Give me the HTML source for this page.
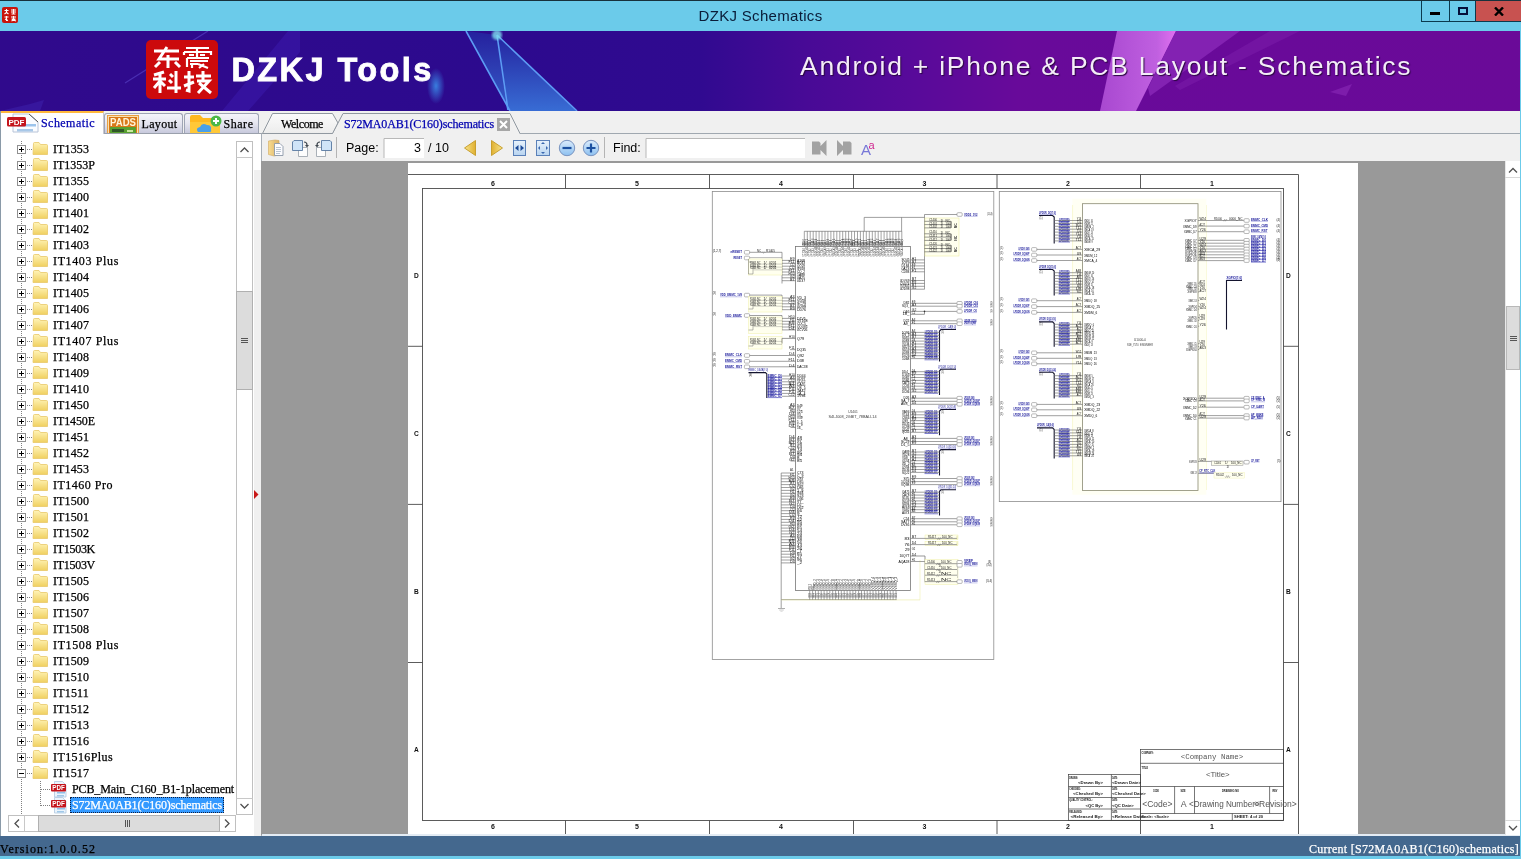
<!DOCTYPE html>
<html>
<head>
<meta charset="utf-8">
<title>DZKJ Schematics</title>
<style>
*{box-sizing:border-box;margin:0;padding:0}
html,body{width:1521px;height:859px;overflow:hidden}
body{position:relative;background:#6bcbea;font-family:"Liberation Sans",sans-serif;font-size:12px;color:#000}
.abs{position:absolute}
#topline{left:0;top:0;width:1521px;height:1px;background:#17313c}
#title{will-change:transform;left:0;top:6px;width:1521px;text-align:center;font-size:15px;line-height:20px;color:#0a1c38;letter-spacing:.32px}
#appicon{left:2px;top:7px;width:16px;height:16px;background:#c8140c;border-radius:2px}
#ctl{left:1421px;top:1px;width:100px;height:21px}
#ctl .b{position:absolute;top:0;height:21px;border:1px solid #0b3a4e;border-top:none}
#banner{will-change:transform;left:0;top:31px;width:1520px;height:80px;background:linear-gradient(90deg,#300a8c 0,#2c0a8e 33%,#300a90 46%,#480a96 53%,#580a9a 60%,#680a9a 67%,#6a0a98 100%);overflow:hidden}
#work{left:0;top:0;width:1521px;height:859px;will-change:transform}
#workbg{left:0;top:111px;width:1520px;height:725px;background:#f0f0f0}
.ser{font-family:"Liberation Serif",serif;font-size:12px;line-height:16px;white-space:pre;-webkit-text-stroke:.25px currentColor}
.row{position:absolute;left:0;height:16px}
.row .t{position:absolute;top:0;height:16px}
#status{will-change:transform;left:0;top:836px;width:1520px;height:20px;background:#44688e}
.mono{font-family:"Liberation Mono",monospace;font-size:10px;letter-spacing:0;white-space:pre}
.tt{display:inline-block;transform:scaleY(1.18);transform-origin:0 50%}
</style>
</head>
<body>
<div id="topline" class="abs"></div>
<div id="appicon" class="abs"></div>
<svg class="abs" style="left:2px;top:7px" width="16" height="16" viewBox="0 0 16 16" stroke="#fff" stroke-width="1.1" fill="none"><path d="M2.500 3.500h4M4.500 2v3.500l-2 1.500M4.500 5.500l2 1.500M9 3h5M9 5h5M11.500 2v5M9.500 7h4M2.500 10h4M4.500 9v5M3 12l3 1.500M9 10h5M11.500 9v2.500M9.500 12h4l-4 2M10 12.500l4 1.500"/></svg>
<div id="title" class="abs">DZKJ Schematics</div>
<div id="ctl" class="abs">
  <div class="b" style="left:0;width:29px"></div>
  <div class="b" style="left:28px;width:28px;border-left:none"></div>
  <div class="b" style="left:54px;width:46px;background:#c85250;border-right:none"></div>
  <div class="abs" style="left:9px;top:11px;width:10px;height:3px;background:#000"></div>
  <div class="abs" style="left:37px;top:6px;width:10px;height:8px;border:2px solid #05103a;border-top-width:2px"></div>
  <svg class="abs" style="left:73px;top:6px" width="10" height="9" viewBox="0 0 10 9"><path d="M1 0.5 L9 8.5 M9 0.5 L1 8.5" stroke="#000" stroke-width="2.4"/></svg>
</div>
<div id="banner" class="abs"><svg class="abs" style="left:0;top:0" width="1520" height="80" viewBox="0 31 1520 80">
<defs>
<linearGradient id="bt" x1="0" y1="0" x2="1" y2="1"><stop offset="0" stop-color="#4a6ae0"/><stop offset="1" stop-color="#3aa0f0"/></linearGradient>
<linearGradient id="bt2" x1="0" y1="0" x2="0" y2="1"><stop offset="0" stop-color="#2424a0"/><stop offset="1" stop-color="#386cd4"/></linearGradient>
<linearGradient id="pv" x1="0" y1="0" x2="1" y2="0"><stop offset="0" stop-color="#a848d0"/><stop offset="0.75" stop-color="#c060e0"/><stop offset="1" stop-color="#e070f0"/></linearGradient>
<radialGradient id="glow"><stop offset="0" stop-color="#3a8ae8" stop-opacity=".9"/><stop offset="1" stop-color="#3a8ae8" stop-opacity="0"/></radialGradient>
<filter id="bl"><feGaussianBlur stdDeviation="1.2"/></filter>
</defs>
<path d="M125 83 L208 31" stroke="#6a5ae0" stroke-width="1.2" opacity=".45"/><polygon points="222,111 248,111 300,52 300,31 288,31" fill="#4428c8" opacity=".3"/><polygon points="0,111 40,111 44,100 30,104" fill="#4a3ad0" opacity=".25"/>
<polygon points="466,31 497,35 507,110 510,110" fill="url(#bt2)" opacity=".85"/>
<polygon points="497,35 576,111 510,111 507,108" fill="url(#bt2)"/>
<path d="M466 31 L510 111 M497 35 L508 110 M497 35 L577 111" stroke="#5c9cf4" stroke-width="1.6" fill="none"/>
<circle cx="497" cy="35" r="5" fill="#7fe0f0" opacity=".8" filter="url(#bl)"/>
<ellipse cx="436" cy="86" rx="9" ry="18" fill="url(#glow)"/>
<polygon points="1117,31 1176,31 1136,111 1100,111" fill="url(#pv)"/>
<polygon points="1176,31 1240,31 1150,96 1148,88" fill="#8a28b8" opacity=".8"/>
<polygon points="1270,31 1300,31 1180,90 1175,86" fill="#7a1aa8" opacity=".6"/>
<polygon points="1330,92 1352,84 1346,96" fill="#8a2ab8" opacity=".6"/>
</svg>
<div class="abs" style="left:146px;top:9px;width:72px;height:59px;background:#cc0a0c;border-radius:5px"></div>
<svg class="abs" style="left:146px;top:9px" width="72" height="59" viewBox="146 40 72 59" fill="none" stroke="#fff" stroke-width="3" stroke-linecap="butt">
<!-- dong -->
<path d="M154 51 H179 M167 47 L159 59 H179 M168 55 V68 M160 62 L155 67 M175 62 L180 67"/>
<!-- zhen -->
<path d="M186 48 H209 M184 52 H211 V55 M184 52 V55 M197 48 V57 M189 55 H194 M200 55 H205 M187 58 H209 M187 58 V67 M190 61 H208 M190 64 H198 M198 64 L208 68 M204 64 L199 68 M192 64 V68" stroke-width="2.2"/>
<!-- ke -->
<path d="M154 75 L164 72 M153 79 H166 M160 74 V93 M160 81 L154 88 M160 81 L165 86 M170 74 L173 77 M169 80 L172 83 M167 88 H181 M176 71 V93"/>
<!-- ji -->
<path d="M184 77 H194 M189 71 V91 L186 90 M184 86 L194 82 M196 76 H211 M203 71 V81 M197 81 H209 L198 93 M199 83 L211 93"/>
</svg>
<div class="abs" id="dz" style="left:231.5px;top:21px;font-weight:bold;font-size:32.5px;line-height:36px;color:#fff;white-space:pre;letter-spacing:2.4px;-webkit-text-stroke:.8px #fff">DZKJ Tools</div>
<div class="abs" id="an" style="left:800px;top:19px;font-size:26.5px;line-height:32px;color:#f4ecf8;white-space:pre;letter-spacing:1.76px;text-shadow:1px 1px 1px #2a0640">Android + iPhone &amp; PCB Layout - Schematics</div>
</div>
<div id="work" class="abs"><div id="workbg" class="abs"></div>
<div class="abs" style="left:0;top:111px;width:1px;height:725px;background:#8a9aa8"></div>
<div class="abs" style="left:1px;top:111px;width:103px;height:23px;background:#fff;border-top:2px solid #ffb83c;border-right:1px solid #c8c8d0"></div>
<div class="abs" style="left:104px;top:133px;width:1416px;height:1px;background:#a0a8b0"></div>
<svg class="abs" style="left:6px;top:112px" width="34" height="22" viewBox="6 112 34 22">
<path d="M13 114 H29 L38 122 V132 H13 Z" fill="#fafcff" stroke="#b8c4d8" stroke-width="1"/>
<path d="M29 114 L38 122" stroke="#555" stroke-width="1"/>
<rect x="17" y="124" width="19" height="2.5" fill="#9cc4ec"/><rect x="17" y="129" width="16" height="2.5" fill="#a8c8e8"/>
<rect x="7" y="117" width="19" height="9.5" rx="1.5" fill="#c4141c"/>
<text x="16.5" y="125" font-family="Liberation Sans" font-weight="bold" font-size="8" fill="#fff" text-anchor="middle" textLength="16" lengthAdjust="spacingAndGlyphs">PDF</text>
</svg>
<div class="abs ser" style="left:41px;top:115px;color:#0000b0;letter-spacing:0.448px;">Schematic</div>
<div class="abs" style="left:104px;top:113px;width:79px;height:21px;border:1px solid #9ea4b4;border-bottom:none;border-radius:3px 3px 0 0;background:linear-gradient(#f4f4fa,#e6e6f0 45%,#c4c6da)"></div>
<div class="abs" style="left:184px;top:113px;width:75px;height:21px;border:1px solid #9ea4b4;border-bottom:none;border-radius:3px 3px 0 0;background:linear-gradient(#f4f4fa,#e6e6f0 45%,#c4c6da)"></div>
<svg class="abs" style="left:106px;top:114px" width="34" height="20" viewBox="106 114 34 20">
<rect x="107" y="115" width="32" height="19" fill="#e8a040"/><rect x="108.500" y="116.500" width="29" height="17" fill="#d87818" stroke="#f8e0b0" stroke-width="1"/>
<rect x="110" y="127" width="26" height="7" fill="#58a030"/><rect x="112" y="129" width="12" height="3" fill="#305828"/><rect x="127" y="130" width="6" height="2" fill="#c8e8a0"/>
<text x="123" y="126" font-family="Liberation Sans" font-weight="bold" font-size="10" fill="#fff4d8" text-anchor="middle" textLength="26" lengthAdjust="spacingAndGlyphs">PADS</text>
</svg>
<div class="abs ser" style="left:141.5px;top:116px;color:#000;letter-spacing:0.336px;">Layout</div>
<svg class="abs" style="left:188px;top:113px" width="36" height="21" viewBox="188 113 36 21">
<path d="M190 117 q0 -2 2 -2 h8 l3 3 h15 q2 0 2 2 v14 h-30 z" fill="#ffb820"/>
<path d="M190 122 h30 v12 h-30 z" fill="#ffc838"/>
<path d="M198 132 q-3 -4 2 -5 q2 -5 7 -2 q5 0 4 5 q1 2 -2 2 z" fill="#4aa0e8"/>
<circle cx="216" cy="121" r="5.500" fill="#4cb848"/>
<path d="M213 121 h6 M216 118 v6" stroke="#fff" stroke-width="2"/>
</svg>
<div class="abs ser" style="left:223.5px;top:116px;color:#000;letter-spacing:0.534px;">Share</div>
<div class="abs" style="left:104px;top:133px;width:157px;height:1px;background:#9aa0ac"></div>
<svg class="abs" style="left:260px;top:111px" width="270" height="24" viewBox="260 111 270 24">
<defs><linearGradient id="dtg" x1="0" y1="0" x2="0" y2="1"><stop offset="0" stop-color="#fbfbfb"/><stop offset="1" stop-color="#ececec"/></linearGradient></defs>
<path d="M262.500 133.500 L272.500 113.500 H332.500 L338 123 L333 133.500 Z" fill="url(#dtg)" stroke="#9098a0" stroke-width="1"/>
<path d="M332.500 134 L343 113.500 H510 L520 134 Z" fill="#f0f0f0"/>
<path d="M332.500 133.500 L343 113.500 H510 L520 133.500" fill="none" stroke="#9098a0" stroke-width="1"/>
<rect x="497" y="118" width="13" height="13" fill="#a6a6a6"/>
<path d="M500 121 L507 128 M507 121 L500 128" stroke="#fff" stroke-width="2"/>
</svg>
<div class="abs ser" style="left:281px;top:116px;color:#000;letter-spacing:-0.431px;">Welcome</div>
<div class="abs ser" style="left:344px;top:116px;color:#0000b0;letter-spacing:-0.133px;">S72MA0AB1(C160)schematics</div>
<div class="abs" style="left:1px;top:134px;width:260px;height:702px;background:#fff"></div>
<div class="abs" style="left:261px;top:134px;width:1px;height:702px;background:#a8b0b8"></div>
<div class="abs" style="left:254px;top:170px;width:7px;height:666px;background:#f0f0f0"></div>
<svg class="abs" style="left:0;top:134px" width="236" height="681" viewBox="0 134 236 681">
<defs><linearGradient id="fg" x1="0" y1="0" x2="0" y2="1"><stop offset="0" stop-color="#fff4b8"/><stop offset="1" stop-color="#f0d060"/></linearGradient><g id="fd"><path d="M0.500 1.500 q0 -1 1 -1 h4.500 l1.500 2 h6 q1 0 1 1 v9 h-14.500 z" fill="url(#fg)" stroke="#e8c868" stroke-width=".8"/></g><g id="pl"><rect x="0.500" y="0.500" width="8" height="8" fill="#fff" stroke="#909090"/><path d="M2 4.500 h5 M4.500 2 v5" stroke="#000" stroke-width="1"/></g><g id="mi"><rect x="0.500" y="0.500" width="8" height="8" fill="#fff" stroke="#909090"/><path d="M2 4.500 h5" stroke="#000" stroke-width="1"/></g><g id="pdf"><path d="M3.500 0.500 h8 l3.500 3.500 v12 h-11.500 z" fill="#eaf4fc" stroke="#b0c8e0" stroke-width=".8"/><rect x="6" y="11" width="8" height="1.500" fill="#90c0e8"/><rect x="6" y="14" width="7" height="1.500" fill="#a0c8e8"/><rect x="0" y="3" width="15" height="7.500" rx="1" fill="#c4141c"/><text x="7.500" y="9.300" font-family="Liberation Sans" font-weight="bold" font-size="6.500" fill="#fff" text-anchor="middle" textLength="12.500" lengthAdjust="spacingAndGlyphs">PDF</text></g></defs>
<path d="M21.500 141 V815" stroke="#808080" stroke-width="1" stroke-dasharray="1 1"/>
<path d="M27 149.5 H33" stroke="#808080" stroke-width="1" stroke-dasharray="1 1"/>
<use href="#pl" x="17" y="145"/>
<use href="#fd" x="33" y="142"/>
<path d="M27 165.5 H33" stroke="#808080" stroke-width="1" stroke-dasharray="1 1"/>
<use href="#pl" x="17" y="161"/>
<use href="#fd" x="33" y="158"/>
<path d="M27 181.5 H33" stroke="#808080" stroke-width="1" stroke-dasharray="1 1"/>
<use href="#pl" x="17" y="177"/>
<use href="#fd" x="33" y="174"/>
<path d="M27 197.5 H33" stroke="#808080" stroke-width="1" stroke-dasharray="1 1"/>
<use href="#pl" x="17" y="193"/>
<use href="#fd" x="33" y="190"/>
<path d="M27 213.5 H33" stroke="#808080" stroke-width="1" stroke-dasharray="1 1"/>
<use href="#pl" x="17" y="209"/>
<use href="#fd" x="33" y="206"/>
<path d="M27 229.5 H33" stroke="#808080" stroke-width="1" stroke-dasharray="1 1"/>
<use href="#pl" x="17" y="225"/>
<use href="#fd" x="33" y="222"/>
<path d="M27 245.5 H33" stroke="#808080" stroke-width="1" stroke-dasharray="1 1"/>
<use href="#pl" x="17" y="241"/>
<use href="#fd" x="33" y="238"/>
<path d="M27 261.5 H33" stroke="#808080" stroke-width="1" stroke-dasharray="1 1"/>
<use href="#pl" x="17" y="257"/>
<use href="#fd" x="33" y="254"/>
<path d="M27 277.5 H33" stroke="#808080" stroke-width="1" stroke-dasharray="1 1"/>
<use href="#pl" x="17" y="273"/>
<use href="#fd" x="33" y="270"/>
<path d="M27 293.5 H33" stroke="#808080" stroke-width="1" stroke-dasharray="1 1"/>
<use href="#pl" x="17" y="289"/>
<use href="#fd" x="33" y="286"/>
<path d="M27 309.5 H33" stroke="#808080" stroke-width="1" stroke-dasharray="1 1"/>
<use href="#pl" x="17" y="305"/>
<use href="#fd" x="33" y="302"/>
<path d="M27 325.5 H33" stroke="#808080" stroke-width="1" stroke-dasharray="1 1"/>
<use href="#pl" x="17" y="321"/>
<use href="#fd" x="33" y="318"/>
<path d="M27 341.5 H33" stroke="#808080" stroke-width="1" stroke-dasharray="1 1"/>
<use href="#pl" x="17" y="337"/>
<use href="#fd" x="33" y="334"/>
<path d="M27 357.5 H33" stroke="#808080" stroke-width="1" stroke-dasharray="1 1"/>
<use href="#pl" x="17" y="353"/>
<use href="#fd" x="33" y="350"/>
<path d="M27 373.5 H33" stroke="#808080" stroke-width="1" stroke-dasharray="1 1"/>
<use href="#pl" x="17" y="369"/>
<use href="#fd" x="33" y="366"/>
<path d="M27 389.5 H33" stroke="#808080" stroke-width="1" stroke-dasharray="1 1"/>
<use href="#pl" x="17" y="385"/>
<use href="#fd" x="33" y="382"/>
<path d="M27 405.5 H33" stroke="#808080" stroke-width="1" stroke-dasharray="1 1"/>
<use href="#pl" x="17" y="401"/>
<use href="#fd" x="33" y="398"/>
<path d="M27 421.5 H33" stroke="#808080" stroke-width="1" stroke-dasharray="1 1"/>
<use href="#pl" x="17" y="417"/>
<use href="#fd" x="33" y="414"/>
<path d="M27 437.5 H33" stroke="#808080" stroke-width="1" stroke-dasharray="1 1"/>
<use href="#pl" x="17" y="433"/>
<use href="#fd" x="33" y="430"/>
<path d="M27 453.5 H33" stroke="#808080" stroke-width="1" stroke-dasharray="1 1"/>
<use href="#pl" x="17" y="449"/>
<use href="#fd" x="33" y="446"/>
<path d="M27 469.5 H33" stroke="#808080" stroke-width="1" stroke-dasharray="1 1"/>
<use href="#pl" x="17" y="465"/>
<use href="#fd" x="33" y="462"/>
<path d="M27 485.5 H33" stroke="#808080" stroke-width="1" stroke-dasharray="1 1"/>
<use href="#pl" x="17" y="481"/>
<use href="#fd" x="33" y="478"/>
<path d="M27 501.5 H33" stroke="#808080" stroke-width="1" stroke-dasharray="1 1"/>
<use href="#pl" x="17" y="497"/>
<use href="#fd" x="33" y="494"/>
<path d="M27 517.5 H33" stroke="#808080" stroke-width="1" stroke-dasharray="1 1"/>
<use href="#pl" x="17" y="513"/>
<use href="#fd" x="33" y="510"/>
<path d="M27 533.5 H33" stroke="#808080" stroke-width="1" stroke-dasharray="1 1"/>
<use href="#pl" x="17" y="529"/>
<use href="#fd" x="33" y="526"/>
<path d="M27 549.5 H33" stroke="#808080" stroke-width="1" stroke-dasharray="1 1"/>
<use href="#pl" x="17" y="545"/>
<use href="#fd" x="33" y="542"/>
<path d="M27 565.5 H33" stroke="#808080" stroke-width="1" stroke-dasharray="1 1"/>
<use href="#pl" x="17" y="561"/>
<use href="#fd" x="33" y="558"/>
<path d="M27 581.5 H33" stroke="#808080" stroke-width="1" stroke-dasharray="1 1"/>
<use href="#pl" x="17" y="577"/>
<use href="#fd" x="33" y="574"/>
<path d="M27 597.5 H33" stroke="#808080" stroke-width="1" stroke-dasharray="1 1"/>
<use href="#pl" x="17" y="593"/>
<use href="#fd" x="33" y="590"/>
<path d="M27 613.5 H33" stroke="#808080" stroke-width="1" stroke-dasharray="1 1"/>
<use href="#pl" x="17" y="609"/>
<use href="#fd" x="33" y="606"/>
<path d="M27 629.5 H33" stroke="#808080" stroke-width="1" stroke-dasharray="1 1"/>
<use href="#pl" x="17" y="625"/>
<use href="#fd" x="33" y="622"/>
<path d="M27 645.5 H33" stroke="#808080" stroke-width="1" stroke-dasharray="1 1"/>
<use href="#pl" x="17" y="641"/>
<use href="#fd" x="33" y="638"/>
<path d="M27 661.5 H33" stroke="#808080" stroke-width="1" stroke-dasharray="1 1"/>
<use href="#pl" x="17" y="657"/>
<use href="#fd" x="33" y="654"/>
<path d="M27 677.5 H33" stroke="#808080" stroke-width="1" stroke-dasharray="1 1"/>
<use href="#pl" x="17" y="673"/>
<use href="#fd" x="33" y="670"/>
<path d="M27 693.5 H33" stroke="#808080" stroke-width="1" stroke-dasharray="1 1"/>
<use href="#pl" x="17" y="689"/>
<use href="#fd" x="33" y="686"/>
<path d="M27 709.5 H33" stroke="#808080" stroke-width="1" stroke-dasharray="1 1"/>
<use href="#pl" x="17" y="705"/>
<use href="#fd" x="33" y="702"/>
<path d="M27 725.5 H33" stroke="#808080" stroke-width="1" stroke-dasharray="1 1"/>
<use href="#pl" x="17" y="721"/>
<use href="#fd" x="33" y="718"/>
<path d="M27 741.5 H33" stroke="#808080" stroke-width="1" stroke-dasharray="1 1"/>
<use href="#pl" x="17" y="737"/>
<use href="#fd" x="33" y="734"/>
<path d="M27 757.5 H33" stroke="#808080" stroke-width="1" stroke-dasharray="1 1"/>
<use href="#pl" x="17" y="753"/>
<use href="#fd" x="33" y="750"/>
<path d="M27 773.5 H33" stroke="#808080" stroke-width="1" stroke-dasharray="1 1"/>
<use href="#mi" x="17" y="769"/>
<use href="#fd" x="33" y="766"/>
<path d="M40.500 781 V806" stroke="#808080" stroke-width="1" stroke-dasharray="1 1"/>
<path d="M41 789.5 H51" stroke="#808080" stroke-width="1" stroke-dasharray="1 1"/>
<use href="#pdf" x="51" y="781"/>
<path d="M41 805.5 H51" stroke="#808080" stroke-width="1" stroke-dasharray="1 1"/>
<use href="#pdf" x="51" y="797"/>
</svg>
<div class="abs ser" style="left:53px;top:141px;color:#000;letter-spacing:0.112px;">IT1353</div>
<div class="abs ser" style="left:53px;top:157px;color:#000;letter-spacing:0.000px;">IT1353P</div>
<div class="abs ser" style="left:53px;top:173px;color:#000;letter-spacing:0.112px;">IT1355</div>
<div class="abs ser" style="left:53px;top:189px;color:#000;letter-spacing:0.112px;">IT1400</div>
<div class="abs ser" style="left:53px;top:205px;color:#000;letter-spacing:0.112px;">IT1401</div>
<div class="abs ser" style="left:53px;top:221px;color:#000;letter-spacing:0.112px;">IT1402</div>
<div class="abs ser" style="left:53px;top:237px;color:#000;letter-spacing:0.112px;">IT1403</div>
<div class="abs ser" style="left:53px;top:253px;color:#000;letter-spacing:0.636px;">IT1403 Plus</div>
<div class="abs ser" style="left:53px;top:269px;color:#000;letter-spacing:0.112px;">IT1404</div>
<div class="abs ser" style="left:53px;top:285px;color:#000;letter-spacing:0.112px;">IT1405</div>
<div class="abs ser" style="left:53px;top:301px;color:#000;letter-spacing:0.112px;">IT1406</div>
<div class="abs ser" style="left:53px;top:317px;color:#000;letter-spacing:0.112px;">IT1407</div>
<div class="abs ser" style="left:53px;top:333px;color:#000;letter-spacing:0.636px;">IT1407 Plus</div>
<div class="abs ser" style="left:53px;top:349px;color:#000;letter-spacing:0.112px;">IT1408</div>
<div class="abs ser" style="left:53px;top:365px;color:#000;letter-spacing:0.112px;">IT1409</div>
<div class="abs ser" style="left:53px;top:381px;color:#000;letter-spacing:0.112px;">IT1410</div>
<div class="abs ser" style="left:53px;top:397px;color:#000;letter-spacing:0.112px;">IT1450</div>
<div class="abs ser" style="left:53px;top:413px;color:#000;letter-spacing:-0.094px;">IT1450E</div>
<div class="abs ser" style="left:53px;top:429px;color:#000;letter-spacing:0.112px;">IT1451</div>
<div class="abs ser" style="left:53px;top:445px;color:#000;letter-spacing:0.112px;">IT1452</div>
<div class="abs ser" style="left:53px;top:461px;color:#000;letter-spacing:0.112px;">IT1453</div>
<div class="abs ser" style="left:53px;top:477px;color:#000;letter-spacing:0.500px;">IT1460 Pro</div>
<div class="abs ser" style="left:53px;top:493px;color:#000;letter-spacing:0.112px;">IT1500</div>
<div class="abs ser" style="left:53px;top:509px;color:#000;letter-spacing:0.112px;">IT1501</div>
<div class="abs ser" style="left:53px;top:525px;color:#000;letter-spacing:0.112px;">IT1502</div>
<div class="abs ser" style="left:53px;top:541px;color:#000;letter-spacing:-0.286px;">IT1503K</div>
<div class="abs ser" style="left:53px;top:557px;color:#000;letter-spacing:-0.286px;">IT1503V</div>
<div class="abs ser" style="left:53px;top:573px;color:#000;letter-spacing:0.112px;">IT1505</div>
<div class="abs ser" style="left:53px;top:589px;color:#000;letter-spacing:0.112px;">IT1506</div>
<div class="abs ser" style="left:53px;top:605px;color:#000;letter-spacing:0.112px;">IT1507</div>
<div class="abs ser" style="left:53px;top:621px;color:#000;letter-spacing:0.112px;">IT1508</div>
<div class="abs ser" style="left:53px;top:637px;color:#000;letter-spacing:0.636px;">IT1508 Plus</div>
<div class="abs ser" style="left:53px;top:653px;color:#000;letter-spacing:0.112px;">IT1509</div>
<div class="abs ser" style="left:53px;top:669px;color:#000;letter-spacing:0.112px;">IT1510</div>
<div class="abs ser" style="left:53px;top:685px;color:#000;letter-spacing:0.185px;">IT1511</div>
<div class="abs ser" style="left:53px;top:701px;color:#000;letter-spacing:0.112px;">IT1512</div>
<div class="abs ser" style="left:53px;top:717px;color:#000;letter-spacing:0.112px;">IT1513</div>
<div class="abs ser" style="left:53px;top:733px;color:#000;letter-spacing:0.112px;">IT1516</div>
<div class="abs ser" style="left:53px;top:749px;color:#000;letter-spacing:0.400px;">IT1516Plus</div>
<div class="abs ser" style="left:53px;top:765px;color:#000;letter-spacing:0.112px;">IT1517</div>
<div class="abs ser" style="left:72px;top:781px;color:#000;letter-spacing:-0.122px;">PCB_Main_C160_B1-1placement</div>
<div class="abs" style="left:70px;top:797px;width:154px;height:16px;background:#3399ff;border:1px dotted #102040"></div>
<div class="abs ser" style="left:72px;top:797px;color:#fff;letter-spacing:-0.133px;">S72MA0AB1(C160)schematics</div>
<svg class="abs" style="left:236px;top:140px" width="17" height="675" viewBox="236 140 17 675">
<rect x="236.500" y="141.500" width="16" height="673" fill="#fff" stroke="#c0c0c0"/>
<path d="M236.500 157.500 h16 M236.500 798.500 h16" stroke="#c8c8c8"/>
<rect x="236.500" y="291.500" width="16" height="98" fill="#dcdcdc" stroke="#b0b0b0"/>
<path d="M241 338.500 h7 M241 340.500 h7 M241 342.500 h7" stroke="#555" stroke-width="1"/>
<path d="M240.500 152 L244.500 148 L248.500 152" fill="none" stroke="#505050" stroke-width="1.300"/>
<path d="M240.500 804 L244.500 808 L248.500 804" fill="none" stroke="#505050" stroke-width="1.300"/>
</svg>
<svg class="abs" style="left:8px;top:815px" width="228" height="18" viewBox="8 815 228 18">
<rect x="8.500" y="815.500" width="227" height="16" fill="#fff" stroke="#c0c0c0"/>
<path d="M24.500 815.500 v16 M219.500 815.500 v16" stroke="#c8c8c8"/>
<rect x="38.500" y="815.500" width="181" height="16" fill="#dcdcdc" stroke="#b0b0b0"/>
<path d="M125.500 820 v7 M127.500 820 v7 M129.500 820 v7" stroke="#555" stroke-width="1"/>
<path d="M19 819.500 L15 823.500 L19 827.500" fill="none" stroke="#505050" stroke-width="1.300"/>
<path d="M225 819.500 L229 823.500 L225 827.500" fill="none" stroke="#505050" stroke-width="1.300"/>
</svg>
<svg class="abs" style="left:254px;top:489px" width="5" height="11" viewBox="0 0 5 11"><path d="M0 1 L4.500 5.500 L0 10 Z" fill="#c81818"/></svg>
<div class="abs" style="left:262px;top:134px;width:1258px;height:27px;background:#f0f0f0"></div>
<svg class="abs" style="left:262px;top:134px" width="640" height="27" viewBox="262 134 640 27">
<defs>
<linearGradient id="gold" x1="0" y1="0" x2="1" y2="0"><stop offset="0" stop-color="#f8e48c"/><stop offset="1" stop-color="#e0b030"/></linearGradient>
<linearGradient id="gold2" x1="1" y1="0" x2="0" y2="0"><stop offset="0" stop-color="#f8e48c"/><stop offset="1" stop-color="#e0b030"/></linearGradient>
<linearGradient id="lb" x1="0" y1="0" x2="0" y2="1"><stop offset="0" stop-color="#e8f2fc"/><stop offset="1" stop-color="#b8d4f0"/></linearGradient>
<linearGradient id="cb" x1="0" y1="0" x2="0" y2="1"><stop offset="0" stop-color="#dcecfc"/><stop offset="1" stop-color="#8cc0f0"/></linearGradient>
<linearGradient id="tan" x1="0" y1="0" x2="1" y2="0"><stop offset="0" stop-color="#f8dc90"/><stop offset="1" stop-color="#d8b068"/></linearGradient>
</defs>
<!-- icon1 paste -->
<path d="M268.500 141 L275 140 L279 140.500 V155 L274 156 L268.500 154.500 Z" fill="url(#tan)" stroke="#d0a860" stroke-width=".6"/>
<path d="M274.500 143.500 H280 L283 146.500 V155.500 H274.500 Z" fill="#fcfcff" stroke="#8c98a8" stroke-width=".9"/>
<path d="M276 147.500 h5 M276 149.500 h5 M276 151.500 h5 M276 153.500 h4" stroke="#a8b8c8" stroke-width=".8"/>
<!-- icon2 rotate cw -->
<path d="M298.500 147.500 H307.500 V156.500 H298.500 Z" fill="#fdfdfd" stroke="#a0a8b0" stroke-width=".9"/>
<path d="M292.500 142 L294 140.500 H302.500 V150.500 H292.500 Z" fill="#cfe4f8" stroke="#5878a0" stroke-width=".9"/>
<path d="M304 142 q3 0 3 3" fill="none" stroke="#404850" stroke-width="1.200"/><path d="M305 145 h4 l-2 2.500 z" fill="#404850"/>
<!-- icon3 rotate ccw -->
<path d="M316.500 147.500 H325.500 V156.500 H316.500 Z" fill="#fdfdfd" stroke="#a0a8b0" stroke-width=".9"/>
<path d="M321.500 140.500 H330 L331.500 142 V150.500 H321.500 Z" fill="#cfe4f8" stroke="#5878a0" stroke-width=".9"/>
<path d="M320 142 q-3 0 -3 3" fill="none" stroke="#404850" stroke-width="1.200"/><path d="M315 145 h4 l-2 2.500 z" fill="#404850"/>
<path d="M336.500 137 V158 M604.500 137 V158" stroke="#b4b4b4" stroke-width="1"/>
<!-- page input -->
<rect x="384" y="138" width="40" height="20" fill="#fff"/><path d="M384 158 V138.500 H424" fill="none" stroke="#b8b8b8" stroke-width="1"/>
<!-- arrows -->
<path d="M475.500 140.500 V155.500 L464.500 148 Z" fill="url(#gold)" stroke="#c8a030" stroke-width="1" stroke-linejoin="round"/>
<path d="M491.500 140.500 V155.500 L502.500 148 Z" fill="url(#gold2)" stroke="#c8a030" stroke-width="1" stroke-linejoin="round"/>
<!-- fit width -->
<rect x="513.500" y="140.500" width="12" height="15" fill="url(#lb)" stroke="#5a80b8"/>
<path d="M518.500 145 V151 L515 148 Z M520.500 145 V151 L524 148 Z" fill="#1c4a98"/>
<!-- fit page -->
<rect x="536.500" y="140.500" width="13" height="15" fill="url(#lb)" stroke="#5a80b8"/>
<path d="M541 144 H545 L543 142 Z M541 152 H545 L543 154 Z M540 146 V150 L538 148 Z M546 146 V150 L548 148 Z" fill="#3a68b0"/>
<!-- zoom out / in -->
<circle cx="567" cy="148" r="7.700" fill="url(#cb)" stroke="#7a94c0" stroke-width="1"/>
<path d="M562.500 148 h9" stroke="#1c50a0" stroke-width="2.200"/>
<circle cx="591" cy="148" r="7.700" fill="url(#cb)" stroke="#7a94c0" stroke-width="1"/>
<path d="M586.500 148 h9 M591 143.500 v9" stroke="#1c50a0" stroke-width="2.200"/>
<!-- find input -->
<rect x="646" y="138" width="159" height="20" fill="#fff"/><path d="M646 158 V138.500 H805" fill="none" stroke="#b8b8b8" stroke-width="1"/>
<!-- find prev/next -->
<path d="M812 141.500 H819 L820.500 143 V146 L826.500 140 V156 L820.500 150 V154.500 H812 Z" fill="#a2a2a2"/>
<path d="M837 140 L843 146 V141.500 H850 L851.500 143 V154.500 H843 V150 L837 156 Z" fill="#a2a2a2"/>
<!-- Aa -->
<text x="861" y="155" font-family="Liberation Sans" font-size="15" fill="#7878d8">A</text>
<text x="868.500" y="148.500" font-family="Liberation Sans" font-size="11" fill="#d02890">a</text>
</svg>
<div class="abs" style="left:346px;top:140px;font-size:12.5px;line-height:16px;white-space:pre">Page:</div>
<div class="abs" style="left:384px;top:140px;width:37px;text-align:right;font-size:12.5px;line-height:16px">3</div>
<div class="abs" style="left:428px;top:140px;font-size:12.5px;line-height:16px;white-space:pre">/ 10</div>
<div class="abs" style="left:613px;top:140px;font-size:12.5px;line-height:16px;white-space:pre">Find:</div>

<div class="abs" style="left:261px;top:161px;width:1245px;height:674px;background:#999"></div>
<div class="abs" style="left:262px;top:834px;width:1258px;height:2px;background:#e4ecf4"></div>
<!-- v scrollbar -->
<svg class="abs" style="left:1505px;top:161px" width="16" height="674" viewBox="1505 161 16 674">
<rect x="1505" y="161" width="15" height="674" fill="#fff"/>
<path d="M1505.500 161 V835" stroke="#e8e8e8"/>
<path d="M1505 177.500 h15 M1505 820.500 h15" stroke="#d8d8d8"/>
<rect x="1506.500" y="306.500" width="13" height="63" fill="#dcdcdc" stroke="#b8b8b8"/>
<path d="M1510 336.500 h7 M1510 338.500 h7 M1510 340.500 h7" stroke="#555"/>
<path d="M1509 172.500 L1513 168.500 L1517 172.500" fill="none" stroke="#505050" stroke-width="1.300"/>
<path d="M1509 826 L1513 830 L1517 826" fill="none" stroke="#505050" stroke-width="1.300"/>
</svg>
<svg class="abs" style="left:408px;top:163px" width="950" height="671" viewBox="408 163 950 671" font-family="Liberation Sans">
<rect x="408" y="163" width="950" height="671" fill="#fff"/>
<path d="M408.0 174.5H1298.5" stroke="#4a4a4a" stroke-width="0.9"/>
<path d="M1298.5 174.5V834.0" stroke="#4a4a4a" stroke-width="0.9"/>
<rect x="422.5" y="188.5" width="861.0" height="632.0" fill="none" stroke="#4a4a4a" stroke-width="0.9" />
<path d="M565.5 174.5V188.5" stroke="#4a4a4a" stroke-width="0.9"/>
<path d="M565.5 820.5V834.0" stroke="#4a4a4a" stroke-width="0.9"/>
<path d="M709.5 174.5V188.5" stroke="#4a4a4a" stroke-width="0.9"/>
<path d="M709.5 820.5V834.0" stroke="#4a4a4a" stroke-width="0.9"/>
<path d="M853.5 174.5V188.5" stroke="#4a4a4a" stroke-width="0.9"/>
<path d="M853.5 820.5V834.0" stroke="#4a4a4a" stroke-width="0.9"/>
<path d="M997.0 174.5V188.5" stroke="#4a4a4a" stroke-width="0.9"/>
<path d="M997.0 820.5V834.0" stroke="#4a4a4a" stroke-width="0.9"/>
<path d="M1140.5 174.5V188.5" stroke="#4a4a4a" stroke-width="0.9"/>
<path d="M1140.5 820.5V834.0" stroke="#4a4a4a" stroke-width="0.9"/>
<path d="M408.0 346.3H422.5" stroke="#4a4a4a" stroke-width="0.9"/>
<path d="M1283.5 346.3H1298.5" stroke="#4a4a4a" stroke-width="0.9"/>
<path d="M408.0 504.4H422.5" stroke="#4a4a4a" stroke-width="0.9"/>
<path d="M1283.5 504.4H1298.5" stroke="#4a4a4a" stroke-width="0.9"/>
<path d="M408.0 662.5H422.5" stroke="#4a4a4a" stroke-width="0.9"/>
<path d="M1283.5 662.5H1298.5" stroke="#4a4a4a" stroke-width="0.9"/>
<text x="493.0" y="186.3" font-size="7" fill="#111" text-anchor="middle" font-weight="bold" >6</text>
<text x="493.0" y="829.3" font-size="7" fill="#111" text-anchor="middle" font-weight="bold" >6</text>
<text x="637.0" y="186.3" font-size="7" fill="#111" text-anchor="middle" font-weight="bold" >5</text>
<text x="637.0" y="829.3" font-size="7" fill="#111" text-anchor="middle" font-weight="bold" >5</text>
<text x="781.0" y="186.3" font-size="7" fill="#111" text-anchor="middle" font-weight="bold" >4</text>
<text x="781.0" y="829.3" font-size="7" fill="#111" text-anchor="middle" font-weight="bold" >4</text>
<text x="924.5" y="186.3" font-size="7" fill="#111" text-anchor="middle" font-weight="bold" >3</text>
<text x="924.5" y="829.3" font-size="7" fill="#111" text-anchor="middle" font-weight="bold" >3</text>
<text x="1068.0" y="186.3" font-size="7" fill="#111" text-anchor="middle" font-weight="bold" >2</text>
<text x="1068.0" y="829.3" font-size="7" fill="#111" text-anchor="middle" font-weight="bold" >2</text>
<text x="1212.0" y="186.3" font-size="7" fill="#111" text-anchor="middle" font-weight="bold" >1</text>
<text x="1212.0" y="829.3" font-size="7" fill="#111" text-anchor="middle" font-weight="bold" >1</text>
<text x="416.3" y="277.9" font-size="6.6" fill="#111" text-anchor="middle" font-weight="bold" >D</text>
<text x="1288.5" y="277.9" font-size="6.6" fill="#111" text-anchor="middle" font-weight="bold" >D</text>
<text x="416.3" y="435.7" font-size="6.6" fill="#111" text-anchor="middle" font-weight="bold" >C</text>
<text x="1288.5" y="435.7" font-size="6.6" fill="#111" text-anchor="middle" font-weight="bold" >C</text>
<text x="416.3" y="593.9" font-size="6.6" fill="#111" text-anchor="middle" font-weight="bold" >B</text>
<text x="1288.5" y="593.9" font-size="6.6" fill="#111" text-anchor="middle" font-weight="bold" >B</text>
<text x="416.3" y="751.9" font-size="6.6" fill="#111" text-anchor="middle" font-weight="bold" >A</text>
<text x="1288.5" y="751.9" font-size="6.6" fill="#111" text-anchor="middle" font-weight="bold" >A</text>
<rect x="1140.5" y="749.4" width="143.0" height="70.9" fill="none" stroke="#3c3c3c" stroke-width="0.7" />
<path d="M1140.5 763.3H1283.5" stroke="#3c3c3c" stroke-width="0.7"/>
<path d="M1140.5 786.5H1283.5" stroke="#3c3c3c" stroke-width="0.7"/>
<path d="M1140.5 813.5H1283.5" stroke="#3c3c3c" stroke-width="0.7"/>
<path d="M1174.6 786.5V813.5" stroke="#3c3c3c" stroke-width="0.7"/>
<path d="M1194.5 786.5V813.5" stroke="#3c3c3c" stroke-width="0.7"/>
<path d="M1269.6 786.5V813.5" stroke="#3c3c3c" stroke-width="0.7"/>
<path d="M1232.3 813.5V820.3" stroke="#3c3c3c" stroke-width="0.7"/>
<rect x="1068.5" y="774.5" width="72.0" height="45.8" fill="none" stroke="#3c3c3c" stroke-width="0.7" />
<path d="M1068.5 786.5H1140.5" stroke="#3c3c3c" stroke-width="0.7"/>
<path d="M1068.5 797.5H1140.5" stroke="#3c3c3c" stroke-width="0.7"/>
<path d="M1068.5 809.0H1140.5" stroke="#3c3c3c" stroke-width="0.7"/>
<path d="M1111.4 774.5V820.3" stroke="#3c3c3c" stroke-width="0.7"/>
<text x="1212.0" y="758.6" font-family="Liberation Mono" font-size="6.8" fill="#555" text-anchor="middle" textLength="62.5" lengthAdjust="spacingAndGlyphs" >&lt;Company Name&gt;</text>
<text x="1217.8" y="777.4" font-size="6.8" fill="#555" text-anchor="middle" textLength="23.6" lengthAdjust="spacingAndGlyphs" >&lt;Title&gt;</text>
<text x="1142.2" y="807.2" font-size="8.8" fill="#555" textLength="30.4" lengthAdjust="spacingAndGlyphs" >&lt;Code&gt;</text>
<text x="1180.8" y="807.2" font-size="8.8" fill="#555" >A</text>
<text x="1189.0" y="807.2" font-size="8.8" fill="#555" textLength="70.7" lengthAdjust="spacingAndGlyphs" >&lt;Drawing Number&gt;</text>
<text x="1254.0" y="807.2" font-size="8.8" fill="#555" textLength="42.7" lengthAdjust="spacingAndGlyphs" >&lt;Revision&gt;</text>
<text x="1141.5" y="754.3" font-size="4.3" fill="#111" font-weight="bold" textLength="12.0" lengthAdjust="spacingAndGlyphs" >COMPANY:</text>
<text x="1141.5" y="769.0" font-size="4.3" fill="#111" font-weight="bold" textLength="6.5" lengthAdjust="spacingAndGlyphs" >TITLE</text>
<text x="1153.0" y="791.5" font-size="4.3" fill="#111" font-weight="bold" textLength="6.0" lengthAdjust="spacingAndGlyphs" >CODE</text>
<text x="1180.5" y="791.5" font-size="4.3" fill="#111" font-weight="bold" textLength="5.0" lengthAdjust="spacingAndGlyphs" >SIZE</text>
<text x="1222.0" y="791.5" font-size="4.3" fill="#111" font-weight="bold" textLength="17.0" lengthAdjust="spacingAndGlyphs" >DRAWING NO</text>
<text x="1272.5" y="791.5" font-size="4.3" fill="#111" font-weight="bold" textLength="5.0" lengthAdjust="spacingAndGlyphs" >REV</text>
<text x="1141.5" y="817.9" font-size="4.3" fill="#222" font-weight="bold" textLength="27.5" lengthAdjust="spacingAndGlyphs" >Scale: &lt;Scale&gt;</text>
<text x="1234.0" y="817.9" font-size="4.3" fill="#222" font-weight="bold" textLength="29.0" lengthAdjust="spacingAndGlyphs" >SHEET: 4  of  20</text>
<text x="1069.3" y="778.6" font-size="4.3" fill="#111" font-weight="bold" textLength="8.7" lengthAdjust="spacingAndGlyphs" >DRAWN:</text>
<text x="1112.2" y="778.6" font-size="4.3" fill="#111" font-weight="bold" textLength="5.5" lengthAdjust="spacingAndGlyphs" >DATE:</text>
<text x="1103.0" y="783.7" font-size="4.2" fill="#222" text-anchor="end" font-weight="bold" textLength="25.0" lengthAdjust="spacingAndGlyphs" >&lt;Drawn By&gt;</text>
<text x="1112.0" y="783.7" font-size="4.2" fill="#222" font-weight="bold" textLength="29.0" lengthAdjust="spacingAndGlyphs" >&lt;Drawn Date&gt;</text>
<text x="1069.3" y="789.9" font-size="4.3" fill="#111" font-weight="bold" textLength="11.6" lengthAdjust="spacingAndGlyphs" >CHECKED:</text>
<text x="1112.2" y="789.9" font-size="4.3" fill="#111" font-weight="bold" textLength="5.5" lengthAdjust="spacingAndGlyphs" >DATE:</text>
<text x="1103.0" y="795.0" font-size="4.2" fill="#222" text-anchor="end" font-weight="bold" textLength="30.0" lengthAdjust="spacingAndGlyphs" >&lt;Checked By&gt;</text>
<text x="1112.0" y="795.0" font-size="4.2" fill="#222" font-weight="bold" textLength="33.9" lengthAdjust="spacingAndGlyphs" >&lt;Checked Date&gt;</text>
<text x="1069.3" y="801.4" font-size="4.3" fill="#111" font-weight="bold" textLength="23.2" lengthAdjust="spacingAndGlyphs" >QUALITY CONTROL:</text>
<text x="1112.2" y="801.4" font-size="4.3" fill="#111" font-weight="bold" textLength="5.5" lengthAdjust="spacingAndGlyphs" >DATE:</text>
<text x="1103.0" y="806.5" font-size="4.2" fill="#222" text-anchor="end" font-weight="bold" textLength="17.5" lengthAdjust="spacingAndGlyphs" >&lt;QC By&gt;</text>
<text x="1112.0" y="806.5" font-size="4.2" fill="#222" font-weight="bold" textLength="21.8" lengthAdjust="spacingAndGlyphs" >&lt;QC Date&gt;</text>
<text x="1069.3" y="812.8" font-size="4.3" fill="#111" font-weight="bold" textLength="13.0" lengthAdjust="spacingAndGlyphs" >RELEASED:</text>
<text x="1112.2" y="812.8" font-size="4.3" fill="#111" font-weight="bold" textLength="5.5" lengthAdjust="spacingAndGlyphs" >DATE:</text>
<text x="1103.0" y="817.9" font-size="4.2" fill="#222" text-anchor="end" font-weight="bold" textLength="32.5" lengthAdjust="spacingAndGlyphs" >&lt;Released By&gt;</text>
<text x="1112.0" y="817.9" font-size="4.2" fill="#222" font-weight="bold" textLength="33.9" lengthAdjust="spacingAndGlyphs" >&lt;Release Date&gt;</text>
<rect x="712.3" y="191.4" width="281.5" height="468.0" fill="none" stroke="#8c8c8c" stroke-width="0.8" />
<rect x="999.3" y="191.4" width="281.7" height="310.2" fill="none" stroke="#8c8c8c" stroke-width="0.8" />
<rect x="795.6" y="246.5" width="115.0" height="344.0" fill="#fff" stroke="#767676" stroke-width=".8"/>
<text x="853.0" y="413.0" font-size="3.7" fill="#3a3a3a" text-anchor="middle" textLength="9.5" lengthAdjust="spacingAndGlyphs" >U1401</text>
<text x="852.5" y="418.0" font-size="3.7" fill="#3a3a3a" text-anchor="middle" textLength="48.0" lengthAdjust="spacingAndGlyphs" >S4LJ008_2GBIT_78BALL14</text>
<path d="M804.3 231.3H901.8" stroke="#6c6c6c" stroke-width="0.65"/>
<path d="M804.3 231.3V246.5" stroke="#666" stroke-width="0.6"/>
<text x="805.3" y="245.8" font-size="3.7" fill="#222" font-weight="bold" textLength="6.5" lengthAdjust="spacingAndGlyphs" transform="rotate(-90 805.3 245.8)" >VDD2_0</text>
<text x="805.3" y="256.5" font-size="3.7" fill="#3c3c3c" textLength="8.0" lengthAdjust="spacingAndGlyphs" transform="rotate(-90 805.3 256.5)" >VDDCA0</text>
<path d="M807.3 231.3V246.5" stroke="#666" stroke-width="0.6"/>
<text x="808.3" y="245.8" font-size="3.7" fill="#222" font-weight="bold" textLength="6.5" lengthAdjust="spacingAndGlyphs" transform="rotate(-90 808.3 245.8)" >VDD2_1</text>
<text x="808.3" y="256.5" font-size="3.7" fill="#3c3c3c" textLength="9.5" lengthAdjust="spacingAndGlyphs" transform="rotate(-90 808.3 256.5)" >VDDCA1</text>
<path d="M810.2 231.3V246.5" stroke="#666" stroke-width="0.6"/>
<text x="811.2" y="245.8" font-size="3.7" fill="#222" font-weight="bold" textLength="5.5" lengthAdjust="spacingAndGlyphs" transform="rotate(-90 811.2 245.8)" >VDD2_2</text>
<text x="811.2" y="256.5" font-size="3.7" fill="#3c3c3c" textLength="8.0" lengthAdjust="spacingAndGlyphs" transform="rotate(-90 811.2 256.5)" >VDDCA2</text>
<path d="M813.2 231.3V246.5" stroke="#666" stroke-width="0.6"/>
<text x="814.2" y="245.8" font-size="3.7" fill="#222" font-weight="bold" textLength="7.0" lengthAdjust="spacingAndGlyphs" transform="rotate(-90 814.2 245.8)" >VDD2_3</text>
<text x="814.2" y="256.5" font-size="3.7" fill="#3c3c3c" textLength="8.0" lengthAdjust="spacingAndGlyphs" transform="rotate(-90 814.2 256.5)" >VDDCA3</text>
<path d="M816.1 231.3V246.5" stroke="#666" stroke-width="0.6"/>
<text x="817.1" y="245.8" font-size="3.7" fill="#222" font-weight="bold" textLength="6.5" lengthAdjust="spacingAndGlyphs" transform="rotate(-90 817.1 245.8)" >VDD2_4</text>
<text x="817.1" y="256.5" font-size="3.7" fill="#3c3c3c" textLength="9.5" lengthAdjust="spacingAndGlyphs" transform="rotate(-90 817.1 256.5)" >VDDCA4</text>
<path d="M819.1 231.3V246.5" stroke="#666" stroke-width="0.6"/>
<text x="820.1" y="245.8" font-size="3.7" fill="#222" font-weight="bold" textLength="5.5" lengthAdjust="spacingAndGlyphs" transform="rotate(-90 820.1 245.8)" >VDD2_5</text>
<text x="820.1" y="256.5" font-size="3.7" fill="#3c3c3c" textLength="9.5" lengthAdjust="spacingAndGlyphs" transform="rotate(-90 820.1 256.5)" >VDDCA5</text>
<path d="M822.0 231.3V246.5" stroke="#666" stroke-width="0.6"/>
<text x="823.0" y="245.8" font-size="3.7" fill="#222" font-weight="bold" textLength="5.5" lengthAdjust="spacingAndGlyphs" transform="rotate(-90 823.0 245.8)" >VDD2_6</text>
<text x="823.0" y="256.5" font-size="3.7" fill="#3c3c3c" textLength="8.0" lengthAdjust="spacingAndGlyphs" transform="rotate(-90 823.0 256.5)" >VDDCA6</text>
<path d="M825.0 231.3V246.5" stroke="#666" stroke-width="0.6"/>
<text x="826.0" y="245.8" font-size="3.7" fill="#222" font-weight="bold" textLength="5.5" lengthAdjust="spacingAndGlyphs" transform="rotate(-90 826.0 245.8)" >VDD2_7</text>
<text x="826.0" y="256.5" font-size="3.7" fill="#3c3c3c" textLength="9.0" lengthAdjust="spacingAndGlyphs" transform="rotate(-90 826.0 256.5)" >VDDCA0</text>
<path d="M827.9 231.3V246.5" stroke="#666" stroke-width="0.6"/>
<text x="828.9" y="245.8" font-size="3.7" fill="#222" font-weight="bold" textLength="6.5" lengthAdjust="spacingAndGlyphs" transform="rotate(-90 828.9 245.8)" >VDD2_8</text>
<text x="828.9" y="256.5" font-size="3.7" fill="#3c3c3c" textLength="8.0" lengthAdjust="spacingAndGlyphs" transform="rotate(-90 828.9 256.5)" >VDDCA1</text>
<path d="M830.9 231.3V246.5" stroke="#666" stroke-width="0.6"/>
<text x="831.9" y="245.8" font-size="3.7" fill="#222" font-weight="bold" textLength="5.5" lengthAdjust="spacingAndGlyphs" transform="rotate(-90 831.9 245.8)" >VDD2_0</text>
<text x="831.9" y="256.5" font-size="3.7" fill="#3c3c3c" textLength="8.0" lengthAdjust="spacingAndGlyphs" transform="rotate(-90 831.9 256.5)" >VDDCA2</text>
<path d="M833.8 231.3V246.5" stroke="#666" stroke-width="0.6"/>
<text x="834.8" y="245.8" font-size="3.7" fill="#222" font-weight="bold" textLength="7.0" lengthAdjust="spacingAndGlyphs" transform="rotate(-90 834.8 245.8)" >VDD2_1</text>
<text x="834.8" y="256.5" font-size="3.7" fill="#3c3c3c" textLength="9.0" lengthAdjust="spacingAndGlyphs" transform="rotate(-90 834.8 256.5)" >VDDCA3</text>
<path d="M836.8 231.3V246.5" stroke="#666" stroke-width="0.6"/>
<text x="837.8" y="245.8" font-size="3.7" fill="#222" font-weight="bold" textLength="5.5" lengthAdjust="spacingAndGlyphs" transform="rotate(-90 837.8 245.8)" >VDD2_2</text>
<text x="837.8" y="256.5" font-size="3.7" fill="#3c3c3c" textLength="9.5" lengthAdjust="spacingAndGlyphs" transform="rotate(-90 837.8 256.5)" >VDDCA4</text>
<path d="M839.8 231.3V246.5" stroke="#666" stroke-width="0.6"/>
<text x="840.8" y="245.8" font-size="3.7" fill="#222" font-weight="bold" textLength="5.5" lengthAdjust="spacingAndGlyphs" transform="rotate(-90 840.8 245.8)" >VDD2_3</text>
<text x="840.8" y="256.5" font-size="3.7" fill="#3c3c3c" textLength="8.0" lengthAdjust="spacingAndGlyphs" transform="rotate(-90 840.8 256.5)" >VDDCA5</text>
<path d="M842.7 231.3V246.5" stroke="#666" stroke-width="0.6"/>
<text x="843.7" y="245.8" font-size="3.7" fill="#222" font-weight="bold" textLength="7.0" lengthAdjust="spacingAndGlyphs" transform="rotate(-90 843.7 245.8)" >VDD2_4</text>
<text x="843.7" y="256.5" font-size="3.7" fill="#3c3c3c" textLength="9.5" lengthAdjust="spacingAndGlyphs" transform="rotate(-90 843.7 256.5)" >VDDCA6</text>
<path d="M845.7 231.3V246.5" stroke="#666" stroke-width="0.6"/>
<text x="846.7" y="245.8" font-size="3.7" fill="#222" font-weight="bold" textLength="7.0" lengthAdjust="spacingAndGlyphs" transform="rotate(-90 846.7 245.8)" >VDD2_5</text>
<text x="846.7" y="256.5" font-size="3.7" fill="#3c3c3c" textLength="8.0" lengthAdjust="spacingAndGlyphs" transform="rotate(-90 846.7 256.5)" >VDDCA0</text>
<path d="M848.6 231.3V246.5" stroke="#666" stroke-width="0.6"/>
<text x="849.6" y="245.8" font-size="3.7" fill="#222" font-weight="bold" textLength="7.0" lengthAdjust="spacingAndGlyphs" transform="rotate(-90 849.6 245.8)" >VDD2_6</text>
<text x="849.6" y="256.5" font-size="3.7" fill="#3c3c3c" textLength="9.5" lengthAdjust="spacingAndGlyphs" transform="rotate(-90 849.6 256.5)" >VDDCA1</text>
<path d="M851.6 231.3V246.5" stroke="#666" stroke-width="0.6"/>
<text x="852.6" y="245.8" font-size="3.7" fill="#222" font-weight="bold" textLength="6.5" lengthAdjust="spacingAndGlyphs" transform="rotate(-90 852.6 245.8)" >VDD2_7</text>
<text x="852.6" y="256.5" font-size="3.7" fill="#3c3c3c" textLength="8.0" lengthAdjust="spacingAndGlyphs" transform="rotate(-90 852.6 256.5)" >VDDCA2</text>
<path d="M854.5 231.3V246.5" stroke="#666" stroke-width="0.6"/>
<text x="855.5" y="245.8" font-size="3.7" fill="#222" font-weight="bold" textLength="5.5" lengthAdjust="spacingAndGlyphs" transform="rotate(-90 855.5 245.8)" >VDD2_8</text>
<text x="855.5" y="256.5" font-size="3.7" fill="#3c3c3c" textLength="8.0" lengthAdjust="spacingAndGlyphs" transform="rotate(-90 855.5 256.5)" >VDDCA3</text>
<path d="M857.5 231.3V246.5" stroke="#666" stroke-width="0.6"/>
<text x="858.5" y="245.8" font-size="3.7" fill="#222" font-weight="bold" textLength="7.0" lengthAdjust="spacingAndGlyphs" transform="rotate(-90 858.5 245.8)" >VDD2_0</text>
<text x="858.5" y="256.5" font-size="3.7" fill="#3c3c3c" textLength="8.0" lengthAdjust="spacingAndGlyphs" transform="rotate(-90 858.5 256.5)" >VDDCA4</text>
<path d="M860.4 231.3V246.5" stroke="#666" stroke-width="0.6"/>
<text x="861.4" y="245.8" font-size="3.7" fill="#222" font-weight="bold" textLength="6.5" lengthAdjust="spacingAndGlyphs" transform="rotate(-90 861.4 245.8)" >VDD2_1</text>
<text x="861.4" y="256.5" font-size="3.7" fill="#3c3c3c" textLength="9.0" lengthAdjust="spacingAndGlyphs" transform="rotate(-90 861.4 256.5)" >VDDCA5</text>
<path d="M863.4 231.3V246.5" stroke="#666" stroke-width="0.6"/>
<text x="864.4" y="245.8" font-size="3.7" fill="#222" font-weight="bold" textLength="5.5" lengthAdjust="spacingAndGlyphs" transform="rotate(-90 864.4 245.8)" >VDD2_2</text>
<text x="864.4" y="256.5" font-size="3.7" fill="#3c3c3c" textLength="9.5" lengthAdjust="spacingAndGlyphs" transform="rotate(-90 864.4 256.5)" >VDDCA6</text>
<path d="M866.3 231.3V246.5" stroke="#666" stroke-width="0.6"/>
<text x="867.3" y="245.8" font-size="3.7" fill="#222" font-weight="bold" textLength="5.5" lengthAdjust="spacingAndGlyphs" transform="rotate(-90 867.3 245.8)" >VDD2_3</text>
<text x="867.3" y="256.5" font-size="3.7" fill="#3c3c3c" textLength="9.5" lengthAdjust="spacingAndGlyphs" transform="rotate(-90 867.3 256.5)" >VDDCA0</text>
<path d="M869.3 231.3V246.5" stroke="#666" stroke-width="0.6"/>
<text x="870.3" y="245.8" font-size="3.7" fill="#222" font-weight="bold" textLength="6.5" lengthAdjust="spacingAndGlyphs" transform="rotate(-90 870.3 245.8)" >VDD2_4</text>
<text x="870.3" y="256.5" font-size="3.7" fill="#3c3c3c" textLength="9.5" lengthAdjust="spacingAndGlyphs" transform="rotate(-90 870.3 256.5)" >VDDCA1</text>
<path d="M872.3 231.3V246.5" stroke="#666" stroke-width="0.6"/>
<text x="873.3" y="245.8" font-size="3.7" fill="#222" font-weight="bold" textLength="7.0" lengthAdjust="spacingAndGlyphs" transform="rotate(-90 873.3 245.8)" >VDD2_5</text>
<text x="873.3" y="256.5" font-size="3.7" fill="#3c3c3c" textLength="8.0" lengthAdjust="spacingAndGlyphs" transform="rotate(-90 873.3 256.5)" >VDDCA2</text>
<path d="M875.2 231.3V246.5" stroke="#666" stroke-width="0.6"/>
<text x="876.2" y="245.8" font-size="3.7" fill="#222" font-weight="bold" textLength="5.5" lengthAdjust="spacingAndGlyphs" transform="rotate(-90 876.2 245.8)" >VDD2_6</text>
<text x="876.2" y="256.5" font-size="3.7" fill="#3c3c3c" textLength="9.5" lengthAdjust="spacingAndGlyphs" transform="rotate(-90 876.2 256.5)" >VDDCA3</text>
<path d="M878.2 231.3V246.5" stroke="#666" stroke-width="0.6"/>
<text x="879.2" y="245.8" font-size="3.7" fill="#222" font-weight="bold" textLength="7.0" lengthAdjust="spacingAndGlyphs" transform="rotate(-90 879.2 245.8)" >VDD2_7</text>
<text x="879.2" y="256.5" font-size="3.7" fill="#3c3c3c" textLength="9.5" lengthAdjust="spacingAndGlyphs" transform="rotate(-90 879.2 256.5)" >VDDCA4</text>
<path d="M881.1 231.3V246.5" stroke="#666" stroke-width="0.6"/>
<text x="882.1" y="245.8" font-size="3.7" fill="#222" font-weight="bold" textLength="5.5" lengthAdjust="spacingAndGlyphs" transform="rotate(-90 882.1 245.8)" >VDD2_8</text>
<text x="882.1" y="256.5" font-size="3.7" fill="#3c3c3c" textLength="9.0" lengthAdjust="spacingAndGlyphs" transform="rotate(-90 882.1 256.5)" >VDDCA5</text>
<path d="M884.1 231.3V246.5" stroke="#666" stroke-width="0.6"/>
<text x="885.1" y="245.8" font-size="3.7" fill="#222" font-weight="bold" textLength="5.5" lengthAdjust="spacingAndGlyphs" transform="rotate(-90 885.1 245.8)" >VDD2_0</text>
<text x="885.1" y="256.5" font-size="3.7" fill="#3c3c3c" textLength="9.5" lengthAdjust="spacingAndGlyphs" transform="rotate(-90 885.1 256.5)" >VDDCA6</text>
<path d="M887.0 231.3V246.5" stroke="#666" stroke-width="0.6"/>
<text x="888.0" y="245.8" font-size="3.7" fill="#222" font-weight="bold" textLength="7.0" lengthAdjust="spacingAndGlyphs" transform="rotate(-90 888.0 245.8)" >VDD2_1</text>
<text x="888.0" y="256.5" font-size="3.7" fill="#3c3c3c" textLength="8.0" lengthAdjust="spacingAndGlyphs" transform="rotate(-90 888.0 256.5)" >VDDCA0</text>
<path d="M890.0 231.3V246.5" stroke="#666" stroke-width="0.6"/>
<text x="891.0" y="245.8" font-size="3.7" fill="#222" font-weight="bold" textLength="7.0" lengthAdjust="spacingAndGlyphs" transform="rotate(-90 891.0 245.8)" >VDD2_2</text>
<text x="891.0" y="256.5" font-size="3.7" fill="#3c3c3c" textLength="8.0" lengthAdjust="spacingAndGlyphs" transform="rotate(-90 891.0 256.5)" >VDDCA1</text>
<path d="M892.9 231.3V246.5" stroke="#666" stroke-width="0.6"/>
<text x="893.9" y="245.8" font-size="3.7" fill="#222" font-weight="bold" textLength="7.0" lengthAdjust="spacingAndGlyphs" transform="rotate(-90 893.9 245.8)" >VDD2_3</text>
<text x="893.9" y="256.5" font-size="3.7" fill="#3c3c3c" textLength="8.0" lengthAdjust="spacingAndGlyphs" transform="rotate(-90 893.9 256.5)" >VDDCA2</text>
<path d="M895.9 231.3V246.5" stroke="#666" stroke-width="0.6"/>
<text x="896.9" y="245.8" font-size="3.7" fill="#222" font-weight="bold" textLength="6.5" lengthAdjust="spacingAndGlyphs" transform="rotate(-90 896.9 245.8)" >VDD2_4</text>
<text x="896.9" y="256.5" font-size="3.7" fill="#3c3c3c" textLength="9.5" lengthAdjust="spacingAndGlyphs" transform="rotate(-90 896.9 256.5)" >VDDCA3</text>
<path d="M898.8 231.3V246.5" stroke="#666" stroke-width="0.6"/>
<text x="899.8" y="245.8" font-size="3.7" fill="#222" font-weight="bold" textLength="7.0" lengthAdjust="spacingAndGlyphs" transform="rotate(-90 899.8 245.8)" >VDD2_5</text>
<text x="899.8" y="256.5" font-size="3.7" fill="#3c3c3c" textLength="9.0" lengthAdjust="spacingAndGlyphs" transform="rotate(-90 899.8 256.5)" >VDDCA4</text>
<path d="M901.8 231.3V246.5" stroke="#666" stroke-width="0.6"/>
<text x="902.8" y="245.8" font-size="3.7" fill="#222" font-weight="bold" textLength="6.5" lengthAdjust="spacingAndGlyphs" transform="rotate(-90 902.8 245.8)" >VDD2_6</text>
<text x="902.8" y="256.5" font-size="3.7" fill="#3c3c3c" textLength="9.0" lengthAdjust="spacingAndGlyphs" transform="rotate(-90 902.8 256.5)" >VDDCA5</text>
<path d="M864.2 217.4V231.3" stroke="#6c6c6c" stroke-width="0.65"/>
<path d="M901.6 217.4V231.3" stroke="#6c6c6c" stroke-width="0.65"/>
<path d="M864.2 217.4H924.5" stroke="#6c6c6c" stroke-width="0.65"/>
<path d="M924.5 214.5V289.3" stroke="#6c6c6c" stroke-width="0.65"/>
<path d="M924.5 214.5H957.0" stroke="#6c6c6c" stroke-width="0.65"/>
<rect x="957.0" y="212.7" width="5.2" height="3.6" fill="#fff" stroke="#8a8a8a" stroke-width="0.6" rx="1"/>
<text x="964.0" y="215.8" font-size="4.3" fill="#1a1a9a" font-weight="bold" textLength="13.5" lengthAdjust="spacingAndGlyphs" >VDD2_1V2</text>
<path d="M964.0 216.4H977.5" stroke="#5a5ac8" stroke-width="0.35"/>
<text x="987.0" y="214.5" font-size="4.3" fill="#111" textLength="5.5" lengthAdjust="spacingAndGlyphs" >(1,3,4)</text>
<rect x="925.0" y="218.0" width="34.0" height="38.0" fill="#ffffee" stroke="#ecec98" stroke-width="0.5" />
<path d="M924.5 221.3H951.0" stroke="#555" stroke-width="0.6"/>
<text x="929.0" y="220.9" font-size="3.7" fill="#161616" textLength="8.0" lengthAdjust="spacingAndGlyphs" >C1400</text>
<text x="940.5" y="221.6" font-size="3.7" fill="#161616" textLength="2.5" lengthAdjust="spacingAndGlyphs" >1/</text>
<text x="945.5" y="221.6" font-size="3.7" fill="#161616" textLength="4.5" lengthAdjust="spacingAndGlyphs" >NC</text>
<path d="M924.5 224.6H951.0" stroke="#555" stroke-width="0.6"/>
<text x="929.0" y="224.9" font-size="3.7" fill="#161616" textLength="8.0" lengthAdjust="spacingAndGlyphs" >C1401</text>
<text x="940.5" y="224.9" font-size="3.7" fill="#161616" textLength="2.5" lengthAdjust="spacingAndGlyphs" >1/</text>
<text x="945.5" y="224.9" font-size="3.7" fill="#161616" textLength="4.5" lengthAdjust="spacingAndGlyphs" >100</text>
<path d="M924.5 227.9H951.0" stroke="#555" stroke-width="0.6"/>
<text x="929.0" y="228.2" font-size="3.7" fill="#161616" textLength="8.0" lengthAdjust="spacingAndGlyphs" >C1402</text>
<text x="940.5" y="228.2" font-size="3.7" fill="#161616" textLength="2.5" lengthAdjust="spacingAndGlyphs" >1/</text>
<text x="945.5" y="228.2" font-size="3.7" fill="#161616" textLength="4.5" lengthAdjust="spacingAndGlyphs" >100</text>
<path d="M951.0 221.3V227.9" stroke="#111" stroke-width="0.8"/>
<text x="957.5" y="228.3" font-size="4.3" fill="#222" font-weight="bold" textLength="5.0" lengthAdjust="spacingAndGlyphs" transform="rotate(-90 957.5 228.3)" >NC</text>
<path d="M924.5 233.8H951.0" stroke="#555" stroke-width="0.6"/>
<text x="929.0" y="233.4" font-size="3.7" fill="#161616" textLength="8.0" lengthAdjust="spacingAndGlyphs" >C1410</text>
<text x="940.5" y="234.1" font-size="3.7" fill="#161616" textLength="2.5" lengthAdjust="spacingAndGlyphs" >1/</text>
<text x="945.5" y="234.1" font-size="3.7" fill="#161616" textLength="4.5" lengthAdjust="spacingAndGlyphs" >NC</text>
<path d="M924.5 237.1H951.0" stroke="#555" stroke-width="0.6"/>
<text x="929.0" y="237.4" font-size="3.7" fill="#161616" textLength="8.0" lengthAdjust="spacingAndGlyphs" >C1411</text>
<text x="940.5" y="237.4" font-size="3.7" fill="#161616" textLength="2.5" lengthAdjust="spacingAndGlyphs" >1/</text>
<text x="945.5" y="237.4" font-size="3.7" fill="#161616" textLength="4.5" lengthAdjust="spacingAndGlyphs" >100</text>
<path d="M924.5 240.4H951.0" stroke="#555" stroke-width="0.6"/>
<text x="929.0" y="240.7" font-size="3.7" fill="#161616" textLength="8.0" lengthAdjust="spacingAndGlyphs" >C1412</text>
<text x="940.5" y="240.7" font-size="3.7" fill="#161616" textLength="2.5" lengthAdjust="spacingAndGlyphs" >1/</text>
<text x="945.5" y="240.7" font-size="3.7" fill="#161616" textLength="4.5" lengthAdjust="spacingAndGlyphs" >100</text>
<path d="M951.0 233.8V240.4" stroke="#111" stroke-width="0.8"/>
<text x="957.5" y="240.8" font-size="4.3" fill="#222" font-weight="bold" textLength="5.0" lengthAdjust="spacingAndGlyphs" transform="rotate(-90 957.5 240.8)" >NC</text>
<path d="M924.5 245.2H951.0" stroke="#555" stroke-width="0.6"/>
<text x="929.0" y="244.8" font-size="3.7" fill="#161616" textLength="8.0" lengthAdjust="spacingAndGlyphs" >C1420</text>
<text x="940.5" y="245.5" font-size="3.7" fill="#161616" textLength="2.5" lengthAdjust="spacingAndGlyphs" >1/</text>
<text x="945.5" y="245.5" font-size="3.7" fill="#161616" textLength="4.5" lengthAdjust="spacingAndGlyphs" >NC</text>
<path d="M924.5 248.5H951.0" stroke="#555" stroke-width="0.6"/>
<text x="929.0" y="248.8" font-size="3.7" fill="#161616" textLength="8.0" lengthAdjust="spacingAndGlyphs" >C1421</text>
<text x="940.5" y="248.8" font-size="3.7" fill="#161616" textLength="2.5" lengthAdjust="spacingAndGlyphs" >1/</text>
<text x="945.5" y="248.8" font-size="3.7" fill="#161616" textLength="4.5" lengthAdjust="spacingAndGlyphs" >100</text>
<path d="M924.5 251.8H951.0" stroke="#555" stroke-width="0.6"/>
<text x="929.0" y="252.1" font-size="3.7" fill="#161616" textLength="8.0" lengthAdjust="spacingAndGlyphs" >C1422</text>
<text x="940.5" y="252.1" font-size="3.7" fill="#161616" textLength="2.5" lengthAdjust="spacingAndGlyphs" >1/</text>
<text x="945.5" y="252.1" font-size="3.7" fill="#161616" textLength="4.5" lengthAdjust="spacingAndGlyphs" >100</text>
<path d="M951.0 245.2V251.8" stroke="#111" stroke-width="0.8"/>
<text x="957.5" y="252.2" font-size="4.3" fill="#222" font-weight="bold" textLength="5.0" lengthAdjust="spacingAndGlyphs" transform="rotate(-90 957.5 252.2)" >NC</text>
<path d="M910.6 259.9H924.5" stroke="#6c6c6c" stroke-width="0.65"/>
<text x="911.8" y="259.7" font-size="4.3" fill="#161616" textLength="4.5" lengthAdjust="spacingAndGlyphs" >H1</text>
<text x="909.4" y="261.0" font-size="4.3" fill="#000" text-anchor="end" textLength="8.0" lengthAdjust="spacingAndGlyphs" >SQ45</text>
<path d="M910.6 262.9H924.5" stroke="#6c6c6c" stroke-width="0.65"/>
<text x="911.8" y="262.7" font-size="4.3" fill="#161616" textLength="4.5" lengthAdjust="spacingAndGlyphs" >B7</text>
<text x="909.4" y="264.0" font-size="4.3" fill="#000" text-anchor="end" textLength="8.0" lengthAdjust="spacingAndGlyphs" >1079</text>
<path d="M910.6 265.9H924.5" stroke="#6c6c6c" stroke-width="0.65"/>
<text x="911.8" y="265.7" font-size="4.3" fill="#161616" textLength="3.5" lengthAdjust="spacingAndGlyphs" >E9</text>
<text x="909.4" y="267.0" font-size="4.3" fill="#000" text-anchor="end" textLength="8.0" lengthAdjust="spacingAndGlyphs" >D184</text>
<path d="M910.6 268.8H924.5" stroke="#6c6c6c" stroke-width="0.65"/>
<text x="911.8" y="268.6" font-size="4.3" fill="#161616" textLength="3.5" lengthAdjust="spacingAndGlyphs" >F1</text>
<text x="909.4" y="269.9" font-size="4.3" fill="#000" text-anchor="end" textLength="8.0" lengthAdjust="spacingAndGlyphs" >0A23</text>
<path d="M910.6 271.8H924.5" stroke="#6c6c6c" stroke-width="0.65"/>
<text x="911.8" y="271.6" font-size="4.3" fill="#161616" textLength="4.5" lengthAdjust="spacingAndGlyphs" >F1</text>
<text x="909.4" y="272.9" font-size="4.3" fill="#000" text-anchor="end" textLength="8.0" lengthAdjust="spacingAndGlyphs" >C093</text>
<path d="M910.6 280.5H924.5" stroke="#6c6c6c" stroke-width="0.65"/>
<text x="911.8" y="280.3" font-size="4.3" fill="#161616" textLength="4.5" lengthAdjust="spacingAndGlyphs" >B7</text>
<text x="909.4" y="281.6" font-size="4.3" fill="#000" text-anchor="end" textLength="9.5" lengthAdjust="spacingAndGlyphs" >0DV69</text>
<path d="M910.6 283.4H924.5" stroke="#6c6c6c" stroke-width="0.65"/>
<text x="911.8" y="283.2" font-size="4.3" fill="#161616" textLength="4.5" lengthAdjust="spacingAndGlyphs" >E9</text>
<text x="909.4" y="284.5" font-size="4.3" fill="#000" text-anchor="end" textLength="9.5" lengthAdjust="spacingAndGlyphs" >CV074</text>
<path d="M910.6 286.3H924.5" stroke="#6c6c6c" stroke-width="0.65"/>
<text x="911.8" y="286.1" font-size="4.3" fill="#161616" textLength="4.5" lengthAdjust="spacingAndGlyphs" >B7</text>
<text x="909.4" y="287.4" font-size="4.3" fill="#000" text-anchor="end" textLength="9.5" lengthAdjust="spacingAndGlyphs" >VQS45</text>
<path d="M910.6 289.2H924.5" stroke="#6c6c6c" stroke-width="0.65"/>
<text x="911.8" y="289.0" font-size="4.3" fill="#161616" textLength="4.5" lengthAdjust="spacingAndGlyphs" >G2</text>
<text x="909.4" y="290.3" font-size="4.3" fill="#000" text-anchor="end" textLength="9.5" lengthAdjust="spacingAndGlyphs" >0DD98</text>
<text x="712.8" y="252.0" font-size="4.3" fill="#111" textLength="8.5" lengthAdjust="spacingAndGlyphs" >(1,2,7)</text>
<text x="730.5" y="253.3" font-size="4.3" fill="#1a1a9a" font-weight="bold" textLength="11.5" lengthAdjust="spacingAndGlyphs" >nRESET</text>
<rect x="744.4" y="250.5" width="5.2" height="3.6" fill="#fff" stroke="#8a8a8a" stroke-width="0.6" rx="1"/>
<text x="733.5" y="258.9" font-size="4.3" fill="#1a1a9a" font-weight="bold" textLength="8.5" lengthAdjust="spacingAndGlyphs" >RESET</text>
<rect x="744.4" y="256.2" width="5.2" height="3.6" fill="#fff" stroke="#8a8a8a" stroke-width="0.6" rx="1"/>
<path d="M749.6 252.3H782.0" stroke="#6c6c6c" stroke-width="0.65"/>
<path d="M782.0 252.3V283.5" stroke="#6c6c6c" stroke-width="0.65"/>
<text x="757.0" y="252.0" font-size="3.7" fill="#161616" textLength="4.0" lengthAdjust="spacingAndGlyphs" >NC</text>
<text x="766.0" y="252.0" font-size="3.7" fill="#161616" textLength="9.0" lengthAdjust="spacingAndGlyphs" >R1405</text>
<path d="M761.5 252.8 l1 -1 l1 1.6 l1 -1.6 l1 1" stroke="#6c6c6c" stroke-width="0.4" fill="none"/>
<path d="M749.6 257.6H782.0" stroke="#777" stroke-width="0.5"/>
<rect x="748.5" y="259.0" width="33.5" height="16.0" fill="#ffffee" stroke="#f0f0a8" stroke-width="0.5" />
<text x="750.0" y="263.5" font-size="3.7" fill="#111" textLength="6.5" lengthAdjust="spacingAndGlyphs" >R1401</text>
<text x="757.0" y="263.5" font-size="3.7" fill="#161616" textLength="3.5" lengthAdjust="spacingAndGlyphs" >NC</text>
<text x="763.5" y="263.5" font-size="3.7" fill="#161616" textLength="3.0" lengthAdjust="spacingAndGlyphs" >1/</text>
<text x="769.0" y="263.5" font-size="3.7" fill="#111" textLength="7.5" lengthAdjust="spacingAndGlyphs" >0201</text>
<path d="M753.5 264.1H782.0" stroke="#777" stroke-width="0.35"/>
<text x="750.0" y="266.5" font-size="3.7" fill="#111" textLength="6.5" lengthAdjust="spacingAndGlyphs" >R1401</text>
<text x="757.0" y="266.5" font-size="3.7" fill="#161616" textLength="3.5" lengthAdjust="spacingAndGlyphs" >NC</text>
<text x="763.5" y="266.5" font-size="3.7" fill="#161616" textLength="3.0" lengthAdjust="spacingAndGlyphs" >1/</text>
<text x="769.0" y="266.5" font-size="3.7" fill="#111" textLength="7.5" lengthAdjust="spacingAndGlyphs" >0201</text>
<path d="M753.5 267.1H782.0" stroke="#777" stroke-width="0.35"/>
<text x="750.0" y="269.3" font-size="3.7" fill="#111" textLength="6.5" lengthAdjust="spacingAndGlyphs" >R1401</text>
<text x="757.0" y="269.3" font-size="3.7" fill="#161616" textLength="3.5" lengthAdjust="spacingAndGlyphs" >NC</text>
<text x="763.5" y="269.3" font-size="3.7" fill="#161616" textLength="3.0" lengthAdjust="spacingAndGlyphs" >1/</text>
<text x="769.0" y="269.3" font-size="3.7" fill="#111" textLength="7.5" lengthAdjust="spacingAndGlyphs" >0201</text>
<path d="M753.5 269.9H782.0" stroke="#777" stroke-width="0.35"/>
<path d="M748.5 259 V274 H753 V262 H749" stroke="#6c6c6c" stroke-width="0.5" fill="none"/>
<path d="M782.0 260.4H795.6" stroke="#6c6c6c" stroke-width="0.65"/>
<text x="794.6" y="260.2" font-size="4.3" fill="#161616" text-anchor="end" textLength="4.5" lengthAdjust="spacingAndGlyphs" >E9</text>
<text x="797.0" y="261.5" font-size="4.3" fill="#000" textLength="8.0" lengthAdjust="spacingAndGlyphs" >A168</text>
<path d="M782.0 263.3H795.6" stroke="#6c6c6c" stroke-width="0.65"/>
<text x="794.6" y="263.1" font-size="4.3" fill="#161616" text-anchor="end" textLength="6.0" lengthAdjust="spacingAndGlyphs" >F11</text>
<text x="797.0" y="264.4" font-size="4.3" fill="#000" textLength="8.0" lengthAdjust="spacingAndGlyphs" >AQ43</text>
<path d="M782.0 266.2H795.6" stroke="#6c6c6c" stroke-width="0.65"/>
<text x="794.6" y="266.0" font-size="4.3" fill="#161616" text-anchor="end" textLength="4.5" lengthAdjust="spacingAndGlyphs" >C12</text>
<text x="797.0" y="267.3" font-size="4.3" fill="#000" textLength="8.0" lengthAdjust="spacingAndGlyphs" >QQ29</text>
<path d="M782.0 269.1H795.6" stroke="#6c6c6c" stroke-width="0.65"/>
<text x="794.6" y="268.9" font-size="4.3" fill="#161616" text-anchor="end" textLength="5.5" lengthAdjust="spacingAndGlyphs" >C12</text>
<text x="797.0" y="270.2" font-size="4.3" fill="#000" textLength="8.0" lengthAdjust="spacingAndGlyphs" >SV48</text>
<path d="M782.0 272.0H795.6" stroke="#6c6c6c" stroke-width="0.65"/>
<text x="794.6" y="271.8" font-size="4.3" fill="#161616" text-anchor="end" textLength="6.0" lengthAdjust="spacingAndGlyphs" >F11</text>
<text x="797.0" y="273.1" font-size="4.3" fill="#000" textLength="8.0" lengthAdjust="spacingAndGlyphs" >CD_2</text>
<path d="M782.0 274.9H795.6" stroke="#6c6c6c" stroke-width="0.65"/>
<text x="794.6" y="274.7" font-size="4.3" fill="#161616" text-anchor="end" textLength="6.0" lengthAdjust="spacingAndGlyphs" >H10</text>
<text x="797.0" y="276.0" font-size="4.3" fill="#000" textLength="8.0" lengthAdjust="spacingAndGlyphs" >1A88</text>
<path d="M782.0 277.8H795.6" stroke="#6c6c6c" stroke-width="0.65"/>
<text x="794.6" y="277.6" font-size="4.3" fill="#161616" text-anchor="end" textLength="4.5" lengthAdjust="spacingAndGlyphs" >G2</text>
<text x="797.0" y="278.9" font-size="4.3" fill="#000" textLength="8.0" lengthAdjust="spacingAndGlyphs" >0A25</text>
<path d="M782.0 280.7H795.6" stroke="#6c6c6c" stroke-width="0.65"/>
<text x="794.6" y="280.5" font-size="4.3" fill="#161616" text-anchor="end" textLength="4.5" lengthAdjust="spacingAndGlyphs" >B7</text>
<text x="797.0" y="281.8" font-size="4.3" fill="#000" textLength="8.0" lengthAdjust="spacingAndGlyphs" >0D37</text>
<text x="712.8" y="294.3" font-size="4.3" fill="#111" textLength="3.0" lengthAdjust="spacingAndGlyphs" >(3)</text>
<text x="720.0" y="296.2" font-size="4.3" fill="#1a1a9a" font-weight="bold" textLength="22.0" lengthAdjust="spacingAndGlyphs" >VDD_EMMC_1V8</text>
<path d="M720.0 296.8H742.0" stroke="#5a5ac8" stroke-width="0.35"/>
<rect x="744.4" y="293.3" width="5.2" height="3.6" fill="#fff" stroke="#8a8a8a" stroke-width="0.6" rx="1"/>
<path d="M749.6 295.1H782.0" stroke="#6c6c6c" stroke-width="0.65"/>
<path d="M782.0 295.1V309.7" stroke="#6c6c6c" stroke-width="0.65"/>
<rect x="748.5" y="296.5" width="33.5" height="15.5" fill="#ffffee" stroke="#f0f0a8" stroke-width="0.5" />
<text x="750.0" y="299.8" font-size="3.7" fill="#111" textLength="6.5" lengthAdjust="spacingAndGlyphs" >R1401</text>
<text x="757.0" y="299.8" font-size="3.7" fill="#161616" textLength="3.5" lengthAdjust="spacingAndGlyphs" >NC</text>
<text x="763.5" y="299.8" font-size="3.7" fill="#161616" textLength="3.0" lengthAdjust="spacingAndGlyphs" >1/</text>
<text x="769.0" y="299.8" font-size="3.7" fill="#111" textLength="7.5" lengthAdjust="spacingAndGlyphs" >0201</text>
<path d="M753.5 300.4H782.0" stroke="#777" stroke-width="0.35"/>
<text x="750.0" y="302.8" font-size="3.7" fill="#111" textLength="6.5" lengthAdjust="spacingAndGlyphs" >R1401</text>
<text x="757.0" y="302.8" font-size="3.7" fill="#161616" textLength="3.5" lengthAdjust="spacingAndGlyphs" >NC</text>
<text x="763.5" y="302.8" font-size="3.7" fill="#161616" textLength="3.0" lengthAdjust="spacingAndGlyphs" >1/</text>
<text x="769.0" y="302.8" font-size="3.7" fill="#111" textLength="7.5" lengthAdjust="spacingAndGlyphs" >0201</text>
<path d="M753.5 303.4H782.0" stroke="#777" stroke-width="0.35"/>
<text x="750.0" y="305.6" font-size="3.7" fill="#111" textLength="6.5" lengthAdjust="spacingAndGlyphs" >R1401</text>
<text x="757.0" y="305.6" font-size="3.7" fill="#161616" textLength="3.5" lengthAdjust="spacingAndGlyphs" >NC</text>
<text x="763.5" y="305.6" font-size="3.7" fill="#161616" textLength="3.0" lengthAdjust="spacingAndGlyphs" >1/</text>
<text x="769.0" y="305.6" font-size="3.7" fill="#111" textLength="7.5" lengthAdjust="spacingAndGlyphs" >0201</text>
<path d="M753.5 306.2H782.0" stroke="#777" stroke-width="0.35"/>
<path d="M748.5 309 H753 V300" stroke="#6c6c6c" stroke-width="0.5" fill="none"/>
<path d="M782.0 298.0H795.6" stroke="#6c6c6c" stroke-width="0.65"/>
<text x="794.6" y="297.8" font-size="4.3" fill="#161616" text-anchor="end" textLength="4.5" lengthAdjust="spacingAndGlyphs" >A3</text>
<text x="797.0" y="299.1" font-size="4.3" fill="#000" textLength="9.0" lengthAdjust="spacingAndGlyphs" >VD_3</text>
<path d="M782.0 300.9H795.6" stroke="#6c6c6c" stroke-width="0.65"/>
<text x="794.6" y="300.7" font-size="4.3" fill="#161616" text-anchor="end" textLength="6.0" lengthAdjust="spacingAndGlyphs" >F11</text>
<text x="797.0" y="302.0" font-size="4.3" fill="#000" textLength="9.0" lengthAdjust="spacingAndGlyphs" >VD58</text>
<path d="M782.0 303.8H795.6" stroke="#6c6c6c" stroke-width="0.65"/>
<text x="794.6" y="303.6" font-size="4.3" fill="#161616" text-anchor="end" textLength="6.0" lengthAdjust="spacingAndGlyphs" >C12</text>
<text x="797.0" y="304.9" font-size="4.3" fill="#000" textLength="9.0" lengthAdjust="spacingAndGlyphs" >SC79</text>
<path d="M782.0 306.8H795.6" stroke="#6c6c6c" stroke-width="0.65"/>
<text x="794.6" y="306.6" font-size="4.3" fill="#161616" text-anchor="end" textLength="4.5" lengthAdjust="spacingAndGlyphs" >B7</text>
<text x="797.0" y="307.9" font-size="4.3" fill="#000" textLength="9.0" lengthAdjust="spacingAndGlyphs" >0099</text>
<path d="M782.0 309.7H795.6" stroke="#6c6c6c" stroke-width="0.65"/>
<text x="794.6" y="309.5" font-size="4.3" fill="#161616" text-anchor="end" textLength="4.5" lengthAdjust="spacingAndGlyphs" >E9</text>
<text x="797.0" y="310.8" font-size="4.3" fill="#000" textLength="9.0" lengthAdjust="spacingAndGlyphs" >DD76</text>
<text x="712.8" y="314.6" font-size="4.3" fill="#111" textLength="3.0" lengthAdjust="spacingAndGlyphs" >(3)</text>
<text x="725.0" y="316.5" font-size="4.3" fill="#1a1a9a" font-weight="bold" textLength="17.0" lengthAdjust="spacingAndGlyphs" >VDD_EMMC</text>
<path d="M725.0 317.1H742.0" stroke="#5a5ac8" stroke-width="0.35"/>
<rect x="744.4" y="313.7" width="5.2" height="3.6" fill="#fff" stroke="#8a8a8a" stroke-width="0.6" rx="1"/>
<path d="M749.6 315.5H782.0" stroke="#6c6c6c" stroke-width="0.65"/>
<path d="M782.0 315.5V329.9" stroke="#6c6c6c" stroke-width="0.65"/>
<rect x="748.5" y="317.0" width="33.5" height="16.5" fill="#ffffee" stroke="#f0f0a8" stroke-width="0.5" />
<text x="750.0" y="320.2" font-size="3.7" fill="#111" textLength="6.5" lengthAdjust="spacingAndGlyphs" >R1401</text>
<text x="757.0" y="320.2" font-size="3.7" fill="#161616" textLength="3.5" lengthAdjust="spacingAndGlyphs" >NC</text>
<text x="763.5" y="320.2" font-size="3.7" fill="#161616" textLength="3.0" lengthAdjust="spacingAndGlyphs" >1/</text>
<text x="769.0" y="320.2" font-size="3.7" fill="#111" textLength="7.5" lengthAdjust="spacingAndGlyphs" >0201</text>
<path d="M753.5 320.8H782.0" stroke="#777" stroke-width="0.35"/>
<text x="750.0" y="323.2" font-size="3.7" fill="#111" textLength="6.5" lengthAdjust="spacingAndGlyphs" >R1401</text>
<text x="757.0" y="323.2" font-size="3.7" fill="#161616" textLength="3.5" lengthAdjust="spacingAndGlyphs" >NC</text>
<text x="763.5" y="323.2" font-size="3.7" fill="#161616" textLength="3.0" lengthAdjust="spacingAndGlyphs" >1/</text>
<text x="769.0" y="323.2" font-size="3.7" fill="#111" textLength="7.5" lengthAdjust="spacingAndGlyphs" >0201</text>
<path d="M753.5 323.8H782.0" stroke="#777" stroke-width="0.35"/>
<text x="750.0" y="326.0" font-size="3.7" fill="#111" textLength="6.5" lengthAdjust="spacingAndGlyphs" >R1401</text>
<text x="757.0" y="326.0" font-size="3.7" fill="#161616" textLength="3.5" lengthAdjust="spacingAndGlyphs" >NC</text>
<text x="763.5" y="326.0" font-size="3.7" fill="#161616" textLength="3.0" lengthAdjust="spacingAndGlyphs" >1/</text>
<text x="769.0" y="326.0" font-size="3.7" fill="#111" textLength="7.5" lengthAdjust="spacingAndGlyphs" >0201</text>
<path d="M753.5 326.6H782.0" stroke="#777" stroke-width="0.35"/>
<path d="M748.5 330 H753 V320" stroke="#6c6c6c" stroke-width="0.5" fill="none"/>
<path d="M782.0 318.4H795.6" stroke="#6c6c6c" stroke-width="0.65"/>
<text x="794.6" y="318.2" font-size="4.3" fill="#161616" text-anchor="end" textLength="6.0" lengthAdjust="spacingAndGlyphs" >H10</text>
<text x="797.0" y="319.5" font-size="4.3" fill="#000" textLength="10.5" lengthAdjust="spacingAndGlyphs" >D1V5_</text>
<path d="M782.0 321.3H795.6" stroke="#6c6c6c" stroke-width="0.65"/>
<text x="794.6" y="321.1" font-size="4.3" fill="#161616" text-anchor="end" textLength="4.5" lengthAdjust="spacingAndGlyphs" >F11</text>
<text x="797.0" y="322.4" font-size="4.3" fill="#000" textLength="10.5" lengthAdjust="spacingAndGlyphs" >1V163</text>
<path d="M782.0 324.1H795.6" stroke="#6c6c6c" stroke-width="0.65"/>
<text x="794.6" y="323.9" font-size="4.3" fill="#161616" text-anchor="end" textLength="6.0" lengthAdjust="spacingAndGlyphs" >E9</text>
<text x="797.0" y="325.2" font-size="4.3" fill="#000" textLength="10.5" lengthAdjust="spacingAndGlyphs" >CDC5_</text>
<path d="M782.0 327.0H795.6" stroke="#6c6c6c" stroke-width="0.65"/>
<text x="794.6" y="326.8" font-size="4.3" fill="#161616" text-anchor="end" textLength="6.0" lengthAdjust="spacingAndGlyphs" >F11</text>
<text x="797.0" y="328.1" font-size="4.3" fill="#000" textLength="10.5" lengthAdjust="spacingAndGlyphs" >QQQ85</text>
<path d="M782.0 329.9H795.6" stroke="#6c6c6c" stroke-width="0.65"/>
<text x="794.6" y="329.7" font-size="4.3" fill="#161616" text-anchor="end" textLength="6.0" lengthAdjust="spacingAndGlyphs" >D4</text>
<text x="797.0" y="331.0" font-size="4.3" fill="#000" textLength="10.5" lengthAdjust="spacingAndGlyphs" >0CV26</text>
<rect x="748.5" y="336.5" width="33.5" height="12.5" fill="#ffffee" stroke="#f0f0a8" stroke-width="0.5" />
<text x="750.0" y="340.8" font-size="3.7" fill="#111" textLength="6.5" lengthAdjust="spacingAndGlyphs" >R1401</text>
<text x="757.0" y="340.8" font-size="3.7" fill="#161616" textLength="3.5" lengthAdjust="spacingAndGlyphs" >NC</text>
<text x="763.5" y="340.8" font-size="3.7" fill="#161616" textLength="3.0" lengthAdjust="spacingAndGlyphs" >1/</text>
<text x="769.0" y="340.8" font-size="3.7" fill="#111" textLength="7.5" lengthAdjust="spacingAndGlyphs" >0201</text>
<path d="M753.5 341.4H782.0" stroke="#777" stroke-width="0.35"/>
<text x="750.0" y="343.8" font-size="3.7" fill="#111" textLength="6.5" lengthAdjust="spacingAndGlyphs" >R1401</text>
<text x="757.0" y="343.8" font-size="3.7" fill="#161616" textLength="3.5" lengthAdjust="spacingAndGlyphs" >NC</text>
<text x="763.5" y="343.8" font-size="3.7" fill="#161616" textLength="3.0" lengthAdjust="spacingAndGlyphs" >1/</text>
<text x="769.0" y="343.8" font-size="3.7" fill="#111" textLength="7.5" lengthAdjust="spacingAndGlyphs" >0201</text>
<path d="M753.5 344.4H782.0" stroke="#777" stroke-width="0.35"/>
<path d="M748.5 346 H753 V341" stroke="#6c6c6c" stroke-width="0.5" fill="none"/>
<path d="M782 343.5 V338.4 H795.6" stroke="#6c6c6c" stroke-width="0.7" fill="none"/>
<text x="794.6" y="338.2" font-size="4.3" fill="#161616" text-anchor="end" textLength="5.5" lengthAdjust="spacingAndGlyphs" >H10</text>
<text x="797.0" y="339.5" font-size="4.3" fill="#000" textLength="7.0" lengthAdjust="spacingAndGlyphs" >Q79</text>
<path d="M790.0 349.6H795.6" stroke="#6c6c6c" stroke-width="0.65"/>
<text x="794.6" y="349.4" font-size="4.3" fill="#161616" text-anchor="end" textLength="5.5" lengthAdjust="spacingAndGlyphs" >F11</text>
<text x="797.0" y="350.7" font-size="4.3" fill="#000" textLength="9.0" lengthAdjust="spacingAndGlyphs" >DQ35</text>
<text x="712.8" y="354.7" font-size="4.3" fill="#111" textLength="3.0" lengthAdjust="spacingAndGlyphs" >(4)</text>
<text x="725.0" y="356.3" font-size="4.3" fill="#1a1a9a" font-weight="bold" textLength="17.0" lengthAdjust="spacingAndGlyphs" >EMMC_CLK</text>
<path d="M725.0 356.8H742.0" stroke="#5a5ac8" stroke-width="0.35"/>
<rect x="744.4" y="353.7" width="5.2" height="3.6" fill="#fff" stroke="#8a8a8a" stroke-width="0.6" rx="1"/>
<path d="M749.6 355.5H795.6" stroke="#6c6c6c" stroke-width="0.65"/>
<text x="794.6" y="355.3" font-size="4.3" fill="#161616" text-anchor="end" textLength="5.5" lengthAdjust="spacingAndGlyphs" >D4</text>
<text x="797.0" y="356.6" font-size="4.3" fill="#000" textLength="7.0" lengthAdjust="spacingAndGlyphs" >Q92</text>
<text x="712.8" y="360.5" font-size="4.3" fill="#111" textLength="3.0" lengthAdjust="spacingAndGlyphs" >(4)</text>
<text x="725.0" y="362.1" font-size="4.3" fill="#1a1a9a" font-weight="bold" textLength="17.0" lengthAdjust="spacingAndGlyphs" >EMMC_CMD</text>
<path d="M725.0 362.6H742.0" stroke="#5a5ac8" stroke-width="0.35"/>
<rect x="744.4" y="359.5" width="5.2" height="3.6" fill="#fff" stroke="#8a8a8a" stroke-width="0.6" rx="1"/>
<path d="M749.6 361.3H795.6" stroke="#6c6c6c" stroke-width="0.65"/>
<text x="794.6" y="361.1" font-size="4.3" fill="#161616" text-anchor="end" textLength="6.0" lengthAdjust="spacingAndGlyphs" >F11</text>
<text x="797.0" y="362.4" font-size="4.3" fill="#000" textLength="7.0" lengthAdjust="spacingAndGlyphs" >D38</text>
<text x="712.8" y="366.0" font-size="4.3" fill="#111" textLength="3.0" lengthAdjust="spacingAndGlyphs" >(4)</text>
<text x="725.0" y="367.6" font-size="4.3" fill="#1a1a9a" font-weight="bold" textLength="17.0" lengthAdjust="spacingAndGlyphs" >EMMC_RST</text>
<path d="M725.0 368.1H742.0" stroke="#5a5ac8" stroke-width="0.35"/>
<rect x="744.4" y="365.0" width="5.2" height="3.6" fill="#fff" stroke="#8a8a8a" stroke-width="0.6" rx="1"/>
<path d="M749.6 366.8H795.6" stroke="#6c6c6c" stroke-width="0.65"/>
<text x="794.6" y="366.6" font-size="4.3" fill="#161616" text-anchor="end" textLength="5.5" lengthAdjust="spacingAndGlyphs" >D4</text>
<text x="797.0" y="367.9" font-size="4.3" fill="#000" textLength="10.5" lengthAdjust="spacingAndGlyphs" >DAC38</text>
<text x="748.5" y="371.3" font-size="4.3" fill="#1a1a9a" textLength="19.5" lengthAdjust="spacingAndGlyphs" >EMMC_DATA[7:0]</text>
<path d="M748.5 372.6 H765.5 L766.8 374 V398" stroke="#14142e" stroke-width="1.1" fill="none"/>
<text x="749.0" y="375.5" font-size="4.3" fill="#161616" textLength="3.0" lengthAdjust="spacingAndGlyphs" >(4)</text>
<text x="767.8" y="376.9" font-size="4.3" fill="#1a1a9a" font-weight="bold" textLength="14.0" lengthAdjust="spacingAndGlyphs" >EMMC_D0</text>
<path d="M767.5 377.3H782.0" stroke="#2828b0" stroke-width="0.6"/>
<path d="M782.0 376.0H795.6" stroke="#6c6c6c" stroke-width="0.65"/>
<text x="794.6" y="375.8" font-size="4.3" fill="#161616" text-anchor="end" textLength="5.5" lengthAdjust="spacingAndGlyphs" >H10</text>
<text x="797.0" y="377.1" font-size="4.3" fill="#000" textLength="8.5" lengthAdjust="spacingAndGlyphs" >DD44</text>
<text x="767.8" y="379.8" font-size="4.3" fill="#1a1a9a" font-weight="bold" textLength="14.0" lengthAdjust="spacingAndGlyphs" >EMMC_D1</text>
<path d="M767.5 380.2H782.0" stroke="#2828b0" stroke-width="0.6"/>
<path d="M782.0 378.9H795.6" stroke="#6c6c6c" stroke-width="0.65"/>
<text x="794.6" y="378.7" font-size="4.3" fill="#161616" text-anchor="end" textLength="4.5" lengthAdjust="spacingAndGlyphs" >A3</text>
<text x="797.0" y="380.0" font-size="4.3" fill="#000" textLength="8.5" lengthAdjust="spacingAndGlyphs" >0D97</text>
<text x="767.8" y="382.7" font-size="4.3" fill="#1a1a9a" font-weight="bold" textLength="14.0" lengthAdjust="spacingAndGlyphs" >EMMC_D2</text>
<path d="M767.5 383.1H782.0" stroke="#2828b0" stroke-width="0.6"/>
<path d="M782.0 381.8H795.6" stroke="#6c6c6c" stroke-width="0.65"/>
<text x="794.6" y="381.6" font-size="4.3" fill="#161616" text-anchor="end" textLength="6.0" lengthAdjust="spacingAndGlyphs" >C12</text>
<text x="797.0" y="382.9" font-size="4.3" fill="#000" textLength="8.5" lengthAdjust="spacingAndGlyphs" >1D22</text>
<text x="767.8" y="385.6" font-size="4.3" fill="#1a1a9a" font-weight="bold" textLength="14.0" lengthAdjust="spacingAndGlyphs" >EMMC_D3</text>
<path d="M767.5 386.0H782.0" stroke="#2828b0" stroke-width="0.6"/>
<path d="M782.0 384.7H795.6" stroke="#6c6c6c" stroke-width="0.65"/>
<text x="794.6" y="384.5" font-size="4.3" fill="#161616" text-anchor="end" textLength="6.0" lengthAdjust="spacingAndGlyphs" >B7</text>
<text x="797.0" y="385.8" font-size="4.3" fill="#000" textLength="8.5" lengthAdjust="spacingAndGlyphs" >DA55</text>
<text x="767.8" y="388.5" font-size="4.3" fill="#1a1a9a" font-weight="bold" textLength="14.0" lengthAdjust="spacingAndGlyphs" >EMMC_D4</text>
<path d="M767.5 388.9H782.0" stroke="#2828b0" stroke-width="0.6"/>
<path d="M782.0 387.6H795.6" stroke="#6c6c6c" stroke-width="0.65"/>
<text x="794.6" y="387.4" font-size="4.3" fill="#161616" text-anchor="end" textLength="5.5" lengthAdjust="spacingAndGlyphs" >A3</text>
<text x="797.0" y="388.7" font-size="4.3" fill="#000" textLength="8.5" lengthAdjust="spacingAndGlyphs" >QS_5</text>
<text x="767.8" y="391.4" font-size="4.3" fill="#1a1a9a" font-weight="bold" textLength="14.0" lengthAdjust="spacingAndGlyphs" >EMMC_D5</text>
<path d="M767.5 391.8H782.0" stroke="#2828b0" stroke-width="0.6"/>
<path d="M782.0 390.5H795.6" stroke="#6c6c6c" stroke-width="0.65"/>
<text x="794.6" y="390.3" font-size="4.3" fill="#161616" text-anchor="end" textLength="5.5" lengthAdjust="spacingAndGlyphs" >F11</text>
<text x="797.0" y="391.6" font-size="4.3" fill="#000" textLength="8.5" lengthAdjust="spacingAndGlyphs" >1A42</text>
<text x="767.8" y="394.3" font-size="4.3" fill="#1a1a9a" font-weight="bold" textLength="14.0" lengthAdjust="spacingAndGlyphs" >EMMC_D6</text>
<path d="M767.5 394.7H782.0" stroke="#2828b0" stroke-width="0.6"/>
<path d="M782.0 393.4H795.6" stroke="#6c6c6c" stroke-width="0.65"/>
<text x="794.6" y="393.2" font-size="4.3" fill="#161616" text-anchor="end" textLength="5.5" lengthAdjust="spacingAndGlyphs" >F11</text>
<text x="797.0" y="394.5" font-size="4.3" fill="#000" textLength="8.5" lengthAdjust="spacingAndGlyphs" >1A_4</text>
<text x="767.8" y="397.2" font-size="4.3" fill="#1a1a9a" font-weight="bold" textLength="14.0" lengthAdjust="spacingAndGlyphs" >EMMC_D7</text>
<path d="M767.5 397.6H782.0" stroke="#2828b0" stroke-width="0.6"/>
<path d="M782.0 396.3H795.6" stroke="#6c6c6c" stroke-width="0.65"/>
<text x="794.6" y="396.1" font-size="4.3" fill="#161616" text-anchor="end" textLength="6.0" lengthAdjust="spacingAndGlyphs" >C12</text>
<text x="797.0" y="397.4" font-size="4.3" fill="#000" textLength="8.5" lengthAdjust="spacingAndGlyphs" >1V94</text>
<path d="M790.5 406.0H795.6" stroke="#6c6c6c" stroke-width="0.65"/>
<text x="794.6" y="405.8" font-size="4.3" fill="#161616" text-anchor="end" textLength="4.5" lengthAdjust="spacingAndGlyphs" >A3</text>
<text x="797.0" y="407.1" font-size="4.3" fill="#000" textLength="5.5" lengthAdjust="spacingAndGlyphs" >D49</text>
<path d="M790.5 409.1H795.6" stroke="#6c6c6c" stroke-width="0.65"/>
<text x="794.6" y="408.9" font-size="4.3" fill="#161616" text-anchor="end" textLength="6.0" lengthAdjust="spacingAndGlyphs" >B7</text>
<text x="797.0" y="410.2" font-size="4.3" fill="#000" textLength="5.5" lengthAdjust="spacingAndGlyphs" >V7_</text>
<path d="M790.5 412.1H795.6" stroke="#6c6c6c" stroke-width="0.65"/>
<text x="794.6" y="411.9" font-size="4.3" fill="#161616" text-anchor="end" textLength="4.5" lengthAdjust="spacingAndGlyphs" >H10</text>
<text x="797.0" y="413.2" font-size="4.3" fill="#000" textLength="5.5" lengthAdjust="spacingAndGlyphs" >125</text>
<path d="M790.5 415.2H795.6" stroke="#6c6c6c" stroke-width="0.65"/>
<text x="794.6" y="415.0" font-size="4.3" fill="#161616" text-anchor="end" textLength="5.5" lengthAdjust="spacingAndGlyphs" >D4</text>
<text x="797.0" y="416.3" font-size="4.3" fill="#000" textLength="5.5" lengthAdjust="spacingAndGlyphs" >V3_</text>
<path d="M790.5 418.3H795.6" stroke="#6c6c6c" stroke-width="0.65"/>
<text x="794.6" y="418.1" font-size="4.3" fill="#161616" text-anchor="end" textLength="6.0" lengthAdjust="spacingAndGlyphs" >H10</text>
<text x="797.0" y="419.4" font-size="4.3" fill="#000" textLength="5.5" lengthAdjust="spacingAndGlyphs" >V39</text>
<path d="M790.5 421.4H795.6" stroke="#6c6c6c" stroke-width="0.65"/>
<text x="794.6" y="421.2" font-size="4.3" fill="#161616" text-anchor="end" textLength="6.0" lengthAdjust="spacingAndGlyphs" >F11</text>
<text x="797.0" y="422.5" font-size="4.3" fill="#000" textLength="5.5" lengthAdjust="spacingAndGlyphs" >1_5</text>
<path d="M790.5 424.4H795.6" stroke="#6c6c6c" stroke-width="0.65"/>
<text x="794.6" y="424.2" font-size="4.3" fill="#161616" text-anchor="end" textLength="5.5" lengthAdjust="spacingAndGlyphs" >E9</text>
<text x="797.0" y="425.5" font-size="4.3" fill="#000" textLength="5.5" lengthAdjust="spacingAndGlyphs" >1_9</text>
<path d="M790.5 427.5H795.6" stroke="#6c6c6c" stroke-width="0.65"/>
<text x="794.6" y="427.3" font-size="4.3" fill="#161616" text-anchor="end" textLength="6.0" lengthAdjust="spacingAndGlyphs" >D4</text>
<text x="797.0" y="428.6" font-size="4.3" fill="#000" textLength="5.5" lengthAdjust="spacingAndGlyphs" >16_</text>
<path d="M790.5 438.0H795.6" stroke="#6c6c6c" stroke-width="0.65"/>
<text x="794.6" y="437.8" font-size="4.3" fill="#161616" text-anchor="end" textLength="5.5" lengthAdjust="spacingAndGlyphs" >D4</text>
<text x="797.0" y="439.1" font-size="4.3" fill="#000" textLength="5.0" lengthAdjust="spacingAndGlyphs" >48</text>
<path d="M790.5 440.9H795.6" stroke="#6c6c6c" stroke-width="0.65"/>
<text x="794.6" y="440.7" font-size="4.3" fill="#161616" text-anchor="end" textLength="5.5" lengthAdjust="spacingAndGlyphs" >B7</text>
<text x="797.0" y="442.0" font-size="4.3" fill="#000" textLength="5.0" lengthAdjust="spacingAndGlyphs" >97</text>
<path d="M790.5 443.8H795.6" stroke="#6c6c6c" stroke-width="0.65"/>
<text x="794.6" y="443.6" font-size="4.3" fill="#161616" text-anchor="end" textLength="6.0" lengthAdjust="spacingAndGlyphs" >B7</text>
<text x="797.0" y="444.9" font-size="4.3" fill="#000" textLength="5.0" lengthAdjust="spacingAndGlyphs" >58</text>
<path d="M790.5 446.6H795.6" stroke="#6c6c6c" stroke-width="0.65"/>
<text x="794.6" y="446.4" font-size="4.3" fill="#161616" text-anchor="end" textLength="4.5" lengthAdjust="spacingAndGlyphs" >B7</text>
<text x="797.0" y="447.7" font-size="4.3" fill="#000" textLength="5.0" lengthAdjust="spacingAndGlyphs" >63</text>
<path d="M790.5 449.5H795.6" stroke="#6c6c6c" stroke-width="0.65"/>
<text x="794.6" y="449.3" font-size="4.3" fill="#161616" text-anchor="end" textLength="6.0" lengthAdjust="spacingAndGlyphs" >C12</text>
<text x="797.0" y="450.6" font-size="4.3" fill="#000" textLength="5.0" lengthAdjust="spacingAndGlyphs" >74</text>
<path d="M790.5 452.4H795.6" stroke="#6c6c6c" stroke-width="0.65"/>
<text x="794.6" y="452.2" font-size="4.3" fill="#161616" text-anchor="end" textLength="4.5" lengthAdjust="spacingAndGlyphs" >E9</text>
<text x="797.0" y="453.5" font-size="4.3" fill="#000" textLength="5.0" lengthAdjust="spacingAndGlyphs" >95</text>
<path d="M790.5 455.3H795.6" stroke="#6c6c6c" stroke-width="0.65"/>
<text x="794.6" y="455.1" font-size="4.3" fill="#161616" text-anchor="end" textLength="5.5" lengthAdjust="spacingAndGlyphs" >B7</text>
<text x="797.0" y="456.4" font-size="4.3" fill="#000" textLength="5.0" lengthAdjust="spacingAndGlyphs" >94</text>
<path d="M790.5 458.2H795.6" stroke="#6c6c6c" stroke-width="0.65"/>
<text x="794.6" y="458.0" font-size="4.3" fill="#161616" text-anchor="end" textLength="4.5" lengthAdjust="spacingAndGlyphs" >D4</text>
<text x="797.0" y="459.3" font-size="4.3" fill="#000" textLength="5.0" lengthAdjust="spacingAndGlyphs" >8_</text>
<path d="M790.5 461.0H795.6" stroke="#6c6c6c" stroke-width="0.65"/>
<text x="794.6" y="460.8" font-size="4.3" fill="#161616" text-anchor="end" textLength="5.5" lengthAdjust="spacingAndGlyphs" >G2</text>
<text x="797.0" y="462.1" font-size="4.3" fill="#000" textLength="5.0" lengthAdjust="spacingAndGlyphs" >85</text>
<path d="M781.2 473.0V608.0" stroke="#6c6c6c" stroke-width="0.65"/>
<path d="M781.2 473.0H795.6" stroke="#6c6c6c" stroke-width="0.65"/>
<text x="797.0" y="474.1" font-size="4.3" fill="#000" textLength="6.5" lengthAdjust="spacingAndGlyphs" >C73</text>
<path d="M781.2 475.9H795.6" stroke="#6c6c6c" stroke-width="0.65"/>
<text x="794.6" y="475.7" font-size="4.3" fill="#161616" text-anchor="end" textLength="4.5" lengthAdjust="spacingAndGlyphs" >F11</text>
<text x="797.0" y="477.0" font-size="4.3" fill="#000" textLength="6.5" lengthAdjust="spacingAndGlyphs" >C_9</text>
<path d="M781.2 478.8H795.6" stroke="#6c6c6c" stroke-width="0.65"/>
<text x="794.6" y="478.6" font-size="4.3" fill="#161616" text-anchor="end" textLength="6.0" lengthAdjust="spacingAndGlyphs" >H10</text>
<text x="797.0" y="479.9" font-size="4.3" fill="#000" textLength="6.5" lengthAdjust="spacingAndGlyphs" >V87</text>
<path d="M781.2 481.7H795.6" stroke="#6c6c6c" stroke-width="0.65"/>
<text x="794.6" y="481.5" font-size="4.3" fill="#161616" text-anchor="end" textLength="6.0" lengthAdjust="spacingAndGlyphs" >E9</text>
<text x="797.0" y="482.8" font-size="4.3" fill="#000" textLength="6.5" lengthAdjust="spacingAndGlyphs" >D35</text>
<path d="M781.2 484.6H795.6" stroke="#6c6c6c" stroke-width="0.65"/>
<text x="794.6" y="484.4" font-size="4.3" fill="#161616" text-anchor="end" textLength="4.5" lengthAdjust="spacingAndGlyphs" >B7</text>
<text x="797.0" y="485.7" font-size="4.3" fill="#000" textLength="6.5" lengthAdjust="spacingAndGlyphs" >S62</text>
<path d="M781.2 487.5H795.6" stroke="#6c6c6c" stroke-width="0.65"/>
<text x="794.6" y="487.3" font-size="4.3" fill="#161616" text-anchor="end" textLength="5.5" lengthAdjust="spacingAndGlyphs" >C12</text>
<text x="797.0" y="488.6" font-size="4.3" fill="#000" textLength="6.5" lengthAdjust="spacingAndGlyphs" >D86</text>
<path d="M781.2 490.4H795.6" stroke="#6c6c6c" stroke-width="0.65"/>
<text x="794.6" y="490.2" font-size="4.3" fill="#161616" text-anchor="end" textLength="4.5" lengthAdjust="spacingAndGlyphs" >G2</text>
<text x="797.0" y="491.5" font-size="4.3" fill="#000" textLength="6.5" lengthAdjust="spacingAndGlyphs" >1_9</text>
<path d="M781.2 493.3H795.6" stroke="#6c6c6c" stroke-width="0.65"/>
<text x="794.6" y="493.1" font-size="4.3" fill="#161616" text-anchor="end" textLength="4.5" lengthAdjust="spacingAndGlyphs" >F11</text>
<text x="797.0" y="494.4" font-size="4.3" fill="#000" textLength="6.5" lengthAdjust="spacingAndGlyphs" >S24</text>
<path d="M781.2 496.2H795.6" stroke="#6c6c6c" stroke-width="0.65"/>
<text x="794.6" y="496.0" font-size="4.3" fill="#161616" text-anchor="end" textLength="4.5" lengthAdjust="spacingAndGlyphs" >G2</text>
<text x="797.0" y="497.3" font-size="4.3" fill="#000" textLength="6.5" lengthAdjust="spacingAndGlyphs" >S23</text>
<path d="M781.2 499.1H795.6" stroke="#6c6c6c" stroke-width="0.65"/>
<text x="794.6" y="498.9" font-size="4.3" fill="#161616" text-anchor="end" textLength="4.5" lengthAdjust="spacingAndGlyphs" >E9</text>
<text x="797.0" y="500.2" font-size="4.3" fill="#000" textLength="6.5" lengthAdjust="spacingAndGlyphs" >Q36</text>
<path d="M781.2 502.0H795.6" stroke="#6c6c6c" stroke-width="0.65"/>
<text x="794.6" y="501.8" font-size="4.3" fill="#161616" text-anchor="end" textLength="5.5" lengthAdjust="spacingAndGlyphs" >B7</text>
<text x="797.0" y="503.1" font-size="4.3" fill="#000" textLength="6.5" lengthAdjust="spacingAndGlyphs" >V7_</text>
<path d="M781.2 504.9H795.6" stroke="#6c6c6c" stroke-width="0.65"/>
<text x="794.6" y="504.7" font-size="4.3" fill="#161616" text-anchor="end" textLength="5.5" lengthAdjust="spacingAndGlyphs" >G2</text>
<text x="797.0" y="506.0" font-size="4.3" fill="#000" textLength="6.5" lengthAdjust="spacingAndGlyphs" >D2_</text>
<path d="M781.2 507.8H795.6" stroke="#6c6c6c" stroke-width="0.65"/>
<text x="794.6" y="507.6" font-size="4.3" fill="#161616" text-anchor="end" textLength="4.5" lengthAdjust="spacingAndGlyphs" >D4</text>
<text x="797.0" y="508.9" font-size="4.3" fill="#000" textLength="6.5" lengthAdjust="spacingAndGlyphs" >D62</text>
<path d="M781.2 510.7H795.6" stroke="#6c6c6c" stroke-width="0.65"/>
<text x="794.6" y="510.5" font-size="4.3" fill="#161616" text-anchor="end" textLength="4.5" lengthAdjust="spacingAndGlyphs" >C12</text>
<text x="797.0" y="511.8" font-size="4.3" fill="#000" textLength="5.0" lengthAdjust="spacingAndGlyphs" >66</text>
<path d="M781.2 513.6H795.6" stroke="#6c6c6c" stroke-width="0.65"/>
<text x="794.6" y="513.4" font-size="4.3" fill="#161616" text-anchor="end" textLength="5.5" lengthAdjust="spacingAndGlyphs" >D4</text>
<text x="797.0" y="514.7" font-size="4.3" fill="#000" textLength="5.0" lengthAdjust="spacingAndGlyphs" >9_</text>
<path d="M781.2 516.5H795.6" stroke="#6c6c6c" stroke-width="0.65"/>
<text x="794.6" y="516.3" font-size="4.3" fill="#161616" text-anchor="end" textLength="5.5" lengthAdjust="spacingAndGlyphs" >C12</text>
<text x="797.0" y="517.6" font-size="4.3" fill="#000" textLength="5.0" lengthAdjust="spacingAndGlyphs" >72</text>
<path d="M781.2 519.4H795.6" stroke="#6c6c6c" stroke-width="0.65"/>
<text x="794.6" y="519.2" font-size="4.3" fill="#161616" text-anchor="end" textLength="4.5" lengthAdjust="spacingAndGlyphs" >E9</text>
<text x="797.0" y="520.5" font-size="4.3" fill="#000" textLength="5.0" lengthAdjust="spacingAndGlyphs" >22</text>
<path d="M781.2 522.3H795.6" stroke="#6c6c6c" stroke-width="0.65"/>
<text x="794.6" y="522.1" font-size="4.3" fill="#161616" text-anchor="end" textLength="6.0" lengthAdjust="spacingAndGlyphs" >D4</text>
<text x="797.0" y="523.4" font-size="4.3" fill="#000" textLength="5.0" lengthAdjust="spacingAndGlyphs" >95</text>
<path d="M781.2 525.2H795.6" stroke="#6c6c6c" stroke-width="0.65"/>
<text x="794.6" y="525.0" font-size="4.3" fill="#161616" text-anchor="end" textLength="4.5" lengthAdjust="spacingAndGlyphs" >H10</text>
<text x="797.0" y="526.3" font-size="4.3" fill="#000" textLength="5.0" lengthAdjust="spacingAndGlyphs" >89</text>
<path d="M781.2 528.1H795.6" stroke="#6c6c6c" stroke-width="0.65"/>
<text x="794.6" y="527.9" font-size="4.3" fill="#161616" text-anchor="end" textLength="6.0" lengthAdjust="spacingAndGlyphs" >G2</text>
<text x="797.0" y="529.2" font-size="4.3" fill="#000" textLength="5.0" lengthAdjust="spacingAndGlyphs" >65</text>
<path d="M781.2 531.0H795.6" stroke="#6c6c6c" stroke-width="0.65"/>
<text x="794.6" y="530.8" font-size="4.3" fill="#161616" text-anchor="end" textLength="5.5" lengthAdjust="spacingAndGlyphs" >D4</text>
<text x="797.0" y="532.1" font-size="4.3" fill="#000" textLength="5.0" lengthAdjust="spacingAndGlyphs" >54</text>
<path d="M781.2 533.9H795.6" stroke="#6c6c6c" stroke-width="0.65"/>
<text x="794.6" y="533.7" font-size="4.3" fill="#161616" text-anchor="end" textLength="5.5" lengthAdjust="spacingAndGlyphs" >G2</text>
<text x="797.0" y="535.0" font-size="4.3" fill="#000" textLength="5.0" lengthAdjust="spacingAndGlyphs" >24</text>
<path d="M781.2 536.8H795.6" stroke="#6c6c6c" stroke-width="0.65"/>
<text x="794.6" y="536.6" font-size="4.3" fill="#161616" text-anchor="end" textLength="4.5" lengthAdjust="spacingAndGlyphs" >A3</text>
<text x="797.0" y="537.9" font-size="4.3" fill="#000" textLength="5.0" lengthAdjust="spacingAndGlyphs" >68</text>
<path d="M781.2 539.7H795.6" stroke="#6c6c6c" stroke-width="0.65"/>
<text x="794.6" y="539.5" font-size="4.3" fill="#161616" text-anchor="end" textLength="4.5" lengthAdjust="spacingAndGlyphs" >C12</text>
<text x="797.0" y="540.8" font-size="4.3" fill="#000" textLength="5.0" lengthAdjust="spacingAndGlyphs" >38</text>
<path d="M781.2 542.6H795.6" stroke="#6c6c6c" stroke-width="0.65"/>
<text x="794.6" y="542.4" font-size="4.3" fill="#161616" text-anchor="end" textLength="6.0" lengthAdjust="spacingAndGlyphs" >E9</text>
<text x="797.0" y="543.7" font-size="4.3" fill="#000" textLength="5.0" lengthAdjust="spacingAndGlyphs" >56</text>
<path d="M781.2 545.5H795.6" stroke="#6c6c6c" stroke-width="0.65"/>
<text x="794.6" y="545.3" font-size="4.3" fill="#161616" text-anchor="end" textLength="5.5" lengthAdjust="spacingAndGlyphs" >A3</text>
<text x="797.0" y="546.6" font-size="4.3" fill="#000" textLength="5.0" lengthAdjust="spacingAndGlyphs" >44</text>
<path d="M781.2 548.4H795.6" stroke="#6c6c6c" stroke-width="0.65"/>
<text x="794.6" y="548.2" font-size="4.3" fill="#161616" text-anchor="end" textLength="5.5" lengthAdjust="spacingAndGlyphs" >E9</text>
<text x="797.0" y="549.5" font-size="4.3" fill="#000" textLength="5.0" lengthAdjust="spacingAndGlyphs" >26</text>
<path d="M781.2 551.3H795.6" stroke="#6c6c6c" stroke-width="0.65"/>
<text x="794.6" y="551.1" font-size="4.3" fill="#161616" text-anchor="end" textLength="5.5" lengthAdjust="spacingAndGlyphs" >F11</text>
<text x="797.0" y="552.4" font-size="4.3" fill="#000" textLength="5.0" lengthAdjust="spacingAndGlyphs" >_7</text>
<path d="M781.2 554.2H795.6" stroke="#6c6c6c" stroke-width="0.65"/>
<text x="794.6" y="554.0" font-size="4.3" fill="#161616" text-anchor="end" textLength="4.5" lengthAdjust="spacingAndGlyphs" >D4</text>
<text x="797.0" y="555.3" font-size="4.3" fill="#000" textLength="5.0" lengthAdjust="spacingAndGlyphs" >65</text>
<path d="M781.2 557.1H795.6" stroke="#6c6c6c" stroke-width="0.65"/>
<text x="794.6" y="556.9" font-size="4.3" fill="#161616" text-anchor="end" textLength="4.5" lengthAdjust="spacingAndGlyphs" >F11</text>
<text x="797.0" y="558.2" font-size="4.3" fill="#000" textLength="5.0" lengthAdjust="spacingAndGlyphs" >27</text>
<path d="M781.2 560.0H795.6" stroke="#6c6c6c" stroke-width="0.65"/>
<text x="794.6" y="559.8" font-size="4.3" fill="#161616" text-anchor="end" textLength="4.5" lengthAdjust="spacingAndGlyphs" >G2</text>
<text x="797.0" y="561.1" font-size="4.3" fill="#000" textLength="5.0" lengthAdjust="spacingAndGlyphs" >96</text>
<path d="M781.2 562.9H795.6" stroke="#6c6c6c" stroke-width="0.65"/>
<text x="794.6" y="562.7" font-size="4.3" fill="#161616" text-anchor="end" textLength="4.5" lengthAdjust="spacingAndGlyphs" >D4</text>
<text x="797.0" y="564.0" font-size="4.3" fill="#000" textLength="5.0" lengthAdjust="spacingAndGlyphs" >_2</text>
<text x="793.5" y="471.0" font-size="3.7" fill="#161616" text-anchor="end" textLength="3.5" lengthAdjust="spacingAndGlyphs" >A1</text>
<path d="M778.0 608.5H785.0" stroke="#999" stroke-width="0.8"/>
<path d="M779.2 610.0H783.8" stroke="#aaa" stroke-width="0.6"/>
<path d="M780.4 611.4H782.6" stroke="#bbb" stroke-width="0.5"/>
<path d="M781.2 599.6 H896.5" stroke="#6c6c6c" stroke-width="0.7" fill="none"/>
<path d="M781.2 599.9H920.0" stroke="#e8e8a0" stroke-width="0.6"/>
<path d="M809.7 590.5V599.6" stroke="#666" stroke-width="0.6"/>
<text x="810.7" y="589.8" font-size="3.7" fill="#111" textLength="6.0" lengthAdjust="spacingAndGlyphs" transform="rotate(-90 810.7 589.8)" >VSSQ_0</text>
<text x="810.7" y="597.4" font-size="4.3" fill="#666" textLength="4.6" lengthAdjust="spacingAndGlyphs" transform="rotate(-90 810.7 597.4)" >B0</text>
<path d="M812.6 590.5V599.6" stroke="#666" stroke-width="0.6"/>
<text x="813.6" y="589.8" font-size="3.7" fill="#111" textLength="6.0" lengthAdjust="spacingAndGlyphs" transform="rotate(-90 813.6 589.8)" >VSSQ_1</text>
<text x="813.6" y="597.4" font-size="4.3" fill="#666" textLength="4.6" lengthAdjust="spacingAndGlyphs" transform="rotate(-90 813.6 597.4)" >B1</text>
<path d="M815.5 590.5V599.6" stroke="#666" stroke-width="0.6"/>
<text x="816.5" y="589.8" font-size="3.7" fill="#111" textLength="10.5" lengthAdjust="spacingAndGlyphs" transform="rotate(-90 816.5 589.8)" >VSSQ_2</text>
<text x="816.5" y="597.4" font-size="4.3" fill="#666" textLength="4.6" lengthAdjust="spacingAndGlyphs" transform="rotate(-90 816.5 597.4)" >B2</text>
<path d="M818.3 590.5V599.6" stroke="#666" stroke-width="0.6"/>
<text x="819.3" y="589.8" font-size="3.7" fill="#111" textLength="10.5" lengthAdjust="spacingAndGlyphs" transform="rotate(-90 819.3 589.8)" >VSSQ_3</text>
<text x="819.3" y="597.4" font-size="4.3" fill="#666" textLength="4.6" lengthAdjust="spacingAndGlyphs" transform="rotate(-90 819.3 597.4)" >B3</text>
<path d="M821.2 590.5V599.6" stroke="#666" stroke-width="0.6"/>
<text x="822.2" y="589.8" font-size="3.7" fill="#111" textLength="10.5" lengthAdjust="spacingAndGlyphs" transform="rotate(-90 822.2 589.8)" >VSSQ_4</text>
<text x="822.2" y="597.4" font-size="4.3" fill="#666" textLength="4.6" lengthAdjust="spacingAndGlyphs" transform="rotate(-90 822.2 597.4)" >B4</text>
<path d="M824.1 590.5V599.6" stroke="#666" stroke-width="0.6"/>
<text x="825.1" y="589.8" font-size="3.7" fill="#111" textLength="10.5" lengthAdjust="spacingAndGlyphs" transform="rotate(-90 825.1 589.8)" >VSSQ_5</text>
<text x="825.1" y="597.4" font-size="4.3" fill="#666" textLength="4.6" lengthAdjust="spacingAndGlyphs" transform="rotate(-90 825.1 597.4)" >B5</text>
<path d="M827.0 590.5V599.6" stroke="#666" stroke-width="0.6"/>
<text x="828.0" y="589.8" font-size="3.7" fill="#111" textLength="10.5" lengthAdjust="spacingAndGlyphs" transform="rotate(-90 828.0 589.8)" >VSSQ_6</text>
<text x="828.0" y="597.4" font-size="4.3" fill="#666" textLength="4.6" lengthAdjust="spacingAndGlyphs" transform="rotate(-90 828.0 597.4)" >B6</text>
<path d="M829.8 590.5V599.6" stroke="#666" stroke-width="0.6"/>
<text x="830.8" y="589.8" font-size="3.7" fill="#111" textLength="10.5" lengthAdjust="spacingAndGlyphs" transform="rotate(-90 830.8 589.8)" >VSSQ_7</text>
<text x="830.8" y="597.4" font-size="4.3" fill="#666" textLength="4.6" lengthAdjust="spacingAndGlyphs" transform="rotate(-90 830.8 597.4)" >B7</text>
<path d="M832.7 590.5V599.6" stroke="#666" stroke-width="0.6"/>
<text x="833.7" y="589.8" font-size="3.7" fill="#111" textLength="10.5" lengthAdjust="spacingAndGlyphs" transform="rotate(-90 833.7 589.8)" >VSSQ_8</text>
<text x="833.7" y="597.4" font-size="4.3" fill="#666" textLength="4.6" lengthAdjust="spacingAndGlyphs" transform="rotate(-90 833.7 597.4)" >B8</text>
<path d="M835.6 590.5V599.6" stroke="#666" stroke-width="0.6"/>
<text x="836.6" y="589.8" font-size="3.7" fill="#111" textLength="10.5" lengthAdjust="spacingAndGlyphs" transform="rotate(-90 836.6 589.8)" >VSSQ_0</text>
<text x="836.6" y="597.4" font-size="4.3" fill="#666" textLength="4.6" lengthAdjust="spacingAndGlyphs" transform="rotate(-90 836.6 597.4)" >B0</text>
<path d="M838.5 590.5V599.6" stroke="#666" stroke-width="0.6"/>
<text x="839.5" y="589.8" font-size="3.7" fill="#111" textLength="10.5" lengthAdjust="spacingAndGlyphs" transform="rotate(-90 839.5 589.8)" >VSSQ_1</text>
<text x="839.5" y="597.4" font-size="4.3" fill="#666" textLength="4.6" lengthAdjust="spacingAndGlyphs" transform="rotate(-90 839.5 597.4)" >B1</text>
<path d="M841.3 590.5V599.6" stroke="#666" stroke-width="0.6"/>
<text x="842.3" y="589.8" font-size="3.7" fill="#111" textLength="10.5" lengthAdjust="spacingAndGlyphs" transform="rotate(-90 842.3 589.8)" >VSSQ_2</text>
<text x="842.3" y="597.4" font-size="4.3" fill="#666" textLength="4.6" lengthAdjust="spacingAndGlyphs" transform="rotate(-90 842.3 597.4)" >B2</text>
<path d="M844.2 590.5V599.6" stroke="#666" stroke-width="0.6"/>
<text x="845.2" y="589.8" font-size="3.7" fill="#111" textLength="10.5" lengthAdjust="spacingAndGlyphs" transform="rotate(-90 845.2 589.8)" >VSSQ_3</text>
<text x="845.2" y="597.4" font-size="4.3" fill="#666" textLength="4.6" lengthAdjust="spacingAndGlyphs" transform="rotate(-90 845.2 597.4)" >B3</text>
<path d="M847.1 590.5V599.6" stroke="#666" stroke-width="0.6"/>
<text x="848.1" y="589.8" font-size="3.7" fill="#111" textLength="10.5" lengthAdjust="spacingAndGlyphs" transform="rotate(-90 848.1 589.8)" >VSSQ_4</text>
<text x="848.1" y="597.4" font-size="4.3" fill="#666" textLength="4.6" lengthAdjust="spacingAndGlyphs" transform="rotate(-90 848.1 597.4)" >B4</text>
<path d="M850.0 590.5V599.6" stroke="#666" stroke-width="0.6"/>
<text x="851.0" y="589.8" font-size="3.7" fill="#111" textLength="10.5" lengthAdjust="spacingAndGlyphs" transform="rotate(-90 851.0 589.8)" >VSSQ_5</text>
<text x="851.0" y="597.4" font-size="4.3" fill="#666" textLength="4.6" lengthAdjust="spacingAndGlyphs" transform="rotate(-90 851.0 597.4)" >B5</text>
<path d="M852.9 590.5V599.6" stroke="#666" stroke-width="0.6"/>
<text x="853.9" y="589.8" font-size="3.7" fill="#111" textLength="10.5" lengthAdjust="spacingAndGlyphs" transform="rotate(-90 853.9 589.8)" >VSSQ_6</text>
<text x="853.9" y="597.4" font-size="4.3" fill="#666" textLength="4.6" lengthAdjust="spacingAndGlyphs" transform="rotate(-90 853.9 597.4)" >B6</text>
<path d="M855.7 590.5V599.6" stroke="#666" stroke-width="0.6"/>
<text x="856.7" y="589.8" font-size="3.7" fill="#111" textLength="10.5" lengthAdjust="spacingAndGlyphs" transform="rotate(-90 856.7 589.8)" >VSSQ_7</text>
<text x="856.7" y="597.4" font-size="4.3" fill="#666" textLength="4.6" lengthAdjust="spacingAndGlyphs" transform="rotate(-90 856.7 597.4)" >B7</text>
<path d="M858.6 590.5V599.6" stroke="#666" stroke-width="0.6"/>
<text x="859.6" y="589.8" font-size="3.7" fill="#111" textLength="10.5" lengthAdjust="spacingAndGlyphs" transform="rotate(-90 859.6 589.8)" >VSSQ_8</text>
<text x="859.6" y="597.4" font-size="4.3" fill="#666" textLength="4.6" lengthAdjust="spacingAndGlyphs" transform="rotate(-90 859.6 597.4)" >B8</text>
<path d="M861.5 590.5V599.6" stroke="#666" stroke-width="0.6"/>
<text x="862.5" y="589.8" font-size="3.7" fill="#111" textLength="10.5" lengthAdjust="spacingAndGlyphs" transform="rotate(-90 862.5 589.8)" >VSSQ_0</text>
<text x="862.5" y="597.4" font-size="4.3" fill="#666" textLength="4.6" lengthAdjust="spacingAndGlyphs" transform="rotate(-90 862.5 597.4)" >B0</text>
<path d="M864.4 590.5V599.6" stroke="#666" stroke-width="0.6"/>
<text x="865.4" y="589.8" font-size="3.7" fill="#111" textLength="10.5" lengthAdjust="spacingAndGlyphs" transform="rotate(-90 865.4 589.8)" >VSSQ_1</text>
<text x="865.4" y="597.4" font-size="4.3" fill="#666" textLength="4.6" lengthAdjust="spacingAndGlyphs" transform="rotate(-90 865.4 597.4)" >B1</text>
<path d="M867.2 590.5V599.6" stroke="#666" stroke-width="0.6"/>
<text x="868.2" y="589.8" font-size="3.7" fill="#111" textLength="10.5" lengthAdjust="spacingAndGlyphs" transform="rotate(-90 868.2 589.8)" >VSSQ_2</text>
<text x="868.2" y="597.4" font-size="4.3" fill="#666" textLength="4.6" lengthAdjust="spacingAndGlyphs" transform="rotate(-90 868.2 597.4)" >B2</text>
<path d="M870.1 590.5V599.6" stroke="#666" stroke-width="0.6"/>
<text x="871.1" y="589.8" font-size="3.7" fill="#111" textLength="10.5" lengthAdjust="spacingAndGlyphs" transform="rotate(-90 871.1 589.8)" >VSSQ_3</text>
<text x="871.1" y="597.4" font-size="4.3" fill="#666" textLength="4.6" lengthAdjust="spacingAndGlyphs" transform="rotate(-90 871.1 597.4)" >B3</text>
<path d="M873.0 590.5V599.6" stroke="#666" stroke-width="0.6"/>
<text x="874.0" y="589.8" font-size="3.7" fill="#111" textLength="13.0" lengthAdjust="spacingAndGlyphs" transform="rotate(-90 874.0 589.8)" >VSSQ_4</text>
<text x="874.0" y="597.4" font-size="4.3" fill="#666" textLength="4.6" lengthAdjust="spacingAndGlyphs" transform="rotate(-90 874.0 597.4)" >B4</text>
<path d="M875.9 590.5V599.6" stroke="#666" stroke-width="0.6"/>
<text x="876.9" y="589.8" font-size="3.7" fill="#111" textLength="13.0" lengthAdjust="spacingAndGlyphs" transform="rotate(-90 876.9 589.8)" >VSSQ_5</text>
<text x="876.9" y="597.4" font-size="4.3" fill="#666" textLength="4.6" lengthAdjust="spacingAndGlyphs" transform="rotate(-90 876.9 597.4)" >B5</text>
<path d="M878.7 590.5V599.6" stroke="#666" stroke-width="0.6"/>
<text x="879.7" y="589.8" font-size="3.7" fill="#111" textLength="13.0" lengthAdjust="spacingAndGlyphs" transform="rotate(-90 879.7 589.8)" >VSSQ_6</text>
<text x="879.7" y="597.4" font-size="4.3" fill="#666" textLength="4.6" lengthAdjust="spacingAndGlyphs" transform="rotate(-90 879.7 597.4)" >B6</text>
<path d="M881.6 590.5V599.6" stroke="#666" stroke-width="0.6"/>
<text x="882.6" y="589.8" font-size="3.7" fill="#111" textLength="13.0" lengthAdjust="spacingAndGlyphs" transform="rotate(-90 882.6 589.8)" >VSSQ_7</text>
<text x="882.6" y="597.4" font-size="4.3" fill="#666" textLength="4.6" lengthAdjust="spacingAndGlyphs" transform="rotate(-90 882.6 597.4)" >B7</text>
<path d="M884.5 590.5V599.6" stroke="#666" stroke-width="0.6"/>
<text x="885.5" y="589.8" font-size="3.7" fill="#111" textLength="13.0" lengthAdjust="spacingAndGlyphs" transform="rotate(-90 885.5 589.8)" >VSSQ_8</text>
<text x="885.5" y="597.4" font-size="4.3" fill="#666" textLength="4.6" lengthAdjust="spacingAndGlyphs" transform="rotate(-90 885.5 597.4)" >B8</text>
<path d="M887.4 590.5V599.6" stroke="#666" stroke-width="0.6"/>
<text x="888.4" y="589.8" font-size="3.7" fill="#111" textLength="13.0" lengthAdjust="spacingAndGlyphs" transform="rotate(-90 888.4 589.8)" >VSSQ_0</text>
<text x="888.4" y="597.4" font-size="4.3" fill="#666" textLength="4.6" lengthAdjust="spacingAndGlyphs" transform="rotate(-90 888.4 597.4)" >B0</text>
<path d="M890.2 590.5V599.6" stroke="#666" stroke-width="0.6"/>
<text x="891.2" y="589.8" font-size="3.7" fill="#111" textLength="13.0" lengthAdjust="spacingAndGlyphs" transform="rotate(-90 891.2 589.8)" >VSSQ_1</text>
<text x="891.2" y="597.4" font-size="4.3" fill="#666" textLength="4.6" lengthAdjust="spacingAndGlyphs" transform="rotate(-90 891.2 597.4)" >B1</text>
<path d="M893.1 590.5V599.6" stroke="#666" stroke-width="0.6"/>
<text x="894.1" y="589.8" font-size="3.7" fill="#111" textLength="13.0" lengthAdjust="spacingAndGlyphs" transform="rotate(-90 894.1 589.8)" >VSSQ_2</text>
<text x="894.1" y="597.4" font-size="4.3" fill="#666" textLength="4.6" lengthAdjust="spacingAndGlyphs" transform="rotate(-90 894.1 597.4)" >B2</text>
<path d="M896.0 590.5V599.6" stroke="#666" stroke-width="0.6"/>
<text x="897.0" y="589.8" font-size="3.7" fill="#111" textLength="13.0" lengthAdjust="spacingAndGlyphs" transform="rotate(-90 897.0 589.8)" >VSSQ_3</text>
<text x="897.0" y="597.4" font-size="4.3" fill="#666" textLength="4.6" lengthAdjust="spacingAndGlyphs" transform="rotate(-90 897.0 597.4)" >B3</text>
<path d="M920.0 560.0V600.0" stroke="#f0f0b0" stroke-width="0.6"/>
<path d="M910.6 303.3H956.8" stroke="#6c6c6c" stroke-width="0.65"/>
<rect x="957.0" y="301.5" width="5.2" height="3.6" fill="#fff" stroke="#8a8a8a" stroke-width="0.6" rx="1"/>
<text x="964.0" y="304.0" font-size="4.3" fill="#1a1a9a" font-weight="bold" textLength="14.0" lengthAdjust="spacingAndGlyphs" >LPDDR_CS0</text>
<path d="M964.0 304.5H978.0" stroke="#5a5ac8" stroke-width="0.35"/>
<text x="990.0" y="304.1" font-size="4.3" fill="#111" textLength="2.5" lengthAdjust="spacingAndGlyphs" >(1)</text>
<text x="911.8" y="303.1" font-size="4.3" fill="#161616" textLength="3.5" lengthAdjust="spacingAndGlyphs" >E9</text>
<text x="909.4" y="304.4" font-size="4.3" fill="#000" text-anchor="end" textLength="6.0" lengthAdjust="spacingAndGlyphs" >D82</text>
<path d="M910.6 306.2H956.8" stroke="#6c6c6c" stroke-width="0.65"/>
<rect x="957.0" y="304.4" width="5.2" height="3.6" fill="#fff" stroke="#8a8a8a" stroke-width="0.6" rx="1"/>
<text x="964.0" y="306.9" font-size="4.3" fill="#1a1a9a" font-weight="bold" textLength="14.0" lengthAdjust="spacingAndGlyphs" >LPDDR_CS1</text>
<path d="M964.0 307.4H978.0" stroke="#5a5ac8" stroke-width="0.35"/>
<text x="990.0" y="307.0" font-size="4.3" fill="#111" textLength="2.5" lengthAdjust="spacingAndGlyphs" >(1)</text>
<text x="911.8" y="306.0" font-size="4.3" fill="#161616" textLength="4.5" lengthAdjust="spacingAndGlyphs" >A3</text>
<text x="909.4" y="307.3" font-size="4.3" fill="#000" text-anchor="end" textLength="7.5" lengthAdjust="spacingAndGlyphs" >SQ3_</text>
<path d="M910.6 311.4H956.8" stroke="#6c6c6c" stroke-width="0.65"/>
<rect x="957.0" y="309.6" width="5.2" height="3.6" fill="#fff" stroke="#8a8a8a" stroke-width="0.6" rx="1"/>
<text x="964.0" y="312.1" font-size="4.3" fill="#1a1a9a" font-weight="bold" textLength="13.0" lengthAdjust="spacingAndGlyphs" >LPDDR_CK</text>
<path d="M964.0 312.6H977.0" stroke="#5a5ac8" stroke-width="0.35"/>
<text x="990.0" y="312.2" font-size="4.3" fill="#111" textLength="2.5" lengthAdjust="spacingAndGlyphs" >(1)</text>
<text x="911.8" y="311.2" font-size="4.3" fill="#161616" textLength="4.5" lengthAdjust="spacingAndGlyphs" >G2</text>
<text x="909.4" y="312.5" font-size="4.3" fill="#000" text-anchor="end" textLength="6.0" lengthAdjust="spacingAndGlyphs" >046</text>
<path d="M910.6 314.3 H924.5 V311.4" stroke="#6c6c6c" stroke-width="0.7" fill="none"/>
<text x="911.8" y="314.1" font-size="4.3" fill="#161616" textLength="3.5" lengthAdjust="spacingAndGlyphs" >C2</text>
<text x="909.4" y="315.4" font-size="4.3" fill="#000" text-anchor="end" textLength="7.0" lengthAdjust="spacingAndGlyphs" >18_</text>
<circle cx="924.5" cy="311.4" r=".8" fill="#333"/>
<path d="M910.6 320.8H956.8" stroke="#6c6c6c" stroke-width="0.65"/>
<rect x="957.0" y="319.0" width="5.2" height="3.6" fill="#fff" stroke="#8a8a8a" stroke-width="0.6" rx="1"/>
<text x="964.0" y="321.5" font-size="4.3" fill="#1a1a9a" font-weight="bold" textLength="12.5" lengthAdjust="spacingAndGlyphs" >LPDDR_DQS0</text>
<path d="M964.0 322.0H976.5" stroke="#5a5ac8" stroke-width="0.35"/>
<text x="990.0" y="321.6" font-size="4.3" fill="#111" textLength="2.5" lengthAdjust="spacingAndGlyphs" >(1)</text>
<text x="911.8" y="320.6" font-size="4.3" fill="#161616" textLength="3.5" lengthAdjust="spacingAndGlyphs" >A3</text>
<text x="909.4" y="321.9" font-size="4.3" fill="#000" text-anchor="end" textLength="6.0" lengthAdjust="spacingAndGlyphs" >D22</text>
<path d="M910.6 323.7H956.8" stroke="#6c6c6c" stroke-width="0.65"/>
<rect x="957.0" y="321.9" width="5.2" height="3.6" fill="#fff" stroke="#8a8a8a" stroke-width="0.6" rx="1"/>
<text x="964.0" y="324.4" font-size="4.3" fill="#1a1a9a" font-weight="bold" textLength="12.0" lengthAdjust="spacingAndGlyphs" >LPDDR_DQS0N</text>
<path d="M964.0 324.9H976.0" stroke="#5a5ac8" stroke-width="0.35"/>
<text x="990.0" y="324.5" font-size="4.3" fill="#111" textLength="2.5" lengthAdjust="spacingAndGlyphs" >(1)</text>
<text x="911.8" y="323.5" font-size="4.3" fill="#161616" textLength="3.5" lengthAdjust="spacingAndGlyphs" >F1</text>
<text x="909.4" y="324.8" font-size="4.3" fill="#000" text-anchor="end" textLength="6.0" lengthAdjust="spacingAndGlyphs" >A9_</text>
<text x="938.0" y="328.1" font-size="4.3" fill="#1a1a9a" textLength="18.0" lengthAdjust="spacingAndGlyphs" >LPDDR_CA[9:0]</text>
<path d="M938.0 328.6H956.0" stroke="#5a5ac8" stroke-width="0.35"/>
<path d="M956 329.5 H941 L939.5 331.0 V361.6" stroke="#14142e" stroke-width="1.1" fill="none"/>
<text x="941.5" y="332.7" font-size="4.3" fill="#161616" textLength="2.5" lengthAdjust="spacingAndGlyphs" >(1)</text>
<text x="924.8" y="333.2" font-size="4.3" fill="#1a1a9a" font-weight="bold" textLength="12.5" lengthAdjust="spacingAndGlyphs" >LPDDR_D0</text>
<path d="M924.5 333.6H938.0" stroke="#2828b0" stroke-width="0.6"/>
<path d="M910.6 332.4H939.5" stroke="#6c6c6c" stroke-width="0.65"/>
<text x="911.8" y="332.2" font-size="4.3" fill="#161616" textLength="3.5" lengthAdjust="spacingAndGlyphs" >A3</text>
<text x="909.4" y="333.5" font-size="4.3" fill="#000" text-anchor="end" textLength="7.5" lengthAdjust="spacingAndGlyphs" >1Q96</text>
<text x="924.8" y="336.1" font-size="4.3" fill="#1a1a9a" font-weight="bold" textLength="12.5" lengthAdjust="spacingAndGlyphs" >LPDDR_D1</text>
<path d="M924.5 336.5H938.0" stroke="#2828b0" stroke-width="0.6"/>
<path d="M910.6 335.3H939.5" stroke="#6c6c6c" stroke-width="0.65"/>
<text x="911.8" y="335.1" font-size="4.3" fill="#161616" textLength="4.5" lengthAdjust="spacingAndGlyphs" >A3</text>
<text x="909.4" y="336.4" font-size="4.3" fill="#000" text-anchor="end" textLength="7.5" lengthAdjust="spacingAndGlyphs" >D1_3</text>
<text x="924.8" y="339.0" font-size="4.3" fill="#1a1a9a" font-weight="bold" textLength="12.5" lengthAdjust="spacingAndGlyphs" >LPDDR_D2</text>
<path d="M924.5 339.4H938.0" stroke="#2828b0" stroke-width="0.6"/>
<path d="M910.6 338.2H939.5" stroke="#6c6c6c" stroke-width="0.65"/>
<text x="911.8" y="338.0" font-size="4.3" fill="#161616" textLength="4.5" lengthAdjust="spacingAndGlyphs" >B7</text>
<text x="909.4" y="339.3" font-size="4.3" fill="#000" text-anchor="end" textLength="7.5" lengthAdjust="spacingAndGlyphs" >SD65</text>
<text x="924.8" y="341.9" font-size="4.3" fill="#1a1a9a" font-weight="bold" textLength="12.5" lengthAdjust="spacingAndGlyphs" >LPDDR_D3</text>
<path d="M924.5 342.3H938.0" stroke="#2828b0" stroke-width="0.6"/>
<path d="M910.6 341.1H939.5" stroke="#6c6c6c" stroke-width="0.65"/>
<text x="911.8" y="340.9" font-size="4.3" fill="#161616" textLength="3.5" lengthAdjust="spacingAndGlyphs" >D4</text>
<text x="909.4" y="342.2" font-size="4.3" fill="#000" text-anchor="end" textLength="7.5" lengthAdjust="spacingAndGlyphs" >0083</text>
<text x="924.8" y="344.8" font-size="4.3" fill="#1a1a9a" font-weight="bold" textLength="12.5" lengthAdjust="spacingAndGlyphs" >LPDDR_D4</text>
<path d="M924.5 345.2H938.0" stroke="#2828b0" stroke-width="0.6"/>
<path d="M910.6 344.0H939.5" stroke="#6c6c6c" stroke-width="0.65"/>
<text x="911.8" y="343.8" font-size="4.3" fill="#161616" textLength="4.5" lengthAdjust="spacingAndGlyphs" >H1</text>
<text x="909.4" y="345.1" font-size="4.3" fill="#000" text-anchor="end" textLength="7.5" lengthAdjust="spacingAndGlyphs" >VQ34</text>
<text x="924.8" y="347.8" font-size="4.3" fill="#1a1a9a" font-weight="bold" textLength="12.5" lengthAdjust="spacingAndGlyphs" >LPDDR_D5</text>
<path d="M924.5 348.1H938.0" stroke="#2828b0" stroke-width="0.6"/>
<path d="M910.6 346.9H939.5" stroke="#6c6c6c" stroke-width="0.65"/>
<text x="911.8" y="346.8" font-size="4.3" fill="#161616" textLength="4.5" lengthAdjust="spacingAndGlyphs" >F1</text>
<text x="909.4" y="348.1" font-size="4.3" fill="#000" text-anchor="end" textLength="7.5" lengthAdjust="spacingAndGlyphs" >SD29</text>
<text x="924.8" y="350.7" font-size="4.3" fill="#1a1a9a" font-weight="bold" textLength="12.5" lengthAdjust="spacingAndGlyphs" >LPDDR_D6</text>
<path d="M924.5 351.1H938.0" stroke="#2828b0" stroke-width="0.6"/>
<path d="M910.6 349.9H939.5" stroke="#6c6c6c" stroke-width="0.65"/>
<text x="911.8" y="349.7" font-size="4.3" fill="#161616" textLength="4.5" lengthAdjust="spacingAndGlyphs" >A3</text>
<text x="909.4" y="351.0" font-size="4.3" fill="#000" text-anchor="end" textLength="7.5" lengthAdjust="spacingAndGlyphs" >SD59</text>
<text x="924.8" y="353.6" font-size="4.3" fill="#1a1a9a" font-weight="bold" textLength="12.5" lengthAdjust="spacingAndGlyphs" >LPDDR_D7</text>
<path d="M924.5 354.0H938.0" stroke="#2828b0" stroke-width="0.6"/>
<path d="M910.6 352.8H939.5" stroke="#6c6c6c" stroke-width="0.65"/>
<text x="911.8" y="352.6" font-size="4.3" fill="#161616" textLength="4.5" lengthAdjust="spacingAndGlyphs" >E9</text>
<text x="909.4" y="353.9" font-size="4.3" fill="#000" text-anchor="end" textLength="7.5" lengthAdjust="spacingAndGlyphs" >0093</text>
<text x="924.8" y="356.5" font-size="4.3" fill="#1a1a9a" font-weight="bold" textLength="12.5" lengthAdjust="spacingAndGlyphs" >LPDDR_D8</text>
<path d="M924.5 356.9H938.0" stroke="#2828b0" stroke-width="0.6"/>
<path d="M910.6 355.7H939.5" stroke="#6c6c6c" stroke-width="0.65"/>
<text x="911.8" y="355.5" font-size="4.3" fill="#161616" textLength="4.5" lengthAdjust="spacingAndGlyphs" >D4</text>
<text x="909.4" y="356.8" font-size="4.3" fill="#000" text-anchor="end" textLength="7.5" lengthAdjust="spacingAndGlyphs" >D026</text>
<text x="924.8" y="359.4" font-size="4.3" fill="#1a1a9a" font-weight="bold" textLength="12.5" lengthAdjust="spacingAndGlyphs" >LPDDR_D9</text>
<path d="M924.5 359.8H938.0" stroke="#2828b0" stroke-width="0.6"/>
<path d="M910.6 358.6H939.5" stroke="#6c6c6c" stroke-width="0.65"/>
<text x="911.8" y="358.4" font-size="4.3" fill="#161616" textLength="3.5" lengthAdjust="spacingAndGlyphs" >H1</text>
<text x="909.4" y="359.7" font-size="4.3" fill="#000" text-anchor="end" textLength="7.5" lengthAdjust="spacingAndGlyphs" >1068</text>
<text x="938.0" y="367.9" font-size="4.3" fill="#1a1a9a" textLength="18.0" lengthAdjust="spacingAndGlyphs" >LPDDR_DQ[7:0]</text>
<path d="M938.0 368.4H956.0" stroke="#5a5ac8" stroke-width="0.35"/>
<path d="M956 369.3 H941 L939.5 370.8 V395.1" stroke="#14142e" stroke-width="1.1" fill="none"/>
<text x="941.5" y="372.5" font-size="4.3" fill="#161616" textLength="2.5" lengthAdjust="spacingAndGlyphs" >(1)</text>
<text x="924.8" y="372.5" font-size="4.3" fill="#1a1a9a" font-weight="bold" textLength="12.5" lengthAdjust="spacingAndGlyphs" >LPDDR_D0</text>
<path d="M924.5 372.9H938.0" stroke="#2828b0" stroke-width="0.6"/>
<path d="M910.6 371.7H939.5" stroke="#6c6c6c" stroke-width="0.65"/>
<text x="911.8" y="371.5" font-size="4.3" fill="#161616" textLength="3.5" lengthAdjust="spacingAndGlyphs" >D4</text>
<text x="909.4" y="372.8" font-size="4.3" fill="#000" text-anchor="end" textLength="7.5" lengthAdjust="spacingAndGlyphs" >DD4_</text>
<text x="924.8" y="375.4" font-size="4.3" fill="#1a1a9a" font-weight="bold" textLength="12.5" lengthAdjust="spacingAndGlyphs" >LPDDR_D1</text>
<path d="M924.5 375.8H938.0" stroke="#2828b0" stroke-width="0.6"/>
<path d="M910.6 374.6H939.5" stroke="#6c6c6c" stroke-width="0.65"/>
<text x="911.8" y="374.4" font-size="4.3" fill="#161616" textLength="4.5" lengthAdjust="spacingAndGlyphs" >E9</text>
<text x="909.4" y="375.7" font-size="4.3" fill="#000" text-anchor="end" textLength="7.5" lengthAdjust="spacingAndGlyphs" >D163</text>
<text x="924.8" y="378.3" font-size="4.3" fill="#1a1a9a" font-weight="bold" textLength="12.5" lengthAdjust="spacingAndGlyphs" >LPDDR_D2</text>
<path d="M924.5 378.7H938.0" stroke="#2828b0" stroke-width="0.6"/>
<path d="M910.6 377.5H939.5" stroke="#6c6c6c" stroke-width="0.65"/>
<text x="911.8" y="377.3" font-size="4.3" fill="#161616" textLength="3.5" lengthAdjust="spacingAndGlyphs" >F1</text>
<text x="909.4" y="378.6" font-size="4.3" fill="#000" text-anchor="end" textLength="7.5" lengthAdjust="spacingAndGlyphs" >0082</text>
<text x="924.8" y="381.2" font-size="4.3" fill="#1a1a9a" font-weight="bold" textLength="12.5" lengthAdjust="spacingAndGlyphs" >LPDDR_D3</text>
<path d="M924.5 381.6H938.0" stroke="#2828b0" stroke-width="0.6"/>
<path d="M910.6 380.4H939.5" stroke="#6c6c6c" stroke-width="0.65"/>
<text x="911.8" y="380.2" font-size="4.3" fill="#161616" textLength="3.5" lengthAdjust="spacingAndGlyphs" >C2</text>
<text x="909.4" y="381.5" font-size="4.3" fill="#000" text-anchor="end" textLength="7.5" lengthAdjust="spacingAndGlyphs" >0086</text>
<text x="924.8" y="384.1" font-size="4.3" fill="#1a1a9a" font-weight="bold" textLength="12.5" lengthAdjust="spacingAndGlyphs" >LPDDR_D4</text>
<path d="M924.5 384.5H938.0" stroke="#2828b0" stroke-width="0.6"/>
<path d="M910.6 383.3H939.5" stroke="#6c6c6c" stroke-width="0.65"/>
<text x="911.8" y="383.1" font-size="4.3" fill="#161616" textLength="4.5" lengthAdjust="spacingAndGlyphs" >C2</text>
<text x="909.4" y="384.4" font-size="4.3" fill="#000" text-anchor="end" textLength="7.5" lengthAdjust="spacingAndGlyphs" >CA73</text>
<text x="924.8" y="387.1" font-size="4.3" fill="#1a1a9a" font-weight="bold" textLength="12.5" lengthAdjust="spacingAndGlyphs" >LPDDR_D5</text>
<path d="M924.5 387.4H938.0" stroke="#2828b0" stroke-width="0.6"/>
<path d="M910.6 386.2H939.5" stroke="#6c6c6c" stroke-width="0.65"/>
<text x="911.8" y="386.1" font-size="4.3" fill="#161616" textLength="3.5" lengthAdjust="spacingAndGlyphs" >F1</text>
<text x="909.4" y="387.4" font-size="4.3" fill="#000" text-anchor="end" textLength="7.5" lengthAdjust="spacingAndGlyphs" >CC83</text>
<text x="924.8" y="390.0" font-size="4.3" fill="#1a1a9a" font-weight="bold" textLength="12.5" lengthAdjust="spacingAndGlyphs" >LPDDR_D6</text>
<path d="M924.5 390.4H938.0" stroke="#2828b0" stroke-width="0.6"/>
<path d="M910.6 389.2H939.5" stroke="#6c6c6c" stroke-width="0.65"/>
<text x="911.8" y="389.0" font-size="4.3" fill="#161616" textLength="3.5" lengthAdjust="spacingAndGlyphs" >D4</text>
<text x="909.4" y="390.3" font-size="4.3" fill="#000" text-anchor="end" textLength="7.5" lengthAdjust="spacingAndGlyphs" >SS73</text>
<text x="924.8" y="392.9" font-size="4.3" fill="#1a1a9a" font-weight="bold" textLength="12.5" lengthAdjust="spacingAndGlyphs" >LPDDR_D7</text>
<path d="M924.5 393.3H938.0" stroke="#2828b0" stroke-width="0.6"/>
<path d="M910.6 392.1H939.5" stroke="#6c6c6c" stroke-width="0.65"/>
<text x="911.8" y="391.9" font-size="4.3" fill="#161616" textLength="4.5" lengthAdjust="spacingAndGlyphs" >G2</text>
<text x="909.4" y="393.2" font-size="4.3" fill="#000" text-anchor="end" textLength="7.5" lengthAdjust="spacingAndGlyphs" >DC86</text>
<path d="M910.6 398.2H956.8" stroke="#6c6c6c" stroke-width="0.65"/>
<rect x="957.0" y="396.4" width="5.2" height="3.6" fill="#fff" stroke="#8a8a8a" stroke-width="0.6" rx="1"/>
<text x="964.0" y="398.8" font-size="4.3" fill="#1a1a9a" font-weight="bold" textLength="10.5" lengthAdjust="spacingAndGlyphs" >LPDDR_DM0</text>
<path d="M964.0 399.3H974.5" stroke="#5a5ac8" stroke-width="0.35"/>
<text x="990.0" y="399.0" font-size="4.3" fill="#111" textLength="2.5" lengthAdjust="spacingAndGlyphs" >(1)</text>
<text x="911.8" y="398.0" font-size="4.3" fill="#161616" textLength="4.5" lengthAdjust="spacingAndGlyphs" >A3</text>
<text x="909.4" y="399.3" font-size="4.3" fill="#000" text-anchor="end" textLength="6.0" lengthAdjust="spacingAndGlyphs" >D26</text>
<path d="M910.6 401.3H956.8" stroke="#6c6c6c" stroke-width="0.65"/>
<rect x="957.0" y="399.5" width="5.2" height="3.6" fill="#fff" stroke="#8a8a8a" stroke-width="0.6" rx="1"/>
<text x="964.0" y="401.9" font-size="4.3" fill="#1a1a9a" font-weight="bold" textLength="16.0" lengthAdjust="spacingAndGlyphs" >LPDDR_DQS0P</text>
<path d="M964.0 402.4H980.0" stroke="#5a5ac8" stroke-width="0.35"/>
<text x="990.0" y="402.1" font-size="4.3" fill="#111" textLength="2.5" lengthAdjust="spacingAndGlyphs" >(1)</text>
<text x="911.8" y="401.1" font-size="4.3" fill="#161616" textLength="3.5" lengthAdjust="spacingAndGlyphs" >C2</text>
<text x="909.4" y="402.4" font-size="4.3" fill="#000" text-anchor="end" textLength="8.5" lengthAdjust="spacingAndGlyphs" >SA_7</text>
<path d="M910.6 404.3H956.8" stroke="#6c6c6c" stroke-width="0.65"/>
<rect x="957.0" y="402.5" width="5.2" height="3.6" fill="#fff" stroke="#8a8a8a" stroke-width="0.6" rx="1"/>
<text x="964.0" y="404.9" font-size="4.3" fill="#1a1a9a" font-weight="bold" textLength="16.0" lengthAdjust="spacingAndGlyphs" >LPDDR_DQS0N</text>
<path d="M964.0 405.4H980.0" stroke="#5a5ac8" stroke-width="0.35"/>
<text x="990.0" y="405.1" font-size="4.3" fill="#111" textLength="2.5" lengthAdjust="spacingAndGlyphs" >(1)</text>
<text x="911.8" y="404.1" font-size="4.3" fill="#161616" textLength="4.5" lengthAdjust="spacingAndGlyphs" >D4</text>
<text x="909.4" y="405.4" font-size="4.3" fill="#000" text-anchor="end" textLength="8.5" lengthAdjust="spacingAndGlyphs" >AV8_</text>
<text x="938.0" y="408.1" font-size="4.3" fill="#1a1a9a" textLength="18.0" lengthAdjust="spacingAndGlyphs" >LPDDR_DQ[15:8]</text>
<path d="M938.0 408.6H956.0" stroke="#5a5ac8" stroke-width="0.35"/>
<path d="M956 409.5 H941 L939.5 411.0 V435.3" stroke="#14142e" stroke-width="1.1" fill="none"/>
<text x="941.5" y="412.7" font-size="4.3" fill="#161616" textLength="2.5" lengthAdjust="spacingAndGlyphs" >(1)</text>
<text x="924.8" y="412.7" font-size="4.3" fill="#1a1a9a" font-weight="bold" textLength="12.5" lengthAdjust="spacingAndGlyphs" >LPDDR_D0</text>
<path d="M924.5 413.1H938.0" stroke="#2828b0" stroke-width="0.6"/>
<path d="M910.6 411.9H939.5" stroke="#6c6c6c" stroke-width="0.65"/>
<text x="911.8" y="411.7" font-size="4.3" fill="#161616" textLength="3.5" lengthAdjust="spacingAndGlyphs" >D4</text>
<text x="909.4" y="413.0" font-size="4.3" fill="#000" text-anchor="end" textLength="7.5" lengthAdjust="spacingAndGlyphs" >VA94</text>
<text x="924.8" y="415.6" font-size="4.3" fill="#1a1a9a" font-weight="bold" textLength="12.5" lengthAdjust="spacingAndGlyphs" >LPDDR_D1</text>
<path d="M924.5 416.0H938.0" stroke="#2828b0" stroke-width="0.6"/>
<path d="M910.6 414.8H939.5" stroke="#6c6c6c" stroke-width="0.65"/>
<text x="911.8" y="414.6" font-size="4.3" fill="#161616" textLength="4.5" lengthAdjust="spacingAndGlyphs" >E9</text>
<text x="909.4" y="415.9" font-size="4.3" fill="#000" text-anchor="end" textLength="7.5" lengthAdjust="spacingAndGlyphs" >V144</text>
<text x="924.8" y="418.5" font-size="4.3" fill="#1a1a9a" font-weight="bold" textLength="12.5" lengthAdjust="spacingAndGlyphs" >LPDDR_D2</text>
<path d="M924.5 418.9H938.0" stroke="#2828b0" stroke-width="0.6"/>
<path d="M910.6 417.7H939.5" stroke="#6c6c6c" stroke-width="0.65"/>
<text x="911.8" y="417.5" font-size="4.3" fill="#161616" textLength="4.5" lengthAdjust="spacingAndGlyphs" >H1</text>
<text x="909.4" y="418.8" font-size="4.3" fill="#000" text-anchor="end" textLength="7.5" lengthAdjust="spacingAndGlyphs" >CS66</text>
<text x="924.8" y="421.4" font-size="4.3" fill="#1a1a9a" font-weight="bold" textLength="12.5" lengthAdjust="spacingAndGlyphs" >LPDDR_D3</text>
<path d="M924.5 421.8H938.0" stroke="#2828b0" stroke-width="0.6"/>
<path d="M910.6 420.6H939.5" stroke="#6c6c6c" stroke-width="0.65"/>
<text x="911.8" y="420.4" font-size="4.3" fill="#161616" textLength="4.5" lengthAdjust="spacingAndGlyphs" >E9</text>
<text x="909.4" y="421.7" font-size="4.3" fill="#000" text-anchor="end" textLength="7.5" lengthAdjust="spacingAndGlyphs" >QS9_</text>
<text x="924.8" y="424.3" font-size="4.3" fill="#1a1a9a" font-weight="bold" textLength="12.5" lengthAdjust="spacingAndGlyphs" >LPDDR_D4</text>
<path d="M924.5 424.7H938.0" stroke="#2828b0" stroke-width="0.6"/>
<path d="M910.6 423.5H939.5" stroke="#6c6c6c" stroke-width="0.65"/>
<text x="911.8" y="423.3" font-size="4.3" fill="#161616" textLength="3.5" lengthAdjust="spacingAndGlyphs" >G2</text>
<text x="909.4" y="424.6" font-size="4.3" fill="#000" text-anchor="end" textLength="7.5" lengthAdjust="spacingAndGlyphs" >DD35</text>
<text x="924.8" y="427.2" font-size="4.3" fill="#1a1a9a" font-weight="bold" textLength="12.5" lengthAdjust="spacingAndGlyphs" >LPDDR_D5</text>
<path d="M924.5 427.6H938.0" stroke="#2828b0" stroke-width="0.6"/>
<path d="M910.6 426.4H939.5" stroke="#6c6c6c" stroke-width="0.65"/>
<text x="911.8" y="426.2" font-size="4.3" fill="#161616" textLength="3.5" lengthAdjust="spacingAndGlyphs" >H1</text>
<text x="909.4" y="427.6" font-size="4.3" fill="#000" text-anchor="end" textLength="7.5" lengthAdjust="spacingAndGlyphs" >0C98</text>
<text x="924.8" y="430.2" font-size="4.3" fill="#1a1a9a" font-weight="bold" textLength="12.5" lengthAdjust="spacingAndGlyphs" >LPDDR_D6</text>
<path d="M924.5 430.6H938.0" stroke="#2828b0" stroke-width="0.6"/>
<path d="M910.6 429.4H939.5" stroke="#6c6c6c" stroke-width="0.65"/>
<text x="911.8" y="429.2" font-size="4.3" fill="#161616" textLength="3.5" lengthAdjust="spacingAndGlyphs" >C2</text>
<text x="909.4" y="430.5" font-size="4.3" fill="#000" text-anchor="end" textLength="7.5" lengthAdjust="spacingAndGlyphs" >QD47</text>
<text x="924.8" y="433.1" font-size="4.3" fill="#1a1a9a" font-weight="bold" textLength="12.5" lengthAdjust="spacingAndGlyphs" >LPDDR_D7</text>
<path d="M924.5 433.5H938.0" stroke="#2828b0" stroke-width="0.6"/>
<path d="M910.6 432.3H939.5" stroke="#6c6c6c" stroke-width="0.65"/>
<text x="911.8" y="432.1" font-size="4.3" fill="#161616" textLength="4.5" lengthAdjust="spacingAndGlyphs" >B7</text>
<text x="909.4" y="433.4" font-size="4.3" fill="#000" text-anchor="end" textLength="7.5" lengthAdjust="spacingAndGlyphs" >QC65</text>
<path d="M910.6 438.4H956.8" stroke="#6c6c6c" stroke-width="0.65"/>
<rect x="957.0" y="436.6" width="5.2" height="3.6" fill="#fff" stroke="#8a8a8a" stroke-width="0.6" rx="1"/>
<text x="964.0" y="439.0" font-size="4.3" fill="#1a1a9a" font-weight="bold" textLength="10.5" lengthAdjust="spacingAndGlyphs" >LPDDR_DM1</text>
<path d="M964.0 439.5H974.5" stroke="#5a5ac8" stroke-width="0.35"/>
<text x="990.0" y="439.2" font-size="4.3" fill="#111" textLength="2.5" lengthAdjust="spacingAndGlyphs" >(1)</text>
<text x="911.8" y="438.2" font-size="4.3" fill="#161616" textLength="4.5" lengthAdjust="spacingAndGlyphs" >A3</text>
<text x="909.4" y="439.5" font-size="4.3" fill="#000" text-anchor="end" textLength="6.0" lengthAdjust="spacingAndGlyphs" >A8_</text>
<path d="M910.6 441.5H956.8" stroke="#6c6c6c" stroke-width="0.65"/>
<rect x="957.0" y="439.7" width="5.2" height="3.6" fill="#fff" stroke="#8a8a8a" stroke-width="0.6" rx="1"/>
<text x="964.0" y="442.1" font-size="4.3" fill="#1a1a9a" font-weight="bold" textLength="16.0" lengthAdjust="spacingAndGlyphs" >LPDDR_DQS1P</text>
<path d="M964.0 442.6H980.0" stroke="#5a5ac8" stroke-width="0.35"/>
<text x="990.0" y="442.3" font-size="4.3" fill="#111" textLength="2.5" lengthAdjust="spacingAndGlyphs" >(1)</text>
<text x="911.8" y="441.3" font-size="4.3" fill="#161616" textLength="4.5" lengthAdjust="spacingAndGlyphs" >D4</text>
<text x="909.4" y="442.6" font-size="4.3" fill="#000" text-anchor="end" textLength="8.5" lengthAdjust="spacingAndGlyphs" >SC29</text>
<path d="M910.6 444.5H956.8" stroke="#6c6c6c" stroke-width="0.65"/>
<rect x="957.0" y="442.7" width="5.2" height="3.6" fill="#fff" stroke="#8a8a8a" stroke-width="0.6" rx="1"/>
<text x="964.0" y="445.1" font-size="4.3" fill="#1a1a9a" font-weight="bold" textLength="16.0" lengthAdjust="spacingAndGlyphs" >LPDDR_DQS1N</text>
<path d="M964.0 445.6H980.0" stroke="#5a5ac8" stroke-width="0.35"/>
<text x="990.0" y="445.3" font-size="4.3" fill="#111" textLength="2.5" lengthAdjust="spacingAndGlyphs" >(1)</text>
<text x="911.8" y="444.3" font-size="4.3" fill="#161616" textLength="4.5" lengthAdjust="spacingAndGlyphs" >E9</text>
<text x="909.4" y="445.6" font-size="4.3" fill="#000" text-anchor="end" textLength="8.5" lengthAdjust="spacingAndGlyphs" >D1_5</text>
<text x="938.0" y="448.2" font-size="4.3" fill="#1a1a9a" textLength="18.0" lengthAdjust="spacingAndGlyphs" >LPDDR_DQ[23:16]</text>
<path d="M938.0 448.7H956.0" stroke="#5a5ac8" stroke-width="0.35"/>
<path d="M956 449.6 H941 L939.5 451.1 V475.4" stroke="#14142e" stroke-width="1.1" fill="none"/>
<text x="941.5" y="452.8" font-size="4.3" fill="#161616" textLength="2.5" lengthAdjust="spacingAndGlyphs" >(1)</text>
<text x="924.8" y="452.8" font-size="4.3" fill="#1a1a9a" font-weight="bold" textLength="12.5" lengthAdjust="spacingAndGlyphs" >LPDDR_D0</text>
<path d="M924.5 453.2H938.0" stroke="#2828b0" stroke-width="0.6"/>
<path d="M910.6 452.0H939.5" stroke="#6c6c6c" stroke-width="0.65"/>
<text x="911.8" y="451.8" font-size="4.3" fill="#161616" textLength="4.5" lengthAdjust="spacingAndGlyphs" >B7</text>
<text x="909.4" y="453.1" font-size="4.3" fill="#000" text-anchor="end" textLength="7.5" lengthAdjust="spacingAndGlyphs" >QA89</text>
<text x="924.8" y="455.7" font-size="4.3" fill="#1a1a9a" font-weight="bold" textLength="12.5" lengthAdjust="spacingAndGlyphs" >LPDDR_D1</text>
<path d="M924.5 456.1H938.0" stroke="#2828b0" stroke-width="0.6"/>
<path d="M910.6 454.9H939.5" stroke="#6c6c6c" stroke-width="0.65"/>
<text x="911.8" y="454.7" font-size="4.3" fill="#161616" textLength="4.5" lengthAdjust="spacingAndGlyphs" >G2</text>
<text x="909.4" y="456.0" font-size="4.3" fill="#000" text-anchor="end" textLength="7.5" lengthAdjust="spacingAndGlyphs" >VD28</text>
<text x="924.8" y="458.6" font-size="4.3" fill="#1a1a9a" font-weight="bold" textLength="12.5" lengthAdjust="spacingAndGlyphs" >LPDDR_D2</text>
<path d="M924.5 459.0H938.0" stroke="#2828b0" stroke-width="0.6"/>
<path d="M910.6 457.8H939.5" stroke="#6c6c6c" stroke-width="0.65"/>
<text x="911.8" y="457.6" font-size="4.3" fill="#161616" textLength="4.5" lengthAdjust="spacingAndGlyphs" >H1</text>
<text x="909.4" y="458.9" font-size="4.3" fill="#000" text-anchor="end" textLength="7.5" lengthAdjust="spacingAndGlyphs" >VD8_</text>
<text x="924.8" y="461.5" font-size="4.3" fill="#1a1a9a" font-weight="bold" textLength="12.5" lengthAdjust="spacingAndGlyphs" >LPDDR_D3</text>
<path d="M924.5 461.9H938.0" stroke="#2828b0" stroke-width="0.6"/>
<path d="M910.6 460.7H939.5" stroke="#6c6c6c" stroke-width="0.65"/>
<text x="911.8" y="460.5" font-size="4.3" fill="#161616" textLength="4.5" lengthAdjust="spacingAndGlyphs" >H1</text>
<text x="909.4" y="461.8" font-size="4.3" fill="#000" text-anchor="end" textLength="7.5" lengthAdjust="spacingAndGlyphs" >QD54</text>
<text x="924.8" y="464.4" font-size="4.3" fill="#1a1a9a" font-weight="bold" textLength="12.5" lengthAdjust="spacingAndGlyphs" >LPDDR_D4</text>
<path d="M924.5 464.8H938.0" stroke="#2828b0" stroke-width="0.6"/>
<path d="M910.6 463.6H939.5" stroke="#6c6c6c" stroke-width="0.65"/>
<text x="911.8" y="463.4" font-size="4.3" fill="#161616" textLength="3.5" lengthAdjust="spacingAndGlyphs" >C2</text>
<text x="909.4" y="464.7" font-size="4.3" fill="#000" text-anchor="end" textLength="7.5" lengthAdjust="spacingAndGlyphs" >0D_2</text>
<text x="924.8" y="467.4" font-size="4.3" fill="#1a1a9a" font-weight="bold" textLength="12.5" lengthAdjust="spacingAndGlyphs" >LPDDR_D5</text>
<path d="M924.5 467.8H938.0" stroke="#2828b0" stroke-width="0.6"/>
<path d="M910.6 466.6H939.5" stroke="#6c6c6c" stroke-width="0.65"/>
<text x="911.8" y="466.4" font-size="4.3" fill="#161616" textLength="3.5" lengthAdjust="spacingAndGlyphs" >A3</text>
<text x="909.4" y="467.7" font-size="4.3" fill="#000" text-anchor="end" textLength="7.5" lengthAdjust="spacingAndGlyphs" >QV64</text>
<text x="924.8" y="470.3" font-size="4.3" fill="#1a1a9a" font-weight="bold" textLength="12.5" lengthAdjust="spacingAndGlyphs" >LPDDR_D6</text>
<path d="M924.5 470.7H938.0" stroke="#2828b0" stroke-width="0.6"/>
<path d="M910.6 469.5H939.5" stroke="#6c6c6c" stroke-width="0.65"/>
<text x="911.8" y="469.3" font-size="4.3" fill="#161616" textLength="4.5" lengthAdjust="spacingAndGlyphs" >E9</text>
<text x="909.4" y="470.6" font-size="4.3" fill="#000" text-anchor="end" textLength="7.5" lengthAdjust="spacingAndGlyphs" >DD36</text>
<text x="924.8" y="473.2" font-size="4.3" fill="#1a1a9a" font-weight="bold" textLength="12.5" lengthAdjust="spacingAndGlyphs" >LPDDR_D7</text>
<path d="M924.5 473.6H938.0" stroke="#2828b0" stroke-width="0.6"/>
<path d="M910.6 472.4H939.5" stroke="#6c6c6c" stroke-width="0.65"/>
<text x="911.8" y="472.2" font-size="4.3" fill="#161616" textLength="4.5" lengthAdjust="spacingAndGlyphs" >D4</text>
<text x="909.4" y="473.5" font-size="4.3" fill="#000" text-anchor="end" textLength="7.5" lengthAdjust="spacingAndGlyphs" >SQ22</text>
<path d="M910.6 478.5H956.8" stroke="#6c6c6c" stroke-width="0.65"/>
<rect x="957.0" y="476.7" width="5.2" height="3.6" fill="#fff" stroke="#8a8a8a" stroke-width="0.6" rx="1"/>
<text x="964.0" y="479.1" font-size="4.3" fill="#1a1a9a" font-weight="bold" textLength="10.5" lengthAdjust="spacingAndGlyphs" >LPDDR_DM2</text>
<path d="M964.0 479.6H974.5" stroke="#5a5ac8" stroke-width="0.35"/>
<text x="990.0" y="479.3" font-size="4.3" fill="#111" textLength="2.5" lengthAdjust="spacingAndGlyphs" >(1)</text>
<text x="911.8" y="478.3" font-size="4.3" fill="#161616" textLength="4.5" lengthAdjust="spacingAndGlyphs" >E9</text>
<text x="909.4" y="479.6" font-size="4.3" fill="#000" text-anchor="end" textLength="6.0" lengthAdjust="spacingAndGlyphs" >S75</text>
<path d="M910.6 481.6H956.8" stroke="#6c6c6c" stroke-width="0.65"/>
<rect x="957.0" y="479.8" width="5.2" height="3.6" fill="#fff" stroke="#8a8a8a" stroke-width="0.6" rx="1"/>
<text x="964.0" y="482.2" font-size="4.3" fill="#1a1a9a" font-weight="bold" textLength="16.0" lengthAdjust="spacingAndGlyphs" >LPDDR_DQS2P</text>
<path d="M964.0 482.7H980.0" stroke="#5a5ac8" stroke-width="0.35"/>
<text x="990.0" y="482.4" font-size="4.3" fill="#111" textLength="2.5" lengthAdjust="spacingAndGlyphs" >(1)</text>
<text x="911.8" y="481.4" font-size="4.3" fill="#161616" textLength="3.5" lengthAdjust="spacingAndGlyphs" >H1</text>
<text x="909.4" y="482.7" font-size="4.3" fill="#000" text-anchor="end" textLength="8.5" lengthAdjust="spacingAndGlyphs" >1Q28</text>
<path d="M910.6 484.6H956.8" stroke="#6c6c6c" stroke-width="0.65"/>
<rect x="957.0" y="482.8" width="5.2" height="3.6" fill="#fff" stroke="#8a8a8a" stroke-width="0.6" rx="1"/>
<text x="964.0" y="485.2" font-size="4.3" fill="#1a1a9a" font-weight="bold" textLength="16.0" lengthAdjust="spacingAndGlyphs" >LPDDR_DQS2N</text>
<path d="M964.0 485.7H980.0" stroke="#5a5ac8" stroke-width="0.35"/>
<text x="990.0" y="485.4" font-size="4.3" fill="#111" textLength="2.5" lengthAdjust="spacingAndGlyphs" >(1)</text>
<text x="911.8" y="484.4" font-size="4.3" fill="#161616" textLength="3.5" lengthAdjust="spacingAndGlyphs" >E9</text>
<text x="909.4" y="485.7" font-size="4.3" fill="#000" text-anchor="end" textLength="8.5" lengthAdjust="spacingAndGlyphs" >VQ98</text>
<text x="938.0" y="488.4" font-size="4.3" fill="#1a1a9a" textLength="18.0" lengthAdjust="spacingAndGlyphs" >LPDDR_DQ[31:24]</text>
<path d="M938.0 488.9H956.0" stroke="#5a5ac8" stroke-width="0.35"/>
<path d="M956 489.8 H941 L939.5 491.3 V515.6" stroke="#14142e" stroke-width="1.1" fill="none"/>
<text x="941.5" y="493.0" font-size="4.3" fill="#161616" textLength="2.5" lengthAdjust="spacingAndGlyphs" >(1)</text>
<text x="924.8" y="493.0" font-size="4.3" fill="#1a1a9a" font-weight="bold" textLength="12.5" lengthAdjust="spacingAndGlyphs" >LPDDR_D0</text>
<path d="M924.5 493.4H938.0" stroke="#2828b0" stroke-width="0.6"/>
<path d="M910.6 492.2H939.5" stroke="#6c6c6c" stroke-width="0.65"/>
<text x="911.8" y="492.0" font-size="4.3" fill="#161616" textLength="4.5" lengthAdjust="spacingAndGlyphs" >B7</text>
<text x="909.4" y="493.3" font-size="4.3" fill="#000" text-anchor="end" textLength="7.5" lengthAdjust="spacingAndGlyphs" >QA75</text>
<text x="924.8" y="495.9" font-size="4.3" fill="#1a1a9a" font-weight="bold" textLength="12.5" lengthAdjust="spacingAndGlyphs" >LPDDR_D1</text>
<path d="M924.5 496.3H938.0" stroke="#2828b0" stroke-width="0.6"/>
<path d="M910.6 495.1H939.5" stroke="#6c6c6c" stroke-width="0.65"/>
<text x="911.8" y="494.9" font-size="4.3" fill="#161616" textLength="3.5" lengthAdjust="spacingAndGlyphs" >H1</text>
<text x="909.4" y="496.2" font-size="4.3" fill="#000" text-anchor="end" textLength="7.5" lengthAdjust="spacingAndGlyphs" >CA78</text>
<text x="924.8" y="498.8" font-size="4.3" fill="#1a1a9a" font-weight="bold" textLength="12.5" lengthAdjust="spacingAndGlyphs" >LPDDR_D2</text>
<path d="M924.5 499.2H938.0" stroke="#2828b0" stroke-width="0.6"/>
<path d="M910.6 498.0H939.5" stroke="#6c6c6c" stroke-width="0.65"/>
<text x="911.8" y="497.8" font-size="4.3" fill="#161616" textLength="3.5" lengthAdjust="spacingAndGlyphs" >D4</text>
<text x="909.4" y="499.1" font-size="4.3" fill="#000" text-anchor="end" textLength="7.5" lengthAdjust="spacingAndGlyphs" >S135</text>
<text x="924.8" y="501.7" font-size="4.3" fill="#1a1a9a" font-weight="bold" textLength="12.5" lengthAdjust="spacingAndGlyphs" >LPDDR_D3</text>
<path d="M924.5 502.1H938.0" stroke="#2828b0" stroke-width="0.6"/>
<path d="M910.6 500.9H939.5" stroke="#6c6c6c" stroke-width="0.65"/>
<text x="911.8" y="500.7" font-size="4.3" fill="#161616" textLength="3.5" lengthAdjust="spacingAndGlyphs" >H1</text>
<text x="909.4" y="502.0" font-size="4.3" fill="#000" text-anchor="end" textLength="7.5" lengthAdjust="spacingAndGlyphs" >SQ59</text>
<text x="924.8" y="504.6" font-size="4.3" fill="#1a1a9a" font-weight="bold" textLength="12.5" lengthAdjust="spacingAndGlyphs" >LPDDR_D4</text>
<path d="M924.5 505.0H938.0" stroke="#2828b0" stroke-width="0.6"/>
<path d="M910.6 503.8H939.5" stroke="#6c6c6c" stroke-width="0.65"/>
<text x="911.8" y="503.6" font-size="4.3" fill="#161616" textLength="4.5" lengthAdjust="spacingAndGlyphs" >D4</text>
<text x="909.4" y="504.9" font-size="4.3" fill="#000" text-anchor="end" textLength="7.5" lengthAdjust="spacingAndGlyphs" >SD94</text>
<text x="924.8" y="507.6" font-size="4.3" fill="#1a1a9a" font-weight="bold" textLength="12.5" lengthAdjust="spacingAndGlyphs" >LPDDR_D5</text>
<path d="M924.5 507.9H938.0" stroke="#2828b0" stroke-width="0.6"/>
<path d="M910.6 506.8H939.5" stroke="#6c6c6c" stroke-width="0.65"/>
<text x="911.8" y="506.6" font-size="4.3" fill="#161616" textLength="4.5" lengthAdjust="spacingAndGlyphs" >D4</text>
<text x="909.4" y="507.9" font-size="4.3" fill="#000" text-anchor="end" textLength="7.5" lengthAdjust="spacingAndGlyphs" >AV48</text>
<text x="924.8" y="510.5" font-size="4.3" fill="#1a1a9a" font-weight="bold" textLength="12.5" lengthAdjust="spacingAndGlyphs" >LPDDR_D6</text>
<path d="M924.5 510.9H938.0" stroke="#2828b0" stroke-width="0.6"/>
<path d="M910.6 509.7H939.5" stroke="#6c6c6c" stroke-width="0.65"/>
<text x="911.8" y="509.5" font-size="4.3" fill="#161616" textLength="3.5" lengthAdjust="spacingAndGlyphs" >A3</text>
<text x="909.4" y="510.8" font-size="4.3" fill="#000" text-anchor="end" textLength="7.5" lengthAdjust="spacingAndGlyphs" >VD82</text>
<text x="924.8" y="513.4" font-size="4.3" fill="#1a1a9a" font-weight="bold" textLength="12.5" lengthAdjust="spacingAndGlyphs" >LPDDR_D7</text>
<path d="M924.5 513.8H938.0" stroke="#2828b0" stroke-width="0.6"/>
<path d="M910.6 512.6H939.5" stroke="#6c6c6c" stroke-width="0.65"/>
<text x="911.8" y="512.4" font-size="4.3" fill="#161616" textLength="3.5" lengthAdjust="spacingAndGlyphs" >A3</text>
<text x="909.4" y="513.7" font-size="4.3" fill="#000" text-anchor="end" textLength="7.5" lengthAdjust="spacingAndGlyphs" >A073</text>
<path d="M910.6 518.7H956.8" stroke="#6c6c6c" stroke-width="0.65"/>
<rect x="957.0" y="516.9" width="5.2" height="3.6" fill="#fff" stroke="#8a8a8a" stroke-width="0.6" rx="1"/>
<text x="964.0" y="519.3" font-size="4.3" fill="#1a1a9a" font-weight="bold" textLength="10.5" lengthAdjust="spacingAndGlyphs" >LPDDR_DM3</text>
<path d="M964.0 519.8H974.5" stroke="#5a5ac8" stroke-width="0.35"/>
<text x="990.0" y="519.5" font-size="4.3" fill="#111" textLength="2.5" lengthAdjust="spacingAndGlyphs" >(1)</text>
<text x="911.8" y="518.5" font-size="4.3" fill="#161616" textLength="3.5" lengthAdjust="spacingAndGlyphs" >B7</text>
<text x="909.4" y="519.8" font-size="4.3" fill="#000" text-anchor="end" textLength="6.0" lengthAdjust="spacingAndGlyphs" >C54</text>
<path d="M910.6 521.8H956.8" stroke="#6c6c6c" stroke-width="0.65"/>
<rect x="957.0" y="520.0" width="5.2" height="3.6" fill="#fff" stroke="#8a8a8a" stroke-width="0.6" rx="1"/>
<text x="964.0" y="522.4" font-size="4.3" fill="#1a1a9a" font-weight="bold" textLength="16.0" lengthAdjust="spacingAndGlyphs" >LPDDR_DQS3P</text>
<path d="M964.0 522.9H980.0" stroke="#5a5ac8" stroke-width="0.35"/>
<text x="990.0" y="522.6" font-size="4.3" fill="#111" textLength="2.5" lengthAdjust="spacingAndGlyphs" >(1)</text>
<text x="911.8" y="521.6" font-size="4.3" fill="#161616" textLength="3.5" lengthAdjust="spacingAndGlyphs" >H1</text>
<text x="909.4" y="522.9" font-size="4.3" fill="#000" text-anchor="end" textLength="8.5" lengthAdjust="spacingAndGlyphs" >SA77</text>
<path d="M910.6 524.8H956.8" stroke="#6c6c6c" stroke-width="0.65"/>
<rect x="957.0" y="523.0" width="5.2" height="3.6" fill="#fff" stroke="#8a8a8a" stroke-width="0.6" rx="1"/>
<text x="964.0" y="525.4" font-size="4.3" fill="#1a1a9a" font-weight="bold" textLength="16.0" lengthAdjust="spacingAndGlyphs" >LPDDR_DQS3N</text>
<path d="M964.0 525.9H980.0" stroke="#5a5ac8" stroke-width="0.35"/>
<text x="990.0" y="525.6" font-size="4.3" fill="#111" textLength="2.5" lengthAdjust="spacingAndGlyphs" >(1)</text>
<text x="911.8" y="524.6" font-size="4.3" fill="#161616" textLength="3.5" lengthAdjust="spacingAndGlyphs" >H1</text>
<text x="909.4" y="525.9" font-size="4.3" fill="#000" text-anchor="end" textLength="8.5" lengthAdjust="spacingAndGlyphs" >DV36</text>
<rect x="925.0" y="535.0" width="33.0" height="4.6" fill="#ffffee" stroke="#ecec98" stroke-width="0.4" />
<path d="M910.6 538.4H957.0" stroke="#6c6c6c" stroke-width="0.65"/>
<text x="928.0" y="537.9" font-size="3.7" fill="#161616" textLength="8.0" lengthAdjust="spacingAndGlyphs" >R1417</text>
<path d="M937.0 538.4 l.8 1.2 l.9 -2 l.9 2 l.9 -2 l.8 1.2" stroke="#6c6c6c" stroke-width="0.4" fill="none"/>
<text x="942.0" y="537.9" font-size="3.7" fill="#161616" textLength="10.5" lengthAdjust="spacingAndGlyphs" >100_NC</text>
<text x="911.8" y="538.2" font-size="4.3" fill="#161616" textLength="4.5" lengthAdjust="spacingAndGlyphs" >B7</text>
<text x="909.4" y="539.5" font-size="4.3" fill="#000" text-anchor="end" textLength="5.0" lengthAdjust="spacingAndGlyphs" >83</text>
<path d="M957 535.9 V539.4" stroke="#cccc70" stroke-width="0.5" fill="none"/>
<rect x="925.0" y="541.2" width="33.0" height="4.6" fill="#ffffee" stroke="#ecec98" stroke-width="0.4" />
<path d="M910.6 544.6H957.0" stroke="#6c6c6c" stroke-width="0.65"/>
<text x="928.0" y="544.1" font-size="3.7" fill="#161616" textLength="8.0" lengthAdjust="spacingAndGlyphs" >R1417</text>
<path d="M937.0 544.6 l.8 1.2 l.9 -2 l.9 2 l.9 -2 l.8 1.2" stroke="#6c6c6c" stroke-width="0.4" fill="none"/>
<text x="942.0" y="544.1" font-size="3.7" fill="#161616" textLength="10.5" lengthAdjust="spacingAndGlyphs" >100_NC</text>
<text x="911.8" y="544.4" font-size="4.3" fill="#161616" textLength="4.5" lengthAdjust="spacingAndGlyphs" >D4</text>
<text x="909.4" y="545.7" font-size="4.3" fill="#000" text-anchor="end" textLength="5.0" lengthAdjust="spacingAndGlyphs" >76</text>
<path d="M957 542.1 V545.6" stroke="#cccc70" stroke-width="0.5" fill="none"/>
<text x="911.8" y="549.8" font-size="4.3" fill="#161616" textLength="3.5" lengthAdjust="spacingAndGlyphs" >G2</text>
<text x="909.4" y="551.1" font-size="4.3" fill="#000" text-anchor="end" textLength="4.5" lengthAdjust="spacingAndGlyphs" >29</text>
<text x="911.8" y="555.8" font-size="4.3" fill="#161616" textLength="4.5" lengthAdjust="spacingAndGlyphs" >D4</text>
<text x="909.4" y="557.1" font-size="4.3" fill="#000" text-anchor="end" textLength="10.0" lengthAdjust="spacingAndGlyphs" >10Q77</text>
<text x="911.8" y="561.3" font-size="4.3" fill="#161616" textLength="3.5" lengthAdjust="spacingAndGlyphs" >H1</text>
<text x="909.4" y="562.6" font-size="4.3" fill="#000" text-anchor="end" textLength="11.0" lengthAdjust="spacingAndGlyphs" >AQA28</text>
<path d="M910.6 556 H925 V582.3" stroke="#6c6c6c" stroke-width="0.7" fill="none"/>
<path d="M910.6 561.5H925.0" stroke="#6c6c6c" stroke-width="0.65"/>
<rect x="925.0" y="559.5" width="33.0" height="25.0" fill="#ffffee" stroke="#ecec98" stroke-width="0.4" />
<path d="M925.0 563.7H957.0" stroke="#6c6c6c" stroke-width="0.65"/>
<text x="927.0" y="563.2" font-size="3.7" fill="#161616" textLength="8.0" lengthAdjust="spacingAndGlyphs" >C1400</text>
<path d="M936.0 563.7 l.8 1.2 l.9 -2 l.9 2 l.9 -2 l.8 1.2" stroke="#6c6c6c" stroke-width="0.4" fill="none"/>
<text x="941.0" y="563.2" font-size="3.7" fill="#161616" textLength="10.5" lengthAdjust="spacingAndGlyphs" >100_NC</text>
<text x="938.5" y="567.0" font-size="4.3" fill="#161616" textLength="2.5" lengthAdjust="spacingAndGlyphs" >1/</text>
<path d="M925.0 569.5H957.0" stroke="#6c6c6c" stroke-width="0.65"/>
<text x="927.0" y="569.0" font-size="3.7" fill="#161616" textLength="8.0" lengthAdjust="spacingAndGlyphs" >C1410</text>
<path d="M936.0 569.5 l.8 1.2 l.9 -2 l.9 2 l.9 -2 l.8 1.2" stroke="#6c6c6c" stroke-width="0.4" fill="none"/>
<text x="941.0" y="569.0" font-size="3.7" fill="#161616" textLength="10.5" lengthAdjust="spacingAndGlyphs" >100_NC</text>
<text x="938.5" y="572.8" font-size="4.3" fill="#161616" textLength="2.5" lengthAdjust="spacingAndGlyphs" >1/</text>
<path d="M925.0 575.2H957.0" stroke="#6c6c6c" stroke-width="0.65"/>
<text x="927.0" y="574.7" font-size="3.7" fill="#161616" textLength="8.0" lengthAdjust="spacingAndGlyphs" >R1412</text>
<path d="M936.0 575.2 l.8 1.2 l.9 -2 l.9 2 l.9 -2 l.8 1.2" stroke="#6c6c6c" stroke-width="0.4" fill="none"/>
<text x="941.0" y="574.7" font-size="3.7" fill="#161616" textLength="10.5" lengthAdjust="spacingAndGlyphs" >NC</text>
<path d="M925.0 581.6H957.0" stroke="#6c6c6c" stroke-width="0.65"/>
<text x="927.0" y="581.1" font-size="3.7" fill="#161616" textLength="8.0" lengthAdjust="spacingAndGlyphs" >R1413</text>
<path d="M936.0 581.6 l.8 1.2 l.9 -2 l.9 2 l.9 -2 l.8 1.2" stroke="#6c6c6c" stroke-width="0.4" fill="none"/>
<text x="941.0" y="581.1" font-size="3.7" fill="#161616" textLength="10.5" lengthAdjust="spacingAndGlyphs" >NC</text>
<path d="M957.5 566.0V578.0" stroke="#aaa" stroke-width="0.5"/>
<rect x="957.0" y="560.5" width="5.2" height="3.6" fill="#fff" stroke="#8a8a8a" stroke-width="0.6" rx="1"/>
<rect x="957.0" y="563.5" width="5.2" height="3.6" fill="#fff" stroke="#8a8a8a" stroke-width="0.6" rx="1"/>
<rect x="957.0" y="579.8" width="5.2" height="3.6" fill="#fff" stroke="#8a8a8a" stroke-width="0.6" rx="1"/>
<text x="964.0" y="562.2" font-size="4.3" fill="#1a1a9a" font-weight="bold" textLength="9.0" lengthAdjust="spacingAndGlyphs" >VREF</text>
<path d="M964.0 562.7H973.0" stroke="#5a5ac8" stroke-width="0.35"/>
<text x="964.0" y="565.4" font-size="4.3" fill="#1a1a9a" font-weight="bold" textLength="13.5" lengthAdjust="spacingAndGlyphs" >VDDQ_MEM</text>
<path d="M964.0 565.9H977.5" stroke="#5a5ac8" stroke-width="0.35"/>
<text x="964.0" y="582.4" font-size="4.3" fill="#1a1a9a" font-weight="bold" textLength="13.5" lengthAdjust="spacingAndGlyphs" >VDDQ_MEM</text>
<path d="M964.0 582.9H977.5" stroke="#5a5ac8" stroke-width="0.35"/>
<text x="988.0" y="562.5" font-size="4.3" fill="#111" textLength="3.0" lengthAdjust="spacingAndGlyphs" >(3)</text>
<text x="986.5" y="565.5" font-size="4.3" fill="#111" textLength="5.0" lengthAdjust="spacingAndGlyphs" >(3,4)</text>
<text x="986.0" y="582.4" font-size="4.3" fill="#111" textLength="6.0" lengthAdjust="spacingAndGlyphs" >(3,4)</text>
<rect x="1072.4" y="198.7" width="134" height="296" fill="#fffff4"/>
<rect x="1082.6" y="203.7" width="115.40000000000009" height="286.8" fill="#fff" stroke="#8a8a72" stroke-width=".8"/>
<path d="M1072.6 205.0V490.0" stroke="#f4f4b8" stroke-width="0.6"/>
<path d="M1206.5 205.0V490.0" stroke="#f6f6c8" stroke-width="0.6"/>
<text x="1140.0" y="341.0" font-size="3.7" fill="#3a3a3a" text-anchor="middle" textLength="12.0" lengthAdjust="spacingAndGlyphs" >U1000-0</text>
<text x="1140.0" y="345.8" font-size="3.7" fill="#3a3a3a" text-anchor="middle" textLength="26.0" lengthAdjust="spacingAndGlyphs" >S5E_7570_ENGINEER</text>
<text x="1039.0" y="214.0" font-size="4.3" fill="#1a1a9a" font-weight="bold" textLength="17.0" lengthAdjust="spacingAndGlyphs" >LPDDR_DQ[7:0]</text>
<path d="M1039.0 214.5H1056.0" stroke="#5a5ac8" stroke-width="0.35"/>
<path d="M1039 215.5 H1052.6 L1054.2 217.1 V243.5" stroke="#14142e" stroke-width="1.1" fill="none"/>
<text x="1039.5" y="218.5" font-size="4.3" fill="#161616" textLength="3.0" lengthAdjust="spacingAndGlyphs" >(1)</text>
<text x="1059.0" y="221.2" font-size="4.3" fill="#1a1a9a" font-weight="bold" textLength="10.5" lengthAdjust="spacingAndGlyphs" >LPDDR0</text>
<path d="M1058.5 221.6H1070.0" stroke="#2828b0" stroke-width="0.6"/>
<path d="M1054.2 220.5H1082.6" stroke="#6c6c6c" stroke-width="0.65"/>
<text x="1081.2" y="220.2" font-size="4.3" fill="#161616" text-anchor="end" textLength="4.5" lengthAdjust="spacingAndGlyphs" >Y14</text>
<text x="1084.2" y="222.1" font-size="4.3" fill="#000" textLength="8.5" lengthAdjust="spacingAndGlyphs" >XMDQ_16</text>
<text x="1059.0" y="224.1" font-size="4.3" fill="#1a1a9a" font-weight="bold" textLength="10.5" lengthAdjust="spacingAndGlyphs" >LPDDR1</text>
<path d="M1058.5 224.5H1070.0" stroke="#2828b0" stroke-width="0.6"/>
<path d="M1054.2 223.4H1082.6" stroke="#6c6c6c" stroke-width="0.65"/>
<text x="1081.2" y="223.1" font-size="4.3" fill="#161616" text-anchor="end" textLength="4.5" lengthAdjust="spacingAndGlyphs" >T11</text>
<text x="1084.2" y="225.0" font-size="4.3" fill="#000" textLength="8.5" lengthAdjust="spacingAndGlyphs" >XMDM_21</text>
<text x="1059.0" y="227.0" font-size="4.3" fill="#1a1a9a" font-weight="bold" textLength="10.5" lengthAdjust="spacingAndGlyphs" >LPDDR2</text>
<path d="M1058.5 227.4H1070.0" stroke="#2828b0" stroke-width="0.6"/>
<path d="M1054.2 226.3H1082.6" stroke="#6c6c6c" stroke-width="0.65"/>
<text x="1081.2" y="226.0" font-size="4.3" fill="#161616" text-anchor="end" textLength="5.5" lengthAdjust="spacingAndGlyphs" >W12</text>
<text x="1084.2" y="227.9" font-size="4.3" fill="#000" textLength="9.5" lengthAdjust="spacingAndGlyphs" >XMDM_2</text>
<text x="1059.0" y="229.9" font-size="4.3" fill="#1a1a9a" font-weight="bold" textLength="10.5" lengthAdjust="spacingAndGlyphs" >LPDDR3</text>
<path d="M1058.5 230.3H1070.0" stroke="#2828b0" stroke-width="0.6"/>
<path d="M1054.2 229.2H1082.6" stroke="#6c6c6c" stroke-width="0.65"/>
<text x="1081.2" y="228.9" font-size="4.3" fill="#161616" text-anchor="end" textLength="5.5" lengthAdjust="spacingAndGlyphs" >T11</text>
<text x="1084.2" y="230.8" font-size="4.3" fill="#000" textLength="9.5" lengthAdjust="spacingAndGlyphs" >XMCA_19</text>
<text x="1059.0" y="232.8" font-size="4.3" fill="#1a1a9a" font-weight="bold" textLength="10.5" lengthAdjust="spacingAndGlyphs" >LPDDR4</text>
<path d="M1058.5 233.2H1070.0" stroke="#2828b0" stroke-width="0.6"/>
<path d="M1054.2 232.1H1082.6" stroke="#6c6c6c" stroke-width="0.65"/>
<text x="1081.2" y="231.8" font-size="4.3" fill="#161616" text-anchor="end" textLength="4.5" lengthAdjust="spacingAndGlyphs" >T11</text>
<text x="1084.2" y="233.7" font-size="4.3" fill="#000" textLength="8.5" lengthAdjust="spacingAndGlyphs" >XMDQ_14</text>
<text x="1059.0" y="235.8" font-size="4.3" fill="#1a1a9a" font-weight="bold" textLength="10.5" lengthAdjust="spacingAndGlyphs" >LPDDR5</text>
<path d="M1058.5 236.2H1070.0" stroke="#2828b0" stroke-width="0.6"/>
<path d="M1054.2 235.1H1082.6" stroke="#6c6c6c" stroke-width="0.65"/>
<text x="1081.2" y="234.8" font-size="4.3" fill="#161616" text-anchor="end" textLength="5.5" lengthAdjust="spacingAndGlyphs" >Y14</text>
<text x="1084.2" y="236.7" font-size="4.3" fill="#000" textLength="8.5" lengthAdjust="spacingAndGlyphs" >XMCA_16</text>
<text x="1059.0" y="238.7" font-size="4.3" fill="#1a1a9a" font-weight="bold" textLength="10.5" lengthAdjust="spacingAndGlyphs" >LPDDR6</text>
<path d="M1058.5 239.1H1070.0" stroke="#2828b0" stroke-width="0.6"/>
<path d="M1054.2 238.0H1082.6" stroke="#6c6c6c" stroke-width="0.65"/>
<text x="1081.2" y="237.7" font-size="4.3" fill="#161616" text-anchor="end" textLength="4.5" lengthAdjust="spacingAndGlyphs" >Y14</text>
<text x="1084.2" y="239.6" font-size="4.3" fill="#000" textLength="9.5" lengthAdjust="spacingAndGlyphs" >XMCA_11</text>
<text x="1059.0" y="241.6" font-size="4.3" fill="#1a1a9a" font-weight="bold" textLength="10.5" lengthAdjust="spacingAndGlyphs" >LPDDR7</text>
<path d="M1058.5 242.0H1070.0" stroke="#2828b0" stroke-width="0.6"/>
<path d="M1054.2 240.9H1082.6" stroke="#6c6c6c" stroke-width="0.65"/>
<text x="1081.2" y="240.6" font-size="4.3" fill="#161616" text-anchor="end" textLength="5.5" lengthAdjust="spacingAndGlyphs" >T11</text>
<text x="1084.2" y="242.5" font-size="4.3" fill="#000" textLength="8.5" lengthAdjust="spacingAndGlyphs" >XMDM_9</text>
<text x="1000.3" y="248.8" font-size="4.3" fill="#111" textLength="3.0" lengthAdjust="spacingAndGlyphs" >(1)</text>
<text x="1018.5" y="249.6" font-size="4.3" fill="#1a1a9a" font-weight="bold" textLength="11.0" lengthAdjust="spacingAndGlyphs" >LPDDR_DM0</text>
<path d="M1018.5 250.1H1029.5" stroke="#5a5ac8" stroke-width="0.35"/>
<rect x="1031.6" y="247.6" width="5.2" height="3.6" fill="#fff" stroke="#8a8a8a" stroke-width="0.6" rx="1"/>
<path d="M1036.8 249.4H1082.6" stroke="#777" stroke-width="0.7"/>
<text x="1081.2" y="249.1" font-size="4.3" fill="#161616" text-anchor="end" textLength="5.5" lengthAdjust="spacingAndGlyphs" >AC7</text>
<text x="1084.2" y="251.0" font-size="4.3" fill="#000" textLength="16.0" lengthAdjust="spacingAndGlyphs" >XMCA_29</text>
<text x="1000.3" y="254.4" font-size="4.3" fill="#111" textLength="3.0" lengthAdjust="spacingAndGlyphs" >(1)</text>
<text x="1013.5" y="255.2" font-size="4.3" fill="#1a1a9a" font-weight="bold" textLength="16.0" lengthAdjust="spacingAndGlyphs" >LPDDR_DQS0P</text>
<path d="M1013.5 255.7H1029.5" stroke="#5a5ac8" stroke-width="0.35"/>
<rect x="1031.6" y="253.2" width="5.2" height="3.6" fill="#fff" stroke="#8a8a8a" stroke-width="0.6" rx="1"/>
<path d="M1036.8 255.0H1082.6" stroke="#777" stroke-width="0.7"/>
<text x="1081.2" y="254.7" font-size="4.3" fill="#161616" text-anchor="end" textLength="4.5" lengthAdjust="spacingAndGlyphs" >U9</text>
<text x="1084.2" y="256.6" font-size="4.3" fill="#000" textLength="13.0" lengthAdjust="spacingAndGlyphs" >XMDM_12</text>
<text x="1000.3" y="259.9" font-size="4.3" fill="#111" textLength="3.0" lengthAdjust="spacingAndGlyphs" >(1)</text>
<text x="1013.5" y="260.7" font-size="4.3" fill="#1a1a9a" font-weight="bold" textLength="16.0" lengthAdjust="spacingAndGlyphs" >LPDDR_DQS0N</text>
<path d="M1013.5 261.2H1029.5" stroke="#5a5ac8" stroke-width="0.35"/>
<rect x="1031.6" y="258.7" width="5.2" height="3.6" fill="#fff" stroke="#8a8a8a" stroke-width="0.6" rx="1"/>
<path d="M1036.8 260.5H1082.6" stroke="#777" stroke-width="0.7"/>
<text x="1081.2" y="260.2" font-size="4.3" fill="#161616" text-anchor="end" textLength="4.5" lengthAdjust="spacingAndGlyphs" >AC7</text>
<text x="1084.2" y="262.1" font-size="4.3" fill="#000" textLength="13.0" lengthAdjust="spacingAndGlyphs" >XMCA_4</text>
<text x="1039.0" y="268.0" font-size="4.3" fill="#1a1a9a" font-weight="bold" textLength="17.0" lengthAdjust="spacingAndGlyphs" >LPDDR_DQ[15:8]</text>
<path d="M1039.0 268.5H1056.0" stroke="#5a5ac8" stroke-width="0.35"/>
<path d="M1039 269.5 H1052.6 L1054.2 271.1 V295.5" stroke="#14142e" stroke-width="1.1" fill="none"/>
<text x="1039.5" y="272.5" font-size="4.3" fill="#161616" textLength="3.0" lengthAdjust="spacingAndGlyphs" >(1)</text>
<text x="1059.0" y="273.4" font-size="4.3" fill="#1a1a9a" font-weight="bold" textLength="10.5" lengthAdjust="spacingAndGlyphs" >LPDDR0</text>
<path d="M1058.5 273.8H1070.0" stroke="#2828b0" stroke-width="0.6"/>
<path d="M1054.2 272.7H1082.6" stroke="#6c6c6c" stroke-width="0.65"/>
<text x="1081.2" y="272.4" font-size="4.3" fill="#161616" text-anchor="end" textLength="5.5" lengthAdjust="spacingAndGlyphs" >AB3</text>
<text x="1084.2" y="274.3" font-size="4.3" fill="#000" textLength="10.0" lengthAdjust="spacingAndGlyphs" >XMDM_20</text>
<text x="1059.0" y="276.3" font-size="4.3" fill="#1a1a9a" font-weight="bold" textLength="10.5" lengthAdjust="spacingAndGlyphs" >LPDDR1</text>
<path d="M1058.5 276.7H1070.0" stroke="#2828b0" stroke-width="0.6"/>
<path d="M1054.2 275.6H1082.6" stroke="#6c6c6c" stroke-width="0.65"/>
<text x="1081.2" y="275.3" font-size="4.3" fill="#161616" text-anchor="end" textLength="4.5" lengthAdjust="spacingAndGlyphs" >Y14</text>
<text x="1084.2" y="277.2" font-size="4.3" fill="#000" textLength="8.5" lengthAdjust="spacingAndGlyphs" >XMDQ_16</text>
<text x="1059.0" y="279.2" font-size="4.3" fill="#1a1a9a" font-weight="bold" textLength="10.5" lengthAdjust="spacingAndGlyphs" >LPDDR2</text>
<path d="M1058.5 279.6H1070.0" stroke="#2828b0" stroke-width="0.6"/>
<path d="M1054.2 278.5H1082.6" stroke="#6c6c6c" stroke-width="0.65"/>
<text x="1081.2" y="278.2" font-size="4.3" fill="#161616" text-anchor="end" textLength="4.5" lengthAdjust="spacingAndGlyphs" >AB3</text>
<text x="1084.2" y="280.1" font-size="4.3" fill="#000" textLength="10.0" lengthAdjust="spacingAndGlyphs" >XMDQ_26</text>
<text x="1059.0" y="282.0" font-size="4.3" fill="#1a1a9a" font-weight="bold" textLength="10.5" lengthAdjust="spacingAndGlyphs" >LPDDR3</text>
<path d="M1058.5 282.4H1070.0" stroke="#2828b0" stroke-width="0.6"/>
<path d="M1054.2 281.3H1082.6" stroke="#6c6c6c" stroke-width="0.65"/>
<text x="1081.2" y="281.0" font-size="4.3" fill="#161616" text-anchor="end" textLength="5.5" lengthAdjust="spacingAndGlyphs" >T11</text>
<text x="1084.2" y="282.9" font-size="4.3" fill="#000" textLength="9.5" lengthAdjust="spacingAndGlyphs" >XMDQ_14</text>
<text x="1059.0" y="284.9" font-size="4.3" fill="#1a1a9a" font-weight="bold" textLength="10.5" lengthAdjust="spacingAndGlyphs" >LPDDR4</text>
<path d="M1058.5 285.3H1070.0" stroke="#2828b0" stroke-width="0.6"/>
<path d="M1054.2 284.2H1082.6" stroke="#6c6c6c" stroke-width="0.65"/>
<text x="1081.2" y="283.9" font-size="4.3" fill="#161616" text-anchor="end" textLength="5.5" lengthAdjust="spacingAndGlyphs" >Y14</text>
<text x="1084.2" y="285.8" font-size="4.3" fill="#000" textLength="8.5" lengthAdjust="spacingAndGlyphs" >XMDM_15</text>
<text x="1059.0" y="287.8" font-size="4.3" fill="#1a1a9a" font-weight="bold" textLength="10.5" lengthAdjust="spacingAndGlyphs" >LPDDR5</text>
<path d="M1058.5 288.2H1070.0" stroke="#2828b0" stroke-width="0.6"/>
<path d="M1054.2 287.1H1082.6" stroke="#6c6c6c" stroke-width="0.65"/>
<text x="1081.2" y="286.8" font-size="4.3" fill="#161616" text-anchor="end" textLength="4.5" lengthAdjust="spacingAndGlyphs" >U9</text>
<text x="1084.2" y="288.7" font-size="4.3" fill="#000" textLength="10.0" lengthAdjust="spacingAndGlyphs" >XMCA_18</text>
<text x="1059.0" y="290.7" font-size="4.3" fill="#1a1a9a" font-weight="bold" textLength="10.5" lengthAdjust="spacingAndGlyphs" >LPDDR6</text>
<path d="M1058.5 291.1H1070.0" stroke="#2828b0" stroke-width="0.6"/>
<path d="M1054.2 290.0H1082.6" stroke="#6c6c6c" stroke-width="0.65"/>
<text x="1081.2" y="289.7" font-size="4.3" fill="#161616" text-anchor="end" textLength="5.5" lengthAdjust="spacingAndGlyphs" >U9</text>
<text x="1084.2" y="291.6" font-size="4.3" fill="#000" textLength="9.5" lengthAdjust="spacingAndGlyphs" >XMCA_16</text>
<text x="1059.0" y="293.6" font-size="4.3" fill="#1a1a9a" font-weight="bold" textLength="10.5" lengthAdjust="spacingAndGlyphs" >LPDDR7</text>
<path d="M1058.5 294.0H1070.0" stroke="#2828b0" stroke-width="0.6"/>
<path d="M1054.2 292.9H1082.6" stroke="#6c6c6c" stroke-width="0.65"/>
<text x="1081.2" y="292.6" font-size="4.3" fill="#161616" text-anchor="end" textLength="4.5" lengthAdjust="spacingAndGlyphs" >W12</text>
<text x="1084.2" y="294.5" font-size="4.3" fill="#000" textLength="10.0" lengthAdjust="spacingAndGlyphs" >XMCA_15</text>
<text x="1000.3" y="300.1" font-size="4.3" fill="#111" textLength="3.0" lengthAdjust="spacingAndGlyphs" >(1)</text>
<text x="1018.5" y="300.9" font-size="4.3" fill="#1a1a9a" font-weight="bold" textLength="11.0" lengthAdjust="spacingAndGlyphs" >LPDDR_DM1</text>
<path d="M1018.5 301.4H1029.5" stroke="#5a5ac8" stroke-width="0.35"/>
<rect x="1031.6" y="298.9" width="5.2" height="3.6" fill="#fff" stroke="#8a8a8a" stroke-width="0.6" rx="1"/>
<path d="M1036.8 300.7H1082.6" stroke="#777" stroke-width="0.7"/>
<text x="1081.2" y="300.4" font-size="4.3" fill="#161616" text-anchor="end" textLength="4.5" lengthAdjust="spacingAndGlyphs" >AC7</text>
<text x="1084.2" y="302.3" font-size="4.3" fill="#000" textLength="12.5" lengthAdjust="spacingAndGlyphs" >XMDQ_18</text>
<text x="1000.3" y="306.0" font-size="4.3" fill="#111" textLength="3.0" lengthAdjust="spacingAndGlyphs" >(1)</text>
<text x="1013.5" y="306.8" font-size="4.3" fill="#1a1a9a" font-weight="bold" textLength="16.0" lengthAdjust="spacingAndGlyphs" >LPDDR_DQS1P</text>
<path d="M1013.5 307.3H1029.5" stroke="#5a5ac8" stroke-width="0.35"/>
<rect x="1031.6" y="304.8" width="5.2" height="3.6" fill="#fff" stroke="#8a8a8a" stroke-width="0.6" rx="1"/>
<path d="M1036.8 306.6H1082.6" stroke="#777" stroke-width="0.7"/>
<text x="1081.2" y="306.3" font-size="4.3" fill="#161616" text-anchor="end" textLength="5.5" lengthAdjust="spacingAndGlyphs" >AC7</text>
<text x="1084.2" y="308.2" font-size="4.3" fill="#000" textLength="16.0" lengthAdjust="spacingAndGlyphs" >XMDQ_25</text>
<text x="1000.3" y="311.8" font-size="4.3" fill="#111" textLength="3.0" lengthAdjust="spacingAndGlyphs" >(1)</text>
<text x="1013.5" y="312.6" font-size="4.3" fill="#1a1a9a" font-weight="bold" textLength="16.0" lengthAdjust="spacingAndGlyphs" >LPDDR_DQS1N</text>
<path d="M1013.5 313.1H1029.5" stroke="#5a5ac8" stroke-width="0.35"/>
<rect x="1031.6" y="310.6" width="5.2" height="3.6" fill="#fff" stroke="#8a8a8a" stroke-width="0.6" rx="1"/>
<path d="M1036.8 312.4H1082.6" stroke="#777" stroke-width="0.7"/>
<text x="1081.2" y="312.1" font-size="4.3" fill="#161616" text-anchor="end" textLength="4.5" lengthAdjust="spacingAndGlyphs" >AC7</text>
<text x="1084.2" y="314.0" font-size="4.3" fill="#000" textLength="13.0" lengthAdjust="spacingAndGlyphs" >XMDM_6</text>
<text x="1039.0" y="320.4" font-size="4.3" fill="#1a1a9a" font-weight="bold" textLength="17.0" lengthAdjust="spacingAndGlyphs" >LPDDR_DQ[23:16]</text>
<path d="M1039.0 320.9H1056.0" stroke="#5a5ac8" stroke-width="0.35"/>
<path d="M1039 321.9 H1052.6 L1054.2 323.5 V346.8" stroke="#14142e" stroke-width="1.1" fill="none"/>
<text x="1039.5" y="324.9" font-size="4.3" fill="#161616" textLength="3.0" lengthAdjust="spacingAndGlyphs" >(1)</text>
<text x="1059.0" y="325.0" font-size="4.3" fill="#1a1a9a" font-weight="bold" textLength="10.5" lengthAdjust="spacingAndGlyphs" >LPDDR0</text>
<path d="M1058.5 325.4H1070.0" stroke="#2828b0" stroke-width="0.6"/>
<path d="M1054.2 324.3H1082.6" stroke="#6c6c6c" stroke-width="0.65"/>
<text x="1081.2" y="324.0" font-size="4.3" fill="#161616" text-anchor="end" textLength="4.5" lengthAdjust="spacingAndGlyphs" >Y14</text>
<text x="1084.2" y="325.9" font-size="4.3" fill="#000" textLength="10.0" lengthAdjust="spacingAndGlyphs" >XMDQ_0</text>
<text x="1059.0" y="327.8" font-size="4.3" fill="#1a1a9a" font-weight="bold" textLength="10.5" lengthAdjust="spacingAndGlyphs" >LPDDR1</text>
<path d="M1058.5 328.2H1070.0" stroke="#2828b0" stroke-width="0.6"/>
<path d="M1054.2 327.1H1082.6" stroke="#6c6c6c" stroke-width="0.65"/>
<text x="1081.2" y="326.8" font-size="4.3" fill="#161616" text-anchor="end" textLength="5.5" lengthAdjust="spacingAndGlyphs" >AC7</text>
<text x="1084.2" y="328.7" font-size="4.3" fill="#000" textLength="9.5" lengthAdjust="spacingAndGlyphs" >XMCA_2</text>
<text x="1059.0" y="330.7" font-size="4.3" fill="#1a1a9a" font-weight="bold" textLength="10.5" lengthAdjust="spacingAndGlyphs" >LPDDR2</text>
<path d="M1058.5 331.1H1070.0" stroke="#2828b0" stroke-width="0.6"/>
<path d="M1054.2 330.0H1082.6" stroke="#6c6c6c" stroke-width="0.65"/>
<text x="1081.2" y="329.7" font-size="4.3" fill="#161616" text-anchor="end" textLength="4.5" lengthAdjust="spacingAndGlyphs" >AC7</text>
<text x="1084.2" y="331.6" font-size="4.3" fill="#000" textLength="9.5" lengthAdjust="spacingAndGlyphs" >XMDQ_12</text>
<text x="1059.0" y="333.5" font-size="4.3" fill="#1a1a9a" font-weight="bold" textLength="10.5" lengthAdjust="spacingAndGlyphs" >LPDDR3</text>
<path d="M1058.5 333.9H1070.0" stroke="#2828b0" stroke-width="0.6"/>
<path d="M1054.2 332.8H1082.6" stroke="#6c6c6c" stroke-width="0.65"/>
<text x="1081.2" y="332.5" font-size="4.3" fill="#161616" text-anchor="end" textLength="4.5" lengthAdjust="spacingAndGlyphs" >U9</text>
<text x="1084.2" y="334.4" font-size="4.3" fill="#000" textLength="10.0" lengthAdjust="spacingAndGlyphs" >XMDQ_23</text>
<text x="1059.0" y="336.4" font-size="4.3" fill="#1a1a9a" font-weight="bold" textLength="10.5" lengthAdjust="spacingAndGlyphs" >LPDDR4</text>
<path d="M1058.5 336.8H1070.0" stroke="#2828b0" stroke-width="0.6"/>
<path d="M1054.2 335.7H1082.6" stroke="#6c6c6c" stroke-width="0.65"/>
<text x="1081.2" y="335.4" font-size="4.3" fill="#161616" text-anchor="end" textLength="5.5" lengthAdjust="spacingAndGlyphs" >AC7</text>
<text x="1084.2" y="337.3" font-size="4.3" fill="#000" textLength="10.0" lengthAdjust="spacingAndGlyphs" >XMDM_16</text>
<text x="1059.0" y="339.2" font-size="4.3" fill="#1a1a9a" font-weight="bold" textLength="10.5" lengthAdjust="spacingAndGlyphs" >LPDDR5</text>
<path d="M1058.5 339.6H1070.0" stroke="#2828b0" stroke-width="0.6"/>
<path d="M1054.2 338.5H1082.6" stroke="#6c6c6c" stroke-width="0.65"/>
<text x="1081.2" y="338.2" font-size="4.3" fill="#161616" text-anchor="end" textLength="4.5" lengthAdjust="spacingAndGlyphs" >AB3</text>
<text x="1084.2" y="340.1" font-size="4.3" fill="#000" textLength="10.0" lengthAdjust="spacingAndGlyphs" >XMDM_22</text>
<text x="1059.0" y="342.0" font-size="4.3" fill="#1a1a9a" font-weight="bold" textLength="10.5" lengthAdjust="spacingAndGlyphs" >LPDDR6</text>
<path d="M1058.5 342.4H1070.0" stroke="#2828b0" stroke-width="0.6"/>
<path d="M1054.2 341.3H1082.6" stroke="#6c6c6c" stroke-width="0.65"/>
<text x="1081.2" y="341.0" font-size="4.3" fill="#161616" text-anchor="end" textLength="5.5" lengthAdjust="spacingAndGlyphs" >AB3</text>
<text x="1084.2" y="342.9" font-size="4.3" fill="#000" textLength="8.5" lengthAdjust="spacingAndGlyphs" >XMCA_9</text>
<text x="1059.0" y="344.9" font-size="4.3" fill="#1a1a9a" font-weight="bold" textLength="10.5" lengthAdjust="spacingAndGlyphs" >LPDDR7</text>
<path d="M1058.5 345.3H1070.0" stroke="#2828b0" stroke-width="0.6"/>
<path d="M1054.2 344.2H1082.6" stroke="#6c6c6c" stroke-width="0.65"/>
<text x="1081.2" y="343.9" font-size="4.3" fill="#161616" text-anchor="end" textLength="5.5" lengthAdjust="spacingAndGlyphs" >AC7</text>
<text x="1084.2" y="345.8" font-size="4.3" fill="#000" textLength="8.5" lengthAdjust="spacingAndGlyphs" >XMDQ_13</text>
<text x="1000.3" y="352.2" font-size="4.3" fill="#111" textLength="3.0" lengthAdjust="spacingAndGlyphs" >(1)</text>
<text x="1018.5" y="353.0" font-size="4.3" fill="#1a1a9a" font-weight="bold" textLength="11.0" lengthAdjust="spacingAndGlyphs" >LPDDR_DM2</text>
<path d="M1018.5 353.5H1029.5" stroke="#5a5ac8" stroke-width="0.35"/>
<rect x="1031.6" y="351.0" width="5.2" height="3.6" fill="#fff" stroke="#8a8a8a" stroke-width="0.6" rx="1"/>
<path d="M1036.8 352.8H1082.6" stroke="#777" stroke-width="0.7"/>
<text x="1081.2" y="352.5" font-size="4.3" fill="#161616" text-anchor="end" textLength="5.5" lengthAdjust="spacingAndGlyphs" >W12</text>
<text x="1084.2" y="354.4" font-size="4.3" fill="#000" textLength="12.5" lengthAdjust="spacingAndGlyphs" >XMDM_23</text>
<text x="1000.3" y="357.7" font-size="4.3" fill="#111" textLength="3.0" lengthAdjust="spacingAndGlyphs" >(1)</text>
<text x="1013.5" y="358.5" font-size="4.3" fill="#1a1a9a" font-weight="bold" textLength="16.0" lengthAdjust="spacingAndGlyphs" >LPDDR_DQS2P</text>
<path d="M1013.5 359.0H1029.5" stroke="#5a5ac8" stroke-width="0.35"/>
<rect x="1031.6" y="356.5" width="5.2" height="3.6" fill="#fff" stroke="#8a8a8a" stroke-width="0.6" rx="1"/>
<path d="M1036.8 358.3H1082.6" stroke="#777" stroke-width="0.7"/>
<text x="1081.2" y="358.0" font-size="4.3" fill="#161616" text-anchor="end" textLength="5.5" lengthAdjust="spacingAndGlyphs" >U9</text>
<text x="1084.2" y="359.9" font-size="4.3" fill="#000" textLength="12.5" lengthAdjust="spacingAndGlyphs" >XMDQ_13</text>
<text x="1000.3" y="363.2" font-size="4.3" fill="#111" textLength="3.0" lengthAdjust="spacingAndGlyphs" >(1)</text>
<text x="1013.5" y="364.0" font-size="4.3" fill="#1a1a9a" font-weight="bold" textLength="16.0" lengthAdjust="spacingAndGlyphs" >LPDDR_DQS2N</text>
<path d="M1013.5 364.5H1029.5" stroke="#5a5ac8" stroke-width="0.35"/>
<rect x="1031.6" y="362.0" width="5.2" height="3.6" fill="#fff" stroke="#8a8a8a" stroke-width="0.6" rx="1"/>
<path d="M1036.8 363.8H1082.6" stroke="#777" stroke-width="0.7"/>
<text x="1081.2" y="363.5" font-size="4.3" fill="#161616" text-anchor="end" textLength="5.5" lengthAdjust="spacingAndGlyphs" >Y14</text>
<text x="1084.2" y="365.4" font-size="4.3" fill="#000" textLength="12.5" lengthAdjust="spacingAndGlyphs" >XMDQ_26</text>
<text x="1039.0" y="370.7" font-size="4.3" fill="#1a1a9a" font-weight="bold" textLength="17.0" lengthAdjust="spacingAndGlyphs" >LPDDR_DQ[31:24]</text>
<path d="M1039.0 371.2H1056.0" stroke="#5a5ac8" stroke-width="0.35"/>
<path d="M1039 372.2 H1052.6 L1054.2 373.8 V398.5" stroke="#14142e" stroke-width="1.1" fill="none"/>
<text x="1039.5" y="375.2" font-size="4.3" fill="#161616" textLength="3.0" lengthAdjust="spacingAndGlyphs" >(1)</text>
<text x="1059.0" y="376.4" font-size="4.3" fill="#1a1a9a" font-weight="bold" textLength="10.5" lengthAdjust="spacingAndGlyphs" >LPDDR0</text>
<path d="M1058.5 376.8H1070.0" stroke="#2828b0" stroke-width="0.6"/>
<path d="M1054.2 375.7H1082.6" stroke="#6c6c6c" stroke-width="0.65"/>
<text x="1081.2" y="375.4" font-size="4.3" fill="#161616" text-anchor="end" textLength="4.5" lengthAdjust="spacingAndGlyphs" >Y14</text>
<text x="1084.2" y="377.3" font-size="4.3" fill="#000" textLength="8.5" lengthAdjust="spacingAndGlyphs" >XMDM_5</text>
<text x="1059.0" y="379.3" font-size="4.3" fill="#1a1a9a" font-weight="bold" textLength="10.5" lengthAdjust="spacingAndGlyphs" >LPDDR1</text>
<path d="M1058.5 379.7H1070.0" stroke="#2828b0" stroke-width="0.6"/>
<path d="M1054.2 378.6H1082.6" stroke="#6c6c6c" stroke-width="0.65"/>
<text x="1081.2" y="378.3" font-size="4.3" fill="#161616" text-anchor="end" textLength="5.5" lengthAdjust="spacingAndGlyphs" >AC7</text>
<text x="1084.2" y="380.2" font-size="4.3" fill="#000" textLength="10.0" lengthAdjust="spacingAndGlyphs" >XMDM_17</text>
<text x="1059.0" y="382.2" font-size="4.3" fill="#1a1a9a" font-weight="bold" textLength="10.5" lengthAdjust="spacingAndGlyphs" >LPDDR2</text>
<path d="M1058.5 382.6H1070.0" stroke="#2828b0" stroke-width="0.6"/>
<path d="M1054.2 381.5H1082.6" stroke="#6c6c6c" stroke-width="0.65"/>
<text x="1081.2" y="381.2" font-size="4.3" fill="#161616" text-anchor="end" textLength="5.5" lengthAdjust="spacingAndGlyphs" >W12</text>
<text x="1084.2" y="383.1" font-size="4.3" fill="#000" textLength="9.5" lengthAdjust="spacingAndGlyphs" >XMCA_3</text>
<text x="1059.0" y="385.0" font-size="4.3" fill="#1a1a9a" font-weight="bold" textLength="10.5" lengthAdjust="spacingAndGlyphs" >LPDDR3</text>
<path d="M1058.5 385.4H1070.0" stroke="#2828b0" stroke-width="0.6"/>
<path d="M1054.2 384.3H1082.6" stroke="#6c6c6c" stroke-width="0.65"/>
<text x="1081.2" y="384.0" font-size="4.3" fill="#161616" text-anchor="end" textLength="5.5" lengthAdjust="spacingAndGlyphs" >T11</text>
<text x="1084.2" y="385.9" font-size="4.3" fill="#000" textLength="9.5" lengthAdjust="spacingAndGlyphs" >XMCA_26</text>
<text x="1059.0" y="387.9" font-size="4.3" fill="#1a1a9a" font-weight="bold" textLength="10.5" lengthAdjust="spacingAndGlyphs" >LPDDR4</text>
<path d="M1058.5 388.3H1070.0" stroke="#2828b0" stroke-width="0.6"/>
<path d="M1054.2 387.2H1082.6" stroke="#6c6c6c" stroke-width="0.65"/>
<text x="1081.2" y="386.9" font-size="4.3" fill="#161616" text-anchor="end" textLength="4.5" lengthAdjust="spacingAndGlyphs" >W12</text>
<text x="1084.2" y="388.8" font-size="4.3" fill="#000" textLength="8.5" lengthAdjust="spacingAndGlyphs" >XMCA_25</text>
<text x="1059.0" y="390.8" font-size="4.3" fill="#1a1a9a" font-weight="bold" textLength="10.5" lengthAdjust="spacingAndGlyphs" >LPDDR5</text>
<path d="M1058.5 391.2H1070.0" stroke="#2828b0" stroke-width="0.6"/>
<path d="M1054.2 390.1H1082.6" stroke="#6c6c6c" stroke-width="0.65"/>
<text x="1081.2" y="389.8" font-size="4.3" fill="#161616" text-anchor="end" textLength="5.5" lengthAdjust="spacingAndGlyphs" >AB3</text>
<text x="1084.2" y="391.7" font-size="4.3" fill="#000" textLength="8.5" lengthAdjust="spacingAndGlyphs" >XMDQ_27</text>
<text x="1059.0" y="393.7" font-size="4.3" fill="#1a1a9a" font-weight="bold" textLength="10.5" lengthAdjust="spacingAndGlyphs" >LPDDR6</text>
<path d="M1058.5 394.1H1070.0" stroke="#2828b0" stroke-width="0.6"/>
<path d="M1054.2 393.0H1082.6" stroke="#6c6c6c" stroke-width="0.65"/>
<text x="1081.2" y="392.7" font-size="4.3" fill="#161616" text-anchor="end" textLength="5.5" lengthAdjust="spacingAndGlyphs" >AB3</text>
<text x="1084.2" y="394.6" font-size="4.3" fill="#000" textLength="8.5" lengthAdjust="spacingAndGlyphs" >XMDM_23</text>
<text x="1059.0" y="396.6" font-size="4.3" fill="#1a1a9a" font-weight="bold" textLength="10.5" lengthAdjust="spacingAndGlyphs" >LPDDR7</text>
<path d="M1058.5 397.0H1070.0" stroke="#2828b0" stroke-width="0.6"/>
<path d="M1054.2 395.9H1082.6" stroke="#6c6c6c" stroke-width="0.65"/>
<text x="1081.2" y="395.6" font-size="4.3" fill="#161616" text-anchor="end" textLength="4.5" lengthAdjust="spacingAndGlyphs" >AC7</text>
<text x="1084.2" y="397.5" font-size="4.3" fill="#000" textLength="9.5" lengthAdjust="spacingAndGlyphs" >XMDQ_3</text>
<text x="1000.3" y="403.8" font-size="4.3" fill="#111" textLength="3.0" lengthAdjust="spacingAndGlyphs" >(1)</text>
<text x="1018.5" y="404.6" font-size="4.3" fill="#1a1a9a" font-weight="bold" textLength="11.0" lengthAdjust="spacingAndGlyphs" >LPDDR_DM3</text>
<path d="M1018.5 405.1H1029.5" stroke="#5a5ac8" stroke-width="0.35"/>
<rect x="1031.6" y="402.6" width="5.2" height="3.6" fill="#fff" stroke="#8a8a8a" stroke-width="0.6" rx="1"/>
<path d="M1036.8 404.4H1082.6" stroke="#777" stroke-width="0.7"/>
<text x="1081.2" y="404.1" font-size="4.3" fill="#161616" text-anchor="end" textLength="5.5" lengthAdjust="spacingAndGlyphs" >AC7</text>
<text x="1084.2" y="406.0" font-size="4.3" fill="#000" textLength="16.0" lengthAdjust="spacingAndGlyphs" >XMDQ_23</text>
<text x="1000.3" y="409.2" font-size="4.3" fill="#111" textLength="3.0" lengthAdjust="spacingAndGlyphs" >(1)</text>
<text x="1013.5" y="410.0" font-size="4.3" fill="#1a1a9a" font-weight="bold" textLength="16.0" lengthAdjust="spacingAndGlyphs" >LPDDR_DQS3P</text>
<path d="M1013.5 410.5H1029.5" stroke="#5a5ac8" stroke-width="0.35"/>
<rect x="1031.6" y="408.0" width="5.2" height="3.6" fill="#fff" stroke="#8a8a8a" stroke-width="0.6" rx="1"/>
<path d="M1036.8 409.8H1082.6" stroke="#777" stroke-width="0.7"/>
<text x="1081.2" y="409.5" font-size="4.3" fill="#161616" text-anchor="end" textLength="4.5" lengthAdjust="spacingAndGlyphs" >U9</text>
<text x="1084.2" y="411.4" font-size="4.3" fill="#000" textLength="16.0" lengthAdjust="spacingAndGlyphs" >XMDQ_22</text>
<text x="1000.3" y="415.1" font-size="4.3" fill="#111" textLength="3.0" lengthAdjust="spacingAndGlyphs" >(1)</text>
<text x="1013.5" y="415.9" font-size="4.3" fill="#1a1a9a" font-weight="bold" textLength="16.0" lengthAdjust="spacingAndGlyphs" >LPDDR_DQS3N</text>
<path d="M1013.5 416.4H1029.5" stroke="#5a5ac8" stroke-width="0.35"/>
<rect x="1031.6" y="413.9" width="5.2" height="3.6" fill="#fff" stroke="#8a8a8a" stroke-width="0.6" rx="1"/>
<path d="M1036.8 415.7H1082.6" stroke="#777" stroke-width="0.7"/>
<text x="1081.2" y="415.4" font-size="4.3" fill="#161616" text-anchor="end" textLength="4.5" lengthAdjust="spacingAndGlyphs" >AC7</text>
<text x="1084.2" y="417.3" font-size="4.3" fill="#000" textLength="13.0" lengthAdjust="spacingAndGlyphs" >XMDQ_6</text>
<text x="1037.0" y="426.3" font-size="4.3" fill="#1a1a9a" font-weight="bold" textLength="17.0" lengthAdjust="spacingAndGlyphs" >LPDDR_CA[9:0]</text>
<path d="M1037.0 426.8H1054.0" stroke="#5a5ac8" stroke-width="0.35"/>
<path d="M1037 427.9 H1052.6 L1054.2 429.5 V458.4" stroke="#14142e" stroke-width="1.1" fill="none"/>
<text x="1039.5" y="430.9" font-size="4.3" fill="#161616" textLength="3.0" lengthAdjust="spacingAndGlyphs" >(1)</text>
<text x="1059.0" y="430.7" font-size="4.3" fill="#1a1a9a" font-weight="bold" textLength="10.5" lengthAdjust="spacingAndGlyphs" >LPDDR0</text>
<path d="M1058.5 431.1H1070.0" stroke="#2828b0" stroke-width="0.6"/>
<path d="M1054.2 430.0H1082.6" stroke="#6c6c6c" stroke-width="0.65"/>
<text x="1081.2" y="429.7" font-size="4.3" fill="#161616" text-anchor="end" textLength="4.5" lengthAdjust="spacingAndGlyphs" >Y14</text>
<text x="1084.2" y="431.6" font-size="4.3" fill="#000" textLength="9.5" lengthAdjust="spacingAndGlyphs" >XMCA_8</text>
<text x="1059.0" y="433.6" font-size="4.3" fill="#1a1a9a" font-weight="bold" textLength="10.5" lengthAdjust="spacingAndGlyphs" >LPDDR1</text>
<path d="M1058.5 434.0H1070.0" stroke="#2828b0" stroke-width="0.6"/>
<path d="M1054.2 432.9H1082.6" stroke="#6c6c6c" stroke-width="0.65"/>
<text x="1081.2" y="432.6" font-size="4.3" fill="#161616" text-anchor="end" textLength="5.5" lengthAdjust="spacingAndGlyphs" >Y14</text>
<text x="1084.2" y="434.5" font-size="4.3" fill="#000" textLength="8.5" lengthAdjust="spacingAndGlyphs" >XMDQ_24</text>
<text x="1059.0" y="436.4" font-size="4.3" fill="#1a1a9a" font-weight="bold" textLength="10.5" lengthAdjust="spacingAndGlyphs" >LPDDR2</text>
<path d="M1058.5 436.8H1070.0" stroke="#2828b0" stroke-width="0.6"/>
<path d="M1054.2 435.7H1082.6" stroke="#6c6c6c" stroke-width="0.65"/>
<text x="1081.2" y="435.4" font-size="4.3" fill="#161616" text-anchor="end" textLength="4.5" lengthAdjust="spacingAndGlyphs" >T11</text>
<text x="1084.2" y="437.3" font-size="4.3" fill="#000" textLength="8.5" lengthAdjust="spacingAndGlyphs" >XMDM_14</text>
<text x="1059.0" y="439.3" font-size="4.3" fill="#1a1a9a" font-weight="bold" textLength="10.5" lengthAdjust="spacingAndGlyphs" >LPDDR3</text>
<path d="M1058.5 439.7H1070.0" stroke="#2828b0" stroke-width="0.6"/>
<path d="M1054.2 438.6H1082.6" stroke="#6c6c6c" stroke-width="0.65"/>
<text x="1081.2" y="438.3" font-size="4.3" fill="#161616" text-anchor="end" textLength="4.5" lengthAdjust="spacingAndGlyphs" >Y14</text>
<text x="1084.2" y="440.2" font-size="4.3" fill="#000" textLength="10.0" lengthAdjust="spacingAndGlyphs" >XMCA_11</text>
<text x="1059.0" y="442.2" font-size="4.3" fill="#1a1a9a" font-weight="bold" textLength="10.5" lengthAdjust="spacingAndGlyphs" >LPDDR4</text>
<path d="M1058.5 442.6H1070.0" stroke="#2828b0" stroke-width="0.6"/>
<path d="M1054.2 441.5H1082.6" stroke="#6c6c6c" stroke-width="0.65"/>
<text x="1081.2" y="441.2" font-size="4.3" fill="#161616" text-anchor="end" textLength="4.5" lengthAdjust="spacingAndGlyphs" >AC7</text>
<text x="1084.2" y="443.1" font-size="4.3" fill="#000" textLength="10.0" lengthAdjust="spacingAndGlyphs" >XMCA_10</text>
<text x="1059.0" y="445.1" font-size="4.3" fill="#1a1a9a" font-weight="bold" textLength="10.5" lengthAdjust="spacingAndGlyphs" >LPDDR5</text>
<path d="M1058.5 445.5H1070.0" stroke="#2828b0" stroke-width="0.6"/>
<path d="M1054.2 444.4H1082.6" stroke="#6c6c6c" stroke-width="0.65"/>
<text x="1081.2" y="444.1" font-size="4.3" fill="#161616" text-anchor="end" textLength="4.5" lengthAdjust="spacingAndGlyphs" >W12</text>
<text x="1084.2" y="446.0" font-size="4.3" fill="#000" textLength="9.5" lengthAdjust="spacingAndGlyphs" >XMDQ_15</text>
<text x="1059.0" y="447.9" font-size="4.3" fill="#1a1a9a" font-weight="bold" textLength="10.5" lengthAdjust="spacingAndGlyphs" >LPDDR6</text>
<path d="M1058.5 448.3H1070.0" stroke="#2828b0" stroke-width="0.6"/>
<path d="M1054.2 447.2H1082.6" stroke="#6c6c6c" stroke-width="0.65"/>
<text x="1081.2" y="446.9" font-size="4.3" fill="#161616" text-anchor="end" textLength="4.5" lengthAdjust="spacingAndGlyphs" >AC7</text>
<text x="1084.2" y="448.8" font-size="4.3" fill="#000" textLength="10.0" lengthAdjust="spacingAndGlyphs" >XMDM_2</text>
<text x="1059.0" y="450.8" font-size="4.3" fill="#1a1a9a" font-weight="bold" textLength="10.5" lengthAdjust="spacingAndGlyphs" >LPDDR7</text>
<path d="M1058.5 451.2H1070.0" stroke="#2828b0" stroke-width="0.6"/>
<path d="M1054.2 450.1H1082.6" stroke="#6c6c6c" stroke-width="0.65"/>
<text x="1081.2" y="449.8" font-size="4.3" fill="#161616" text-anchor="end" textLength="4.5" lengthAdjust="spacingAndGlyphs" >W12</text>
<text x="1084.2" y="451.7" font-size="4.3" fill="#000" textLength="10.0" lengthAdjust="spacingAndGlyphs" >XMCA_29</text>
<text x="1059.0" y="453.7" font-size="4.3" fill="#1a1a9a" font-weight="bold" textLength="10.5" lengthAdjust="spacingAndGlyphs" >LPDDR8</text>
<path d="M1058.5 454.1H1070.0" stroke="#2828b0" stroke-width="0.6"/>
<path d="M1054.2 453.0H1082.6" stroke="#6c6c6c" stroke-width="0.65"/>
<text x="1081.2" y="452.7" font-size="4.3" fill="#161616" text-anchor="end" textLength="5.5" lengthAdjust="spacingAndGlyphs" >T11</text>
<text x="1084.2" y="454.6" font-size="4.3" fill="#000" textLength="10.0" lengthAdjust="spacingAndGlyphs" >XMDM_26</text>
<text x="1059.0" y="456.5" font-size="4.3" fill="#1a1a9a" font-weight="bold" textLength="10.5" lengthAdjust="spacingAndGlyphs" >LPDDR9</text>
<path d="M1058.5 456.9H1070.0" stroke="#2828b0" stroke-width="0.6"/>
<path d="M1054.2 455.8H1082.6" stroke="#6c6c6c" stroke-width="0.65"/>
<text x="1081.2" y="455.5" font-size="4.3" fill="#161616" text-anchor="end" textLength="4.5" lengthAdjust="spacingAndGlyphs" >U9</text>
<text x="1084.2" y="457.4" font-size="4.3" fill="#000" textLength="9.5" lengthAdjust="spacingAndGlyphs" >XMCA_24</text>
<path d="M1198.0 220.5H1243.8" stroke="#777" stroke-width="0.7"/>
<rect x="1244.0" y="218.7" width="5.2" height="3.6" fill="#fff" stroke="#8a8a8a" stroke-width="0.6" rx="1"/>
<text x="1251.0" y="220.9" font-size="4.3" fill="#1a1a9a" font-weight="bold" textLength="17.0" lengthAdjust="spacingAndGlyphs" >EMMC_CLK</text>
<path d="M1251.0 221.4H1268.0" stroke="#5a5ac8" stroke-width="0.35"/>
<text x="1276.5" y="221.1" font-size="4.3" fill="#111" textLength="3.5" lengthAdjust="spacingAndGlyphs" >(4)</text>
<text x="1199.4" y="220.2" font-size="4.3" fill="#161616" textLength="6.5" lengthAdjust="spacingAndGlyphs" >W24</text>
<text x="1196.6" y="221.9" font-size="4.3" fill="#000" text-anchor="end" textLength="12.0" lengthAdjust="spacingAndGlyphs" >XGPIO7</text>
<path d="M1198.0 226.1H1243.8" stroke="#777" stroke-width="0.7"/>
<rect x="1244.0" y="224.3" width="5.2" height="3.6" fill="#fff" stroke="#8a8a8a" stroke-width="0.6" rx="1"/>
<text x="1251.0" y="226.5" font-size="4.3" fill="#1a1a9a" font-weight="bold" textLength="17.0" lengthAdjust="spacingAndGlyphs" >EMMC_CMD</text>
<path d="M1251.0 227.0H1268.0" stroke="#5a5ac8" stroke-width="0.35"/>
<text x="1276.5" y="226.7" font-size="4.3" fill="#111" textLength="3.5" lengthAdjust="spacingAndGlyphs" >(4)</text>
<text x="1199.4" y="225.8" font-size="4.3" fill="#161616" textLength="5.5" lengthAdjust="spacingAndGlyphs" >AC27</text>
<text x="1196.6" y="227.5" font-size="4.3" fill="#000" text-anchor="end" textLength="13.5" lengthAdjust="spacingAndGlyphs" >XMMC_D9</text>
<path d="M1198.0 231.7H1243.8" stroke="#777" stroke-width="0.7"/>
<rect x="1244.0" y="229.9" width="5.2" height="3.6" fill="#fff" stroke="#8a8a8a" stroke-width="0.6" rx="1"/>
<text x="1251.0" y="232.1" font-size="4.3" fill="#1a1a9a" font-weight="bold" textLength="16.5" lengthAdjust="spacingAndGlyphs" >EMMC_RST</text>
<path d="M1251.0 232.6H1267.5" stroke="#5a5ac8" stroke-width="0.35"/>
<text x="1276.5" y="232.3" font-size="4.3" fill="#111" textLength="3.5" lengthAdjust="spacingAndGlyphs" >(4)</text>
<text x="1199.4" y="231.4" font-size="4.3" fill="#161616" textLength="6.5" lengthAdjust="spacingAndGlyphs" >Y26</text>
<text x="1196.6" y="233.1" font-size="4.3" fill="#000" text-anchor="end" textLength="12.5" lengthAdjust="spacingAndGlyphs" >XMMC_D7</text>
<text x="1214.0" y="219.6" font-size="3.7" fill="#161616" textLength="8.0" lengthAdjust="spacingAndGlyphs" >R1000</text>
<path d="M1223 220.2 l.8 1 l.9 -2 l.9 2 l.9 -2 l.8 1" stroke="#6c6c6c" stroke-width="0.4" fill="none"/>
<text x="1229.0" y="219.6" font-size="3.7" fill="#161616" textLength="13.5" lengthAdjust="spacingAndGlyphs" >0000_NC</text>
<text x="1251.0" y="238.4" font-size="4.3" fill="#1a1a9a" font-weight="bold" textLength="15.0" lengthAdjust="spacingAndGlyphs" >EMMC_DATA[7:0]</text>
<path d="M1198.0 240.3H1243.8" stroke="#6c6c6c" stroke-width="0.65"/>
<rect x="1244.0" y="238.5" width="5.2" height="3.6" fill="#fff" stroke="#8a8a8a" stroke-width="0.6" rx="1"/>
<text x="1251.0" y="241.3" font-size="4.3" fill="#1a1a9a" font-weight="bold" textLength="15.0" lengthAdjust="spacingAndGlyphs" >EMMC_D0</text>
<path d="M1251.0 241.8H1266.0" stroke="#2828b0" stroke-width="0.6"/>
<text x="1276.5" y="241.1" font-size="4.3" fill="#111" textLength="3.5" lengthAdjust="spacingAndGlyphs" >(4)</text>
<text x="1199.4" y="240.0" font-size="4.3" fill="#161616" textLength="6.5" lengthAdjust="spacingAndGlyphs" >U29</text>
<text x="1196.6" y="241.7" font-size="4.3" fill="#000" text-anchor="end" textLength="11.5" lengthAdjust="spacingAndGlyphs" >XMMC_D7</text>
<path d="M1198.0 243.2H1243.8" stroke="#6c6c6c" stroke-width="0.65"/>
<rect x="1244.0" y="241.4" width="5.2" height="3.6" fill="#fff" stroke="#8a8a8a" stroke-width="0.6" rx="1"/>
<text x="1251.0" y="244.2" font-size="4.3" fill="#1a1a9a" font-weight="bold" textLength="15.0" lengthAdjust="spacingAndGlyphs" >EMMC_D1</text>
<path d="M1251.0 244.7H1266.0" stroke="#2828b0" stroke-width="0.6"/>
<text x="1276.5" y="244.0" font-size="4.3" fill="#111" textLength="3.5" lengthAdjust="spacingAndGlyphs" >(4)</text>
<text x="1199.4" y="242.9" font-size="4.3" fill="#161616" textLength="5.5" lengthAdjust="spacingAndGlyphs" >Y26</text>
<text x="1196.6" y="244.6" font-size="4.3" fill="#000" text-anchor="end" textLength="11.5" lengthAdjust="spacingAndGlyphs" >XMMC_D2</text>
<path d="M1198.0 246.1H1243.8" stroke="#6c6c6c" stroke-width="0.65"/>
<rect x="1244.0" y="244.3" width="5.2" height="3.6" fill="#fff" stroke="#8a8a8a" stroke-width="0.6" rx="1"/>
<text x="1251.0" y="247.1" font-size="4.3" fill="#1a1a9a" font-weight="bold" textLength="15.0" lengthAdjust="spacingAndGlyphs" >EMMC_D2</text>
<path d="M1251.0 247.6H1266.0" stroke="#2828b0" stroke-width="0.6"/>
<text x="1276.5" y="246.9" font-size="4.3" fill="#111" textLength="3.5" lengthAdjust="spacingAndGlyphs" >(4)</text>
<text x="1199.4" y="245.8" font-size="4.3" fill="#161616" textLength="6.5" lengthAdjust="spacingAndGlyphs" >W24</text>
<text x="1196.6" y="247.5" font-size="4.3" fill="#000" text-anchor="end" textLength="11.5" lengthAdjust="spacingAndGlyphs" >XMMC_C1</text>
<path d="M1198.0 249.0H1243.8" stroke="#6c6c6c" stroke-width="0.65"/>
<rect x="1244.0" y="247.2" width="5.2" height="3.6" fill="#fff" stroke="#8a8a8a" stroke-width="0.6" rx="1"/>
<text x="1251.0" y="250.0" font-size="4.3" fill="#1a1a9a" font-weight="bold" textLength="15.0" lengthAdjust="spacingAndGlyphs" >EMMC_D3</text>
<path d="M1251.0 250.5H1266.0" stroke="#2828b0" stroke-width="0.6"/>
<text x="1276.5" y="249.8" font-size="4.3" fill="#111" textLength="3.5" lengthAdjust="spacingAndGlyphs" >(4)</text>
<text x="1199.4" y="248.7" font-size="4.3" fill="#161616" textLength="5.5" lengthAdjust="spacingAndGlyphs" >Y26</text>
<text x="1196.6" y="250.4" font-size="4.3" fill="#000" text-anchor="end" textLength="11.5" lengthAdjust="spacingAndGlyphs" >XMMC_D2</text>
<path d="M1198.0 251.9H1243.8" stroke="#6c6c6c" stroke-width="0.65"/>
<rect x="1244.0" y="250.1" width="5.2" height="3.6" fill="#fff" stroke="#8a8a8a" stroke-width="0.6" rx="1"/>
<text x="1251.0" y="252.9" font-size="4.3" fill="#1a1a9a" font-weight="bold" textLength="15.0" lengthAdjust="spacingAndGlyphs" >EMMC_D4</text>
<path d="M1251.0 253.4H1266.0" stroke="#2828b0" stroke-width="0.6"/>
<text x="1276.5" y="252.7" font-size="4.3" fill="#111" textLength="3.5" lengthAdjust="spacingAndGlyphs" >(4)</text>
<text x="1199.4" y="251.6" font-size="4.3" fill="#161616" textLength="6.5" lengthAdjust="spacingAndGlyphs" >AB23</text>
<text x="1196.6" y="253.3" font-size="4.3" fill="#000" text-anchor="end" textLength="11.5" lengthAdjust="spacingAndGlyphs" >XGPIO8</text>
<path d="M1198.0 254.8H1243.8" stroke="#6c6c6c" stroke-width="0.65"/>
<rect x="1244.0" y="253.0" width="5.2" height="3.6" fill="#fff" stroke="#8a8a8a" stroke-width="0.6" rx="1"/>
<text x="1251.0" y="255.8" font-size="4.3" fill="#1a1a9a" font-weight="bold" textLength="15.0" lengthAdjust="spacingAndGlyphs" >EMMC_D5</text>
<path d="M1251.0 256.3H1266.0" stroke="#2828b0" stroke-width="0.6"/>
<text x="1276.5" y="255.6" font-size="4.3" fill="#111" textLength="3.5" lengthAdjust="spacingAndGlyphs" >(4)</text>
<text x="1199.4" y="254.5" font-size="4.3" fill="#161616" textLength="5.5" lengthAdjust="spacingAndGlyphs" >AB23</text>
<text x="1196.6" y="256.2" font-size="4.3" fill="#000" text-anchor="end" textLength="11.5" lengthAdjust="spacingAndGlyphs" >XGPIO6</text>
<path d="M1198.0 257.7H1243.8" stroke="#6c6c6c" stroke-width="0.65"/>
<rect x="1244.0" y="255.9" width="5.2" height="3.6" fill="#fff" stroke="#8a8a8a" stroke-width="0.6" rx="1"/>
<text x="1251.0" y="258.7" font-size="4.3" fill="#1a1a9a" font-weight="bold" textLength="15.0" lengthAdjust="spacingAndGlyphs" >EMMC_D6</text>
<path d="M1251.0 259.2H1266.0" stroke="#2828b0" stroke-width="0.6"/>
<text x="1276.5" y="258.5" font-size="4.3" fill="#111" textLength="3.5" lengthAdjust="spacingAndGlyphs" >(4)</text>
<text x="1199.4" y="257.4" font-size="4.3" fill="#161616" textLength="5.5" lengthAdjust="spacingAndGlyphs" >AC27</text>
<text x="1196.6" y="259.1" font-size="4.3" fill="#000" text-anchor="end" textLength="11.5" lengthAdjust="spacingAndGlyphs" >XMMC_D9</text>
<path d="M1198.0 260.6H1243.8" stroke="#6c6c6c" stroke-width="0.65"/>
<rect x="1244.0" y="258.8" width="5.2" height="3.6" fill="#fff" stroke="#8a8a8a" stroke-width="0.6" rx="1"/>
<text x="1251.0" y="261.6" font-size="4.3" fill="#1a1a9a" font-weight="bold" textLength="15.0" lengthAdjust="spacingAndGlyphs" >EMMC_D7</text>
<path d="M1251.0 262.1H1266.0" stroke="#2828b0" stroke-width="0.6"/>
<text x="1276.5" y="261.4" font-size="4.3" fill="#111" textLength="3.5" lengthAdjust="spacingAndGlyphs" >(4)</text>
<text x="1199.4" y="260.3" font-size="4.3" fill="#161616" textLength="5.5" lengthAdjust="spacingAndGlyphs" >AB23</text>
<text x="1196.6" y="262.0" font-size="4.3" fill="#000" text-anchor="end" textLength="11.5" lengthAdjust="spacingAndGlyphs" >XMMC_D7</text>
<text x="1226.5" y="278.8" font-size="4.3" fill="#1a1a9a" font-weight="bold" textLength="15.5" lengthAdjust="spacingAndGlyphs" >XGPIO[7:0]</text>
<path d="M1226.5 279.3H1242.0" stroke="#5a5ac8" stroke-width="0.35"/>
<path d="M1242 280.5 H1226.5 V329.6" stroke="#14142e" stroke-width="1.1" fill="none"/>
<path d="M1198.0 283.2H1199.2" stroke="#6c6c6c" stroke-width="0.65"/>
<text x="1199.4" y="282.9" font-size="4.3" fill="#161616" textLength="5.5" lengthAdjust="spacingAndGlyphs" >AC27</text>
<text x="1196.6" y="284.6" font-size="4.3" fill="#000" text-anchor="end" textLength="9.0" lengthAdjust="spacingAndGlyphs" >XMMC_D5</text>
<path d="M1198.0 286.1H1199.2" stroke="#6c6c6c" stroke-width="0.65"/>
<text x="1199.4" y="285.8" font-size="4.3" fill="#161616" textLength="5.5" lengthAdjust="spacingAndGlyphs" >W24</text>
<text x="1196.6" y="287.5" font-size="4.3" fill="#000" text-anchor="end" textLength="10.5" lengthAdjust="spacingAndGlyphs" >XMMC_C9</text>
<path d="M1198.0 289.0H1199.2" stroke="#6c6c6c" stroke-width="0.65"/>
<text x="1199.4" y="288.7" font-size="4.3" fill="#161616" textLength="5.5" lengthAdjust="spacingAndGlyphs" >Y26</text>
<text x="1196.6" y="290.4" font-size="4.3" fill="#000" text-anchor="end" textLength="9.0" lengthAdjust="spacingAndGlyphs" >XMMC_C8</text>
<path d="M1198.0 291.9H1199.2" stroke="#6c6c6c" stroke-width="0.65"/>
<text x="1199.4" y="291.6" font-size="4.3" fill="#161616" textLength="6.5" lengthAdjust="spacingAndGlyphs" >AC27</text>
<text x="1196.6" y="293.3" font-size="4.3" fill="#000" text-anchor="end" textLength="9.0" lengthAdjust="spacingAndGlyphs" >XGPIO8</text>
<path d="M1198.0 300.4H1199.2" stroke="#6c6c6c" stroke-width="0.65"/>
<text x="1199.4" y="300.1" font-size="4.3" fill="#161616" textLength="6.5" lengthAdjust="spacingAndGlyphs" >W24</text>
<text x="1196.6" y="301.8" font-size="4.3" fill="#000" text-anchor="end" textLength="8.0" lengthAdjust="spacingAndGlyphs" >XMMC_D3</text>
<path d="M1198.0 306.2H1199.2" stroke="#6c6c6c" stroke-width="0.65"/>
<text x="1199.4" y="305.9" font-size="4.3" fill="#161616" textLength="5.5" lengthAdjust="spacingAndGlyphs" >Y26</text>
<text x="1196.6" y="307.6" font-size="4.3" fill="#000" text-anchor="end" textLength="8.0" lengthAdjust="spacingAndGlyphs" >XGPIO4</text>
<path d="M1198.0 309.1H1199.2" stroke="#6c6c6c" stroke-width="0.65"/>
<text x="1199.4" y="308.8" font-size="4.3" fill="#161616" textLength="6.5" lengthAdjust="spacingAndGlyphs" >W24</text>
<text x="1196.6" y="310.5" font-size="4.3" fill="#000" text-anchor="end" textLength="10.5" lengthAdjust="spacingAndGlyphs" >XMMC_D4</text>
<path d="M1198.0 317.5H1199.2" stroke="#6c6c6c" stroke-width="0.65"/>
<text x="1199.4" y="317.2" font-size="4.3" fill="#161616" textLength="5.5" lengthAdjust="spacingAndGlyphs" >U29</text>
<text x="1196.6" y="318.9" font-size="4.3" fill="#000" text-anchor="end" textLength="8.0" lengthAdjust="spacingAndGlyphs" >XGPIO5</text>
<path d="M1198.0 320.4H1199.2" stroke="#6c6c6c" stroke-width="0.65"/>
<text x="1199.4" y="320.1" font-size="4.3" fill="#161616" textLength="5.5" lengthAdjust="spacingAndGlyphs" >U29</text>
<text x="1196.6" y="321.8" font-size="4.3" fill="#000" text-anchor="end" textLength="9.0" lengthAdjust="spacingAndGlyphs" >XMMC_C8</text>
<path d="M1198.0 326.2H1199.2" stroke="#6c6c6c" stroke-width="0.65"/>
<text x="1199.4" y="325.9" font-size="4.3" fill="#161616" textLength="6.5" lengthAdjust="spacingAndGlyphs" >Y26</text>
<text x="1196.6" y="327.6" font-size="4.3" fill="#000" text-anchor="end" textLength="10.5" lengthAdjust="spacingAndGlyphs" >XMMC_C6</text>
<path d="M1198.0 343.7H1199.2" stroke="#6c6c6c" stroke-width="0.65"/>
<text x="1199.4" y="343.4" font-size="4.3" fill="#161616" textLength="5.5" lengthAdjust="spacingAndGlyphs" >U29</text>
<text x="1196.6" y="345.1" font-size="4.3" fill="#000" text-anchor="end" textLength="9.0" lengthAdjust="spacingAndGlyphs" >XMMC_C5</text>
<path d="M1198.0 346.6H1199.2" stroke="#6c6c6c" stroke-width="0.65"/>
<text x="1199.4" y="346.3" font-size="4.3" fill="#161616" textLength="5.5" lengthAdjust="spacingAndGlyphs" >Y26</text>
<text x="1196.6" y="348.0" font-size="4.3" fill="#000" text-anchor="end" textLength="8.0" lengthAdjust="spacingAndGlyphs" >XMMC_D9</text>
<path d="M1198.0 349.5H1199.2" stroke="#6c6c6c" stroke-width="0.65"/>
<text x="1199.4" y="349.2" font-size="4.3" fill="#161616" textLength="6.5" lengthAdjust="spacingAndGlyphs" >AB23</text>
<text x="1196.6" y="350.9" font-size="4.3" fill="#000" text-anchor="end" textLength="10.5" lengthAdjust="spacingAndGlyphs" >XGPIO4</text>
<path d="M1198.0 398.2H1243.8" stroke="#777" stroke-width="0.7"/>
<rect x="1244.0" y="396.4" width="5.2" height="3.6" fill="#fff" stroke="#8a8a8a" stroke-width="0.6" rx="1"/>
<text x="1251.0" y="398.6" font-size="4.3" fill="#1a1a9a" font-weight="bold" textLength="13.5" lengthAdjust="spacingAndGlyphs" >CP_PMIC_A</text>
<path d="M1251.0 399.1H1264.5" stroke="#5a5ac8" stroke-width="0.35"/>
<text x="1276.5" y="398.8" font-size="4.3" fill="#111" textLength="3.5" lengthAdjust="spacingAndGlyphs" >(5)</text>
<text x="1199.4" y="397.9" font-size="4.3" fill="#161616" textLength="6.5" lengthAdjust="spacingAndGlyphs" >U29</text>
<text x="1196.6" y="399.6" font-size="4.3" fill="#000" text-anchor="end" textLength="13.5" lengthAdjust="spacingAndGlyphs" >XGPIO0</text>
<path d="M1198.0 400.9H1243.8" stroke="#777" stroke-width="0.7"/>
<rect x="1244.0" y="399.1" width="5.2" height="3.6" fill="#fff" stroke="#8a8a8a" stroke-width="0.6" rx="1"/>
<text x="1251.0" y="401.3" font-size="4.3" fill="#1a1a9a" font-weight="bold" textLength="14.0" lengthAdjust="spacingAndGlyphs" >CP_PMIC_B</text>
<path d="M1251.0 401.8H1265.0" stroke="#5a5ac8" stroke-width="0.35"/>
<text x="1276.5" y="401.5" font-size="4.3" fill="#111" textLength="3.5" lengthAdjust="spacingAndGlyphs" >(5)</text>
<text x="1199.4" y="400.6" font-size="4.3" fill="#161616" textLength="5.5" lengthAdjust="spacingAndGlyphs" >AC27</text>
<text x="1196.6" y="402.3" font-size="4.3" fill="#000" text-anchor="end" textLength="11.5" lengthAdjust="spacingAndGlyphs" >XMMC_C9</text>
<path d="M1198.0 407.2H1243.8" stroke="#777" stroke-width="0.7"/>
<rect x="1244.0" y="405.4" width="5.2" height="3.6" fill="#fff" stroke="#8a8a8a" stroke-width="0.6" rx="1"/>
<text x="1251.0" y="407.6" font-size="4.3" fill="#1a1a9a" font-weight="bold" textLength="13.0" lengthAdjust="spacingAndGlyphs" >CP_UART</text>
<path d="M1251.0 408.1H1264.0" stroke="#5a5ac8" stroke-width="0.35"/>
<text x="1276.5" y="407.8" font-size="4.3" fill="#111" textLength="3.5" lengthAdjust="spacingAndGlyphs" >(5)</text>
<text x="1199.4" y="406.9" font-size="4.3" fill="#161616" textLength="6.5" lengthAdjust="spacingAndGlyphs" >Y26</text>
<text x="1196.6" y="408.6" font-size="4.3" fill="#000" text-anchor="end" textLength="13.5" lengthAdjust="spacingAndGlyphs" >XMMC_D2</text>
<path d="M1198.0 415.6H1243.8" stroke="#777" stroke-width="0.7"/>
<rect x="1244.0" y="413.8" width="5.2" height="3.6" fill="#fff" stroke="#8a8a8a" stroke-width="0.6" rx="1"/>
<text x="1251.0" y="416.0" font-size="4.3" fill="#1a1a9a" font-weight="bold" textLength="12.5" lengthAdjust="spacingAndGlyphs" >AP_WAKE</text>
<path d="M1251.0 416.5H1263.5" stroke="#5a5ac8" stroke-width="0.35"/>
<text x="1276.5" y="416.2" font-size="4.3" fill="#111" textLength="3.5" lengthAdjust="spacingAndGlyphs" >(5)</text>
<text x="1199.4" y="415.3" font-size="4.3" fill="#161616" textLength="5.5" lengthAdjust="spacingAndGlyphs" >AC27</text>
<text x="1196.6" y="417.0" font-size="4.3" fill="#000" text-anchor="end" textLength="13.5" lengthAdjust="spacingAndGlyphs" >XMMC_D0</text>
<path d="M1198.0 418.1H1243.8" stroke="#777" stroke-width="0.7"/>
<rect x="1244.0" y="416.3" width="5.2" height="3.6" fill="#fff" stroke="#8a8a8a" stroke-width="0.6" rx="1"/>
<text x="1251.0" y="418.5" font-size="4.3" fill="#1a1a9a" font-weight="bold" textLength="12.0" lengthAdjust="spacingAndGlyphs" >AP_RDY</text>
<path d="M1251.0 419.0H1263.0" stroke="#5a5ac8" stroke-width="0.35"/>
<text x="1276.5" y="418.7" font-size="4.3" fill="#111" textLength="3.5" lengthAdjust="spacingAndGlyphs" >(5)</text>
<text x="1199.4" y="417.8" font-size="4.3" fill="#161616" textLength="6.5" lengthAdjust="spacingAndGlyphs" >U29</text>
<text x="1196.6" y="419.5" font-size="4.3" fill="#000" text-anchor="end" textLength="11.5" lengthAdjust="spacingAndGlyphs" >XMMC_C1</text>
<path d="M1198.0 461.4H1211.5" stroke="#6c6c6c" stroke-width="0.65"/>
<rect x="1211.5" y="461.0" width="31.5" height="4.2" fill="#ffffee" stroke="#8a8a8a" stroke-width="0.5" />
<text x="1214.0" y="464.4" font-size="3.7" fill="#161616" textLength="7.0" lengthAdjust="spacingAndGlyphs" >C1001</text>
<text x="1225.0" y="464.4" font-size="3.7" fill="#161616" textLength="2.5" lengthAdjust="spacingAndGlyphs" >1/</text>
<text x="1231.0" y="464.4" font-size="3.7" fill="#161616" textLength="10.5" lengthAdjust="spacingAndGlyphs" >100_NC</text>
<text x="1226.5" y="467.8" font-size="4.3" fill="#161616" textLength="2.5" lengthAdjust="spacingAndGlyphs" >1/</text>
<rect x="1244.0" y="460.4" width="5.2" height="3.6" fill="#fff" stroke="#8a8a8a" stroke-width="0.6" rx="1"/>
<text x="1251.0" y="461.5" font-size="4.3" fill="#1a1a9a" font-weight="bold" textLength="8.5" lengthAdjust="spacingAndGlyphs" >CP_RST</text>
<path d="M1251.0 462.0H1259.5" stroke="#5a5ac8" stroke-width="0.35"/>
<text x="1277.0" y="461.5" font-size="4.3" fill="#111" textLength="3.5" lengthAdjust="spacingAndGlyphs" >(5)</text>
<text x="1199.4" y="461.1" font-size="4.3" fill="#161616" textLength="6.5" lengthAdjust="spacingAndGlyphs" >U29</text>
<text x="1196.6" y="462.8" font-size="4.3" fill="#000" text-anchor="end" textLength="7.5" lengthAdjust="spacingAndGlyphs" >XGPIO3</text>
<text x="1196.6" y="474.4" font-size="4.3" fill="#000" text-anchor="end" textLength="6.0" lengthAdjust="spacingAndGlyphs" >XMMC_C9</text>
<path d="M1198.0 473.4H1214.0" stroke="#777" stroke-width="0.6"/>
<text x="1199.3" y="472.4" font-size="4.3" fill="#1a1a9a" font-weight="bold" textLength="16.0" lengthAdjust="spacingAndGlyphs" >CP_RTC_CLK</text>
<path d="M1199.3 472.9H1215.5" stroke="#2828b0" stroke-width="0.6"/>
<rect x="1214.0" y="472.5" width="30.5" height="5.6" fill="#fffff0" stroke="#f0f0b0" stroke-width="0.4" />
<text x="1216.0" y="476.2" font-size="3.7" fill="#161616" textLength="8.0" lengthAdjust="spacingAndGlyphs" >R1042</text>
<path d="M1225 476.6 l.8 1 l.9 -2 l.9 2 l.9 -2 l.9 2 l.8 -1" stroke="#6c6c6c" stroke-width="0.4" fill="none"/>
<text x="1232.0" y="476.2" font-size="3.7" fill="#161616" textLength="10.5" lengthAdjust="spacingAndGlyphs" >100_NC</text>
</svg>
</div>
<div id="status" class="abs"><div class="abs ser" style="left:0px;top:5px;color:#000;letter-spacing:1.063px">Version:1.0.0.52</div>
<div class="abs ser" style="left:1309px;top:5px;color:#fff;letter-spacing:0.258px">Current [S72MA0AB1(C160)schematics]</div>
</div>
</body>
</html>
